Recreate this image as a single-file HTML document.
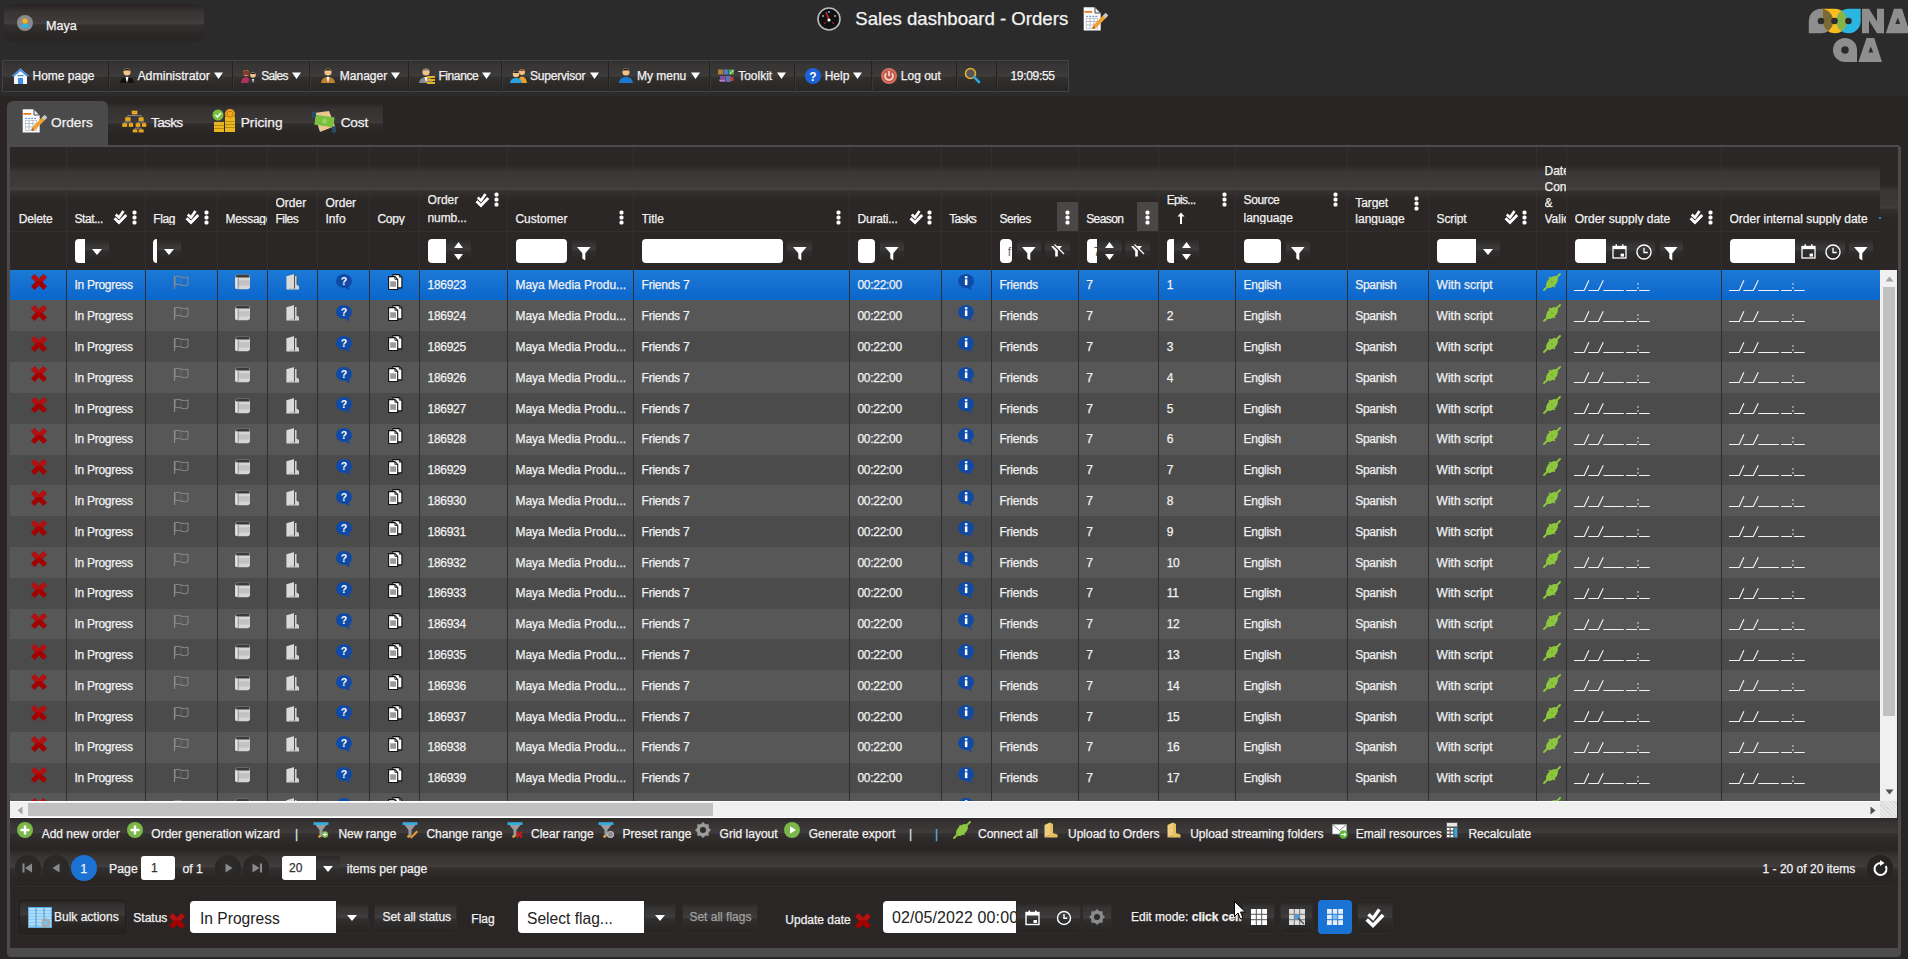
<!DOCTYPE html>
<html><head><meta charset="utf-8"><title>Sales dashboard - Orders</title>
<style>
html,body{margin:0;padding:0;}
body{width:1908px;height:959px;overflow:hidden;position:relative;background:#2a2525;font-family:"Liberation Sans", sans-serif;-webkit-text-stroke:0.25px;}
svg{display:block;overflow:visible}
</style></head><body>
<div style="position:absolute;left:0;top:0;width:1908px;height:96px;background:#2b2b2b"></div>
<div style="position:absolute;left:4px;top:4px;width:200px;height:39px;border-radius:9px;background:linear-gradient(to bottom, rgba(255,255,255,0) 2px, rgba(255,255,255,0.071) 8px, rgba(255,255,255,0.092) 16px, rgba(255,255,255,0.115) 19.5px, rgba(255,255,255,0.045) 21px, rgba(255,255,255,0) 32px), #2b2626;"></div>
<svg style="position:absolute;left:17px;top:15px" width="16" height="16" viewBox="0 0 16 16"><circle cx="8" cy="8" r="8" fill="#8a8a8a"/><circle cx="8" cy="6" r="2.6" fill="#f6b41a"/><path d="M3.2 12.5 Q3.5 9 8 9 Q12.5 9 12.8 12.5 Z" fill="#29b3e8"/></svg>
<div style="position:absolute;left:46px;top:19.53px;font-size:12.6px;line-height:12.6px;color:#f2f2f2;white-space:nowrap;">Maya</div>
<svg style="position:absolute;left:817px;top:7px" width="24" height="24" viewBox="0 0 24 24"><circle cx="12" cy="12" r="11" fill="#111" stroke="#bbb" stroke-width="1.6"/><path d="M12 13 L9 5" stroke="#e02020" stroke-width="1.5"/><circle cx="12" cy="13" r="1.6" fill="#fff"/><circle cx="6" cy="9" r="1" fill="#aaa"/><circle cx="18" cy="9" r="1" fill="#aaa"/><circle cx="12" cy="5" r="1" fill="#6af"/><path d="M7 17 L9 15 M17 17 L15 15" stroke="#e02020" stroke-width="1"/></svg>
<div style="position:absolute;left:855.3px;top:10.06px;font-size:18.6px;line-height:18.6px;color:#f4f4f4;white-space:nowrap;">Sales dashboard - Orders</div>
<svg style="position:absolute;left:1083px;top:7px" width="25" height="25" viewBox="0 0 25 25"><path d="M0.7 0.2 H12 L17.7 6 V23.6 H0.7 Z" fill="#fafafa"/><path d="M12 0.2 V6 H17.7 Z" fill="#f0f0f0" stroke="#333" stroke-width=".9" stroke-linejoin="round"/><rect x="1.4" y="4" width="7.8" height="1.7" fill="#e8741a"/><g fill="#5a8ac8"><rect x="3.3" y="8.8" width="1.6" height="1.3"/><rect x="6.3" y="8.8" width="1.6" height="1.3"/><rect x="9.3" y="8.8" width="1.6" height="1.3"/><rect x="12.3" y="8.8" width="1.6" height="1.3"/></g><rect x="3" y="11" width="12" height="10.6" fill="#aab4be"/><rect x="3.6" y="11.6" width="3" height="2.6" fill="#fff"/><rect x="7.5" y="11.6" width="3" height="2.6" fill="#fff"/><rect x="11.4" y="11.6" width="3" height="2.6" fill="#fff"/><rect x="3.6" y="15.0" width="3" height="2.6" fill="#fff"/><rect x="7.5" y="15.0" width="3" height="2.6" fill="#fff"/><rect x="11.4" y="15.0" width="3" height="2.6" fill="#fff"/><rect x="3.6" y="18.4" width="3" height="2.6" fill="#fff"/><rect x="7.5" y="18.4" width="3" height="2.6" fill="#fff"/><rect x="11.4" y="18.4" width="3" height="2.6" fill="#fff"/><path d="M11.6 19.6 L22.6 8.6" stroke="#f0a030" stroke-width="3.8"/><path d="M21.2 10 L24 7.2" stroke="#c8c8c8" stroke-width="3.8"/><path d="M9.8 21.4 L11.6 19.6" stroke="#c86a18" stroke-width="2.6"/></svg>
<svg style="position:absolute;left:0;top:0" width="1908" height="70" viewBox="0 0 1908 70">
<g fill="#8e8e8e">
<path d="M1808.8 21 A12.2 12.2 0 0 1 1821 8.8 A12.2 12.2 0 0 1 1833.2 21 A12.2 12.2 0 0 1 1821 33.2 H1808.8 Z"/>
<path d="M1862 33.2 V8.8 H1869 L1877 21.5 V8.8 H1884 V33.2 H1877 L1869 20.5 V33.2 Z"/>
<path d="M1894 8.8 H1902 L1910 33.2 H1885.8 Z"/>
<path d="M1833 50 A12 12 0 0 1 1845 38 A12 12 0 0 1 1857 50 V62 H1845 A12 12 0 0 1 1833 50 Z"/>
<path d="M1866.5 38 H1874.2 L1882 62 H1858.4 Z"/>
</g>
<defs><clipPath id="cg"><path d="M1808.8 21 A12.2 12.2 0 0 1 1821 8.8 A12.2 12.2 0 0 1 1833.2 21 A12.2 12.2 0 0 1 1821 33.2 H1808.8 Z"/></clipPath><clipPath id="cy"><path d="M1822.8 8.8 H1835 A12.2 12.2 0 0 1 1847.2 21 A12.2 12.2 0 0 1 1835 33.2 A12.2 12.2 0 0 1 1822.8 21 Z"/></clipPath></defs><path d="M1822.8 8.8 H1835 A12.2 12.2 0 0 1 1847.2 21 A12.2 12.2 0 0 1 1835 33.2 A12.2 12.2 0 0 1 1822.8 21 Z" fill="#fbbd1c"/><path d="M1836.3 21 A12.2 12.2 0 0 1 1848.5 8.8 H1860.7 V21 A12.2 12.2 0 0 1 1848.5 33.2 A12.2 12.2 0 0 1 1836.3 21 Z" fill="#29b6e0"/><path d="M1822.8 8.8 H1835 A12.2 12.2 0 0 1 1847.2 21 A12.2 12.2 0 0 1 1835 33.2 A12.2 12.2 0 0 1 1822.8 21 Z" fill="#7a6a36" clip-path="url(#cg)"/><path d="M1836.3 21 A12.2 12.2 0 0 1 1848.5 8.8 H1860.7 V21 A12.2 12.2 0 0 1 1848.5 33.2 A12.2 12.2 0 0 1 1836.3 21 Z" fill="#86b446" clip-path="url(#cy)"/>
<g fill="#2b2b2b">
<circle cx="1821" cy="21" r="3.3"/><circle cx="1834.5" cy="21" r="3.3"/><circle cx="1848.5" cy="21" r="3.3"/>
<circle cx="1845" cy="50" r="3.8"/>
<path d="M1897.8 17.5 L1900.2 24 H1895.4 Z"/>
<path d="M1870.8 46.5 L1873.2 52.5 H1868.4 Z"/>
</g></svg>
<div style="position:absolute;left:2px;top:60px;width:1067px;height:32px;box-sizing:border-box;border:1px solid #444242;background:linear-gradient(to bottom, rgba(255,255,255,0) -2.5px, rgba(255,255,255,0.062) 3.5px, rgba(255,255,255,0.080) 11.5px, rgba(255,255,255,0.1) 15.0px, rgba(255,255,255,0.04) 16.5px, rgba(255,255,255,0) 27.5px), #2a2727;"></div>
<div style="position:absolute;left:107.5px;top:61px;width:1px;height:29px;background:#252222;box-shadow:1px 0 0 #3a3737"></div>
<div style="position:absolute;left:231.7px;top:61px;width:1px;height:29px;background:#252222;box-shadow:1px 0 0 #3a3737"></div>
<div style="position:absolute;left:309.4px;top:61px;width:1px;height:29px;background:#252222;box-shadow:1px 0 0 #3a3737"></div>
<div style="position:absolute;left:408.4px;top:61px;width:1px;height:29px;background:#252222;box-shadow:1px 0 0 #3a3737"></div>
<div style="position:absolute;left:500.6px;top:61px;width:1px;height:29px;background:#252222;box-shadow:1px 0 0 #3a3737"></div>
<div style="position:absolute;left:607.6px;top:61px;width:1px;height:29px;background:#252222;box-shadow:1px 0 0 #3a3737"></div>
<div style="position:absolute;left:708.5px;top:61px;width:1px;height:29px;background:#252222;box-shadow:1px 0 0 #3a3737"></div>
<div style="position:absolute;left:794.4px;top:61px;width:1px;height:29px;background:#252222;box-shadow:1px 0 0 #3a3737"></div>
<div style="position:absolute;left:871.4px;top:61px;width:1px;height:29px;background:#252222;box-shadow:1px 0 0 #3a3737"></div>
<div style="position:absolute;left:955.6px;top:61px;width:1px;height:29px;background:#252222;box-shadow:1px 0 0 #3a3737"></div>
<div style="position:absolute;left:996.2px;top:61px;width:1px;height:29px;background:#252222;box-shadow:1px 0 0 #3a3737"></div>
<svg style="position:absolute;left:12px;top:68px" width="17" height="16" viewBox="0 0 17 16"><path d="M8.5 0.5 L17 8 L15 8 L15 16 L2 16 L2 8 L0 8 Z" fill="#f4f4f4"/><path d="M8.5 0.5 L17 8 L15.2 8.8 L8.5 3 L1.8 8.8 L0 8 Z" fill="#3d8ee0"/><rect x="6" y="10" width="5" height="6" fill="#3d8ee0"/><rect x="5.5" y="7" width="6" height="1.2" fill="#3d8ee0"/></svg>
<div style="position:absolute;left:32.5px;top:69.84px;font-size:12px;line-height:12px;color:#f2f2f2;white-space:nowrap;">Home page</div>
<svg style="position:absolute;left:118.5px;top:67px" width="16" height="16" viewBox="0 0 16 16"><circle cx="8" cy="5" r="3.6" fill="#f2c28a"/><path d="M4.3 4 Q8 -0.5 11.7 4 Q8 2.5 4.3 4Z" fill="#111"/><path d="M1 16 Q1.5 10 8 10 Q14.5 10 15 16 Z" fill="#111"/><path d="M6.5 10 L8 16 L9.5 10 Z" fill="#fff"/></svg>
<div style="position:absolute;left:137.4px;top:69.59px;font-size:12.3px;line-height:12.3px;color:#f2f2f2;white-space:nowrap;">Administrator</div>
<svg style="position:absolute;left:214px;top:71.5px" width="9" height="7" viewBox="0 0 9 7"><path d="M0 0.5 H9 L4.5 7 Z" fill="#fff"/></svg>
<svg style="position:absolute;left:241px;top:68px" width="17" height="15" viewBox="0 0 17 15"><circle cx="5" cy="5" r="3" fill="#f2c28a"/><path d="M2 4 Q5 0 8 4 L8 8 Q5 6 2 8Z" fill="#8a3a2a"/><path d="M0 15 Q0.5 9 5 9 Q9 9 9 15Z" fill="#b03060"/><circle cx="12" cy="7" r="2.8" fill="#f2c28a"/><path d="M9.3 6 Q12 3 14.7 6Z" fill="#111"/><path d="M7 15 Q7.5 11 12 11 Q16.5 11 17 15Z" fill="#333"/><path d="M11 11 L12 15 L13 11Z" fill="#fff"/></svg>
<div style="position:absolute;left:261.3px;top:69.84px;font-size:12px;line-height:12px;color:#f2f2f2;white-space:nowrap;letter-spacing:-0.7px">Sales</div>
<svg style="position:absolute;left:292px;top:71.5px" width="9" height="7" viewBox="0 0 9 7"><path d="M0 0.5 H9 L4.5 7 Z" fill="#fff"/></svg>
<svg style="position:absolute;left:320px;top:67px" width="16" height="16" viewBox="0 0 16 16"><circle cx="8" cy="5" r="3.6" fill="#f2c28a"/><path d="M4.3 4 Q8 -0.5 11.7 4 Q8 2.5 4.3 4Z" fill="#111"/><path d="M1 16 Q1.5 10 8 10 Q14.5 10 15 16 Z" fill="#c08030"/><path d="M6.5 10 L8 16 L9.5 10 Z" fill="#fff"/></svg>
<div style="position:absolute;left:339.8px;top:69.84px;font-size:12px;line-height:12px;color:#f2f2f2;white-space:nowrap;">Manager</div>
<svg style="position:absolute;left:390.5px;top:71.5px" width="9" height="7" viewBox="0 0 9 7"><path d="M0 0.5 H9 L4.5 7 Z" fill="#fff"/></svg>
<svg style="position:absolute;left:418.4px;top:67px" width="16" height="16" viewBox="0 0 16 16"><circle cx="8" cy="5" r="3.6" fill="#f2c28a"/><path d="M4.3 4 Q8 -0.5 11.7 4 Q8 2.5 4.3 4Z" fill="#777"/><path d="M1 16 Q1.5 10 8 10 Q14.5 10 15 16 Z" fill="#888"/><path d="M6.5 10 L8 16 L9.5 10 Z" fill="#fff"/></svg>
<svg style="position:absolute;left:427px;top:75px" width="8" height="9" viewBox="0 0 8 9"><g fill="#e8b020"><rect x="0" y="1" width="8" height="2"/><rect x="0" y="4" width="8" height="2"/><rect x="0" y="7" width="8" height="2"/></g></svg>
<div style="position:absolute;left:438.4px;top:69.84px;font-size:12px;line-height:12px;color:#f2f2f2;white-space:nowrap;letter-spacing:-0.4px">Finance</div>
<svg style="position:absolute;left:482.4px;top:71.5px" width="9" height="7" viewBox="0 0 9 7"><path d="M0 0.5 H9 L4.5 7 Z" fill="#fff"/></svg>
<svg style="position:absolute;left:509.6px;top:67px" width="17" height="16" viewBox="0 0 17 16"><circle cx="12" cy="5" r="3" fill="#f2c28a"/><path d="M8 16 Q8.5 9.5 12 9.5 Q16 9.5 17 16Z" fill="#f0a020"/><path d="M9 4 Q12 0 15 4Z" fill="#8a4a2a"/><circle cx="6" cy="7" r="3.2" fill="#f2c28a"/><path d="M2.8 6 Q6 2 9.2 6Z" fill="#222"/><path d="M0 16 Q0.5 11 6 11 Q11.5 11 12 16Z" fill="#2aa0e0"/></svg>
<div style="position:absolute;left:530px;top:69.84px;font-size:12px;line-height:12px;color:#f2f2f2;white-space:nowrap;letter-spacing:-0.22px">Supervisor</div>
<svg style="position:absolute;left:590px;top:71.5px" width="9" height="7" viewBox="0 0 9 7"><path d="M0 0.5 H9 L4.5 7 Z" fill="#fff"/></svg>
<svg style="position:absolute;left:617.6px;top:67px" width="16" height="16" viewBox="0 0 16 16"><circle cx="8" cy="5" r="3.6" fill="#f2c28a"/><path d="M4.3 4 Q8 -0.5 11.7 4 Q8 2.5 4.3 4Z" fill="#111"/><path d="M1 16 Q1.5 10 8 10 Q14.5 10 15 16 Z" fill="#1a7ad0"/><path d="M6.5 10 L8 16 L9.5 10 Z" fill="#1a7ad0"/></svg>
<div style="position:absolute;left:636.9px;top:69.84px;font-size:12px;line-height:12px;color:#f2f2f2;white-space:nowrap;">My menu</div>
<svg style="position:absolute;left:690.5px;top:71.5px" width="9" height="7" viewBox="0 0 9 7"><path d="M0 0.5 H9 L4.5 7 Z" fill="#fff"/></svg>
<svg style="position:absolute;left:717.5px;top:69px" width="16" height="14" viewBox="0 0 16 14"><rect x="0" y="0.5" width="5" height="5" fill="#b08030"/><rect x="5.5" y="0.5" width="5" height="5" fill="#5080c0"/><rect x="11" y="0.5" width="5" height="5" fill="#50a040"/><rect x="2" y="7" width="5" height="6" fill="#8050a0"/><rect x="7.5" y="7" width="5" height="6" fill="#6070b0"/><rect x="12" y="8" width="3.5" height="4" fill="#c04040"/><path d="M12 5 L15.5 1" stroke="#fff" stroke-width="1"/><path d="M1 11 Q4 13 7 11" stroke="#c090d0" stroke-width="1" fill="none"/></svg>
<div style="position:absolute;left:738.2px;top:69.84px;font-size:12px;line-height:12px;color:#f2f2f2;white-space:nowrap;">Toolkit</div>
<svg style="position:absolute;left:776.8px;top:71.5px" width="9" height="7" viewBox="0 0 9 7"><path d="M0 0.5 H9 L4.5 7 Z" fill="#fff"/></svg>
<svg style="position:absolute;left:805px;top:67.5px" width="16" height="16" viewBox="0 0 16 16"><circle cx="8" cy="8" r="8" fill="#1d62d8"/><text x="8" y="12.6" font-size="12" font-weight="bold" text-anchor="middle" fill="#fff" font-family="Liberation Sans">?</text></svg>
<div style="position:absolute;left:824.7px;top:69.84px;font-size:12px;line-height:12px;color:#f2f2f2;white-space:nowrap;">Help</div>
<svg style="position:absolute;left:853px;top:71.5px" width="9" height="7" viewBox="0 0 9 7"><path d="M0 0.5 H9 L4.5 7 Z" fill="#fff"/></svg>
<svg style="position:absolute;left:880.6px;top:67.5px" width="16" height="16" viewBox="0 0 16 16"><circle cx="8" cy="8" r="8" fill="#d87060"/><circle cx="8" cy="8" r="6.4" fill="#c85a4a"/><path d="M5.2 5.2 A4 4 0 1 0 10.8 5.2" stroke="#f4e0dc" stroke-width="1.6" fill="none"/><path d="M8 3 V8" stroke="#f4e0dc" stroke-width="1.6"/></svg>
<div style="position:absolute;left:900.8px;top:69.84px;font-size:12px;line-height:12px;color:#f2f2f2;white-space:nowrap;">Log out</div>
<svg style="position:absolute;left:963.5px;top:66.5px" width="17" height="17" viewBox="0 0 17 17"><circle cx="6.5" cy="6.5" r="5" fill="#555" stroke="#e8b030" stroke-width="1.6"/><path d="M10.2 10.2 L15 15" stroke="#2aa8e0" stroke-width="2.6" stroke-linecap="round"/></svg>
<div style="position:absolute;left:1010.4px;top:69.84px;font-size:12px;line-height:12px;color:#f2f2f2;white-space:nowrap;letter-spacing:-0.3px">19:09:55</div>
<div style="position:absolute;left:7px;top:101px;width:376px;height:44px;background:linear-gradient(to bottom, rgba(255,255,255,0) 2px, rgba(255,255,255,0.062) 8px, rgba(255,255,255,0.080) 18px, rgba(255,255,255,0.1) 21.5px, rgba(255,255,255,0.035) 23px, rgba(255,255,255,0) 34px), #2a2525;"></div>
<div style="position:absolute;left:7px;top:101px;width:101px;height:44px;background:#4a4a4a;border-radius:6px 6px 0 0"></div>
<svg style="position:absolute;left:22px;top:109px" width="25" height="24" viewBox="0 0 25 24"><path d="M0.7 0.2 H12 L17.7 6 V23.6 H0.7 Z" fill="#fafafa"/><path d="M12 0.2 V6 H17.7 Z" fill="#f0f0f0" stroke="#333" stroke-width=".9" stroke-linejoin="round"/><rect x="1.4" y="4" width="7.8" height="1.7" fill="#e8741a"/><g fill="#5a8ac8"><rect x="3.3" y="8.8" width="1.6" height="1.3"/><rect x="6.3" y="8.8" width="1.6" height="1.3"/><rect x="9.3" y="8.8" width="1.6" height="1.3"/><rect x="12.3" y="8.8" width="1.6" height="1.3"/></g><rect x="3" y="11" width="12" height="10.6" fill="#aab4be"/><rect x="3.6" y="11.6" width="3" height="2.6" fill="#fff"/><rect x="7.5" y="11.6" width="3" height="2.6" fill="#fff"/><rect x="11.4" y="11.6" width="3" height="2.6" fill="#fff"/><rect x="3.6" y="15.0" width="3" height="2.6" fill="#fff"/><rect x="7.5" y="15.0" width="3" height="2.6" fill="#fff"/><rect x="11.4" y="15.0" width="3" height="2.6" fill="#fff"/><rect x="3.6" y="18.4" width="3" height="2.6" fill="#fff"/><rect x="7.5" y="18.4" width="3" height="2.6" fill="#fff"/><rect x="11.4" y="18.4" width="3" height="2.6" fill="#fff"/><path d="M11.6 19.6 L22.6 8.6" stroke="#f0a030" stroke-width="3.8"/><path d="M21.2 10 L24 7.2" stroke="#c8c8c8" stroke-width="3.8"/><path d="M9.8 21.4 L11.6 19.6" stroke="#c86a18" stroke-width="2.6"/></svg>
<div style="position:absolute;left:51px;top:116.40px;font-size:13.7px;line-height:13.7px;color:#f2f2f2;white-space:nowrap;">Orders</div>
<svg style="position:absolute;left:121.6px;top:109.5px" width="25" height="23" viewBox="0 0 25 23"><path d="M12.6 4.3 V5.6 M5.8 5.6 H19.2 M5.8 5.6 V7.3 M19.2 5.6 V7.3 M5.8 10.9 V12 M2.7 12 H9 M2.7 12 V13.2 M9 12 V13.2 M19.2 10.9 V12 M16 12 H22.1 M16 12 V13.2 M22.1 12 V13.2 M16 16.8 V18.2 M13 18.2 H19.2 M13 18.2 V19.4 M19.2 18.2 V19.4" stroke="#9a9a9a" stroke-width=".8" fill="none"/><rect x="9.8" y="0.7" width="5.6" height="3.6" fill="#f2b01e"/><rect x="10.8" y="1.9" width="3.5999999999999996" height="0.8" fill="#c8801a" opacity=".6"/><rect x="3.2" y="7.3" width="5.3" height="3.6" fill="#f2b01e"/><rect x="4.2" y="8.5" width="3.3" height="0.8" fill="#c8801a" opacity=".6"/><rect x="16.7" y="7.3" width="4.9" height="3.6" fill="#f2b01e"/><rect x="17.7" y="8.5" width="2.9000000000000004" height="0.8" fill="#c8801a" opacity=".6"/><rect x="0.3" y="13.2" width="4.9" height="3.6" fill="#f2b01e"/><rect x="1.3" y="14.399999999999999" width="2.9000000000000004" height="0.8" fill="#c8801a" opacity=".6"/><rect x="6.8" y="13.2" width="4.3" height="3.6" fill="#f2b01e"/><rect x="7.8" y="14.399999999999999" width="2.3" height="0.8" fill="#c8801a" opacity=".6"/><rect x="13.7" y="13.2" width="4.6" height="3.6" fill="#f2b01e"/><rect x="14.7" y="14.399999999999999" width="2.5999999999999996" height="0.8" fill="#c8801a" opacity=".6"/><rect x="19.9" y="13.2" width="4.3" height="3.6" fill="#f2b01e"/><rect x="20.9" y="14.399999999999999" width="2.3" height="0.8" fill="#c8801a" opacity=".6"/><rect x="10.8" y="19.4" width="4.6" height="3" fill="#f2b01e"/><rect x="11.8" y="20.599999999999998" width="2.5999999999999996" height="0.8" fill="#c8801a" opacity=".6"/><rect x="16.7" y="19.4" width="4.9" height="3" fill="#f2b01e"/><rect x="17.7" y="20.599999999999998" width="2.9000000000000004" height="0.8" fill="#c8801a" opacity=".6"/></svg>
<div style="position:absolute;left:151px;top:116.40px;font-size:13.7px;line-height:13.7px;color:#f2f2f2;white-space:nowrap;letter-spacing:-0.7px">Tasks</div>
<svg style="position:absolute;left:211.7px;top:109px" width="24" height="24" viewBox="0 0 24 24"><g fill="#e8b820"><rect x="2" y="13" width="10" height="10"/><rect x="13" y="8" width="10" height="15"/></g><g fill="#c08a10"><rect x="2" y="16" width="10" height="1"/><rect x="2" y="19" width="10" height="1"/><rect x="13" y="12" width="10" height="1"/><rect x="13" y="15" width="10" height="1"/><rect x="13" y="18" width="10" height="1"/></g><circle cx="6" cy="6" r="5.5" fill="#7ac040"/><path d="M3.5 6 L5.5 8 L9 4" stroke="#fff" stroke-width="1.5" fill="none"/><circle cx="18" cy="5" r="5" fill="#f0a818"/><circle cx="18" cy="5" r="3" fill="none" stroke="#c07a10" stroke-width="1"/></svg>
<div style="position:absolute;left:240.7px;top:116.40px;font-size:13.7px;line-height:13.7px;color:#f2f2f2;white-space:nowrap;">Pricing</div>
<svg style="position:absolute;left:312.4px;top:109.5px" width="24" height="23" viewBox="0 0 24 23"><path d="M2 3 L17 1 L23 16 L8 22 Z" fill="#e8c890"/><rect x="3" y="6" width="19" height="10" fill="#7ac040" transform="rotate(8 12 11)"/><circle cx="12.5" cy="11" r="2.5" fill="#9ad060"/><path d="M0 2 L4 1 L4 7 L0 8Z" fill="#2a4a6a"/><path d="M20 17 L24 16 L24 22 L20 23Z" fill="#2a4a6a"/></svg>
<div style="position:absolute;left:340.7px;top:116.40px;font-size:13.7px;line-height:13.7px;color:#f2f2f2;white-space:nowrap;letter-spacing:-0.2px">Cost</div>
<div style="position:absolute;left:7px;top:145px;width:1894px;height:811.6px;background:#4b4b4b;border-radius:0 4px 4px 4px"></div>
<div style="position:absolute;left:10px;top:147px;width:1888px;height:738px;background:#2b2726"></div>
<div style="position:absolute;left:10px;top:885px;width:1888px;height:62.6px;background:#2a2626"></div>
<div style="position:absolute;left:10px;top:147px;width:1870px;height:84px;background:linear-gradient(to bottom, rgba(255,255,255,0) 19px, rgba(255,255,255,0.074) 25px, rgba(255,255,255,0.096) 39px, rgba(255,255,255,0.12) 42.5px, rgba(255,255,255,0.045) 44px, rgba(255,255,255,0) 53px), #2b2726;"></div>
<div style="position:absolute;left:1880px;top:147px;width:17.6px;height:122.80000000000001px;background:linear-gradient(to bottom, rgba(255,255,255,0) 37.5px, rgba(255,255,255,0.065) 43.5px, rgba(255,255,255,0.084) 57.5px, rgba(255,255,255,0.105) 61.0px, rgba(255,255,255,0.04) 62.5px, rgba(255,255,255,0) 71.5px), #2b2726;"></div>
<div style="position:absolute;left:10px;top:231px;width:1870px;height:38.80000000000001px;background:#2b2726;border-top:1px solid #322e2e;box-sizing:border-box"></div>
<div style="position:absolute;left:65.7px;top:147px;width:1px;height:122.80000000000001px;background:rgba(60,56,56,.55)"></div>
<div style="position:absolute;left:144.7px;top:147px;width:1px;height:122.80000000000001px;background:rgba(60,56,56,.55)"></div>
<div style="position:absolute;left:216.8px;top:147px;width:1px;height:122.80000000000001px;background:rgba(60,56,56,.55)"></div>
<div style="position:absolute;left:266.9px;top:147px;width:1px;height:122.80000000000001px;background:rgba(60,56,56,.55)"></div>
<div style="position:absolute;left:317.0px;top:147px;width:1px;height:122.80000000000001px;background:rgba(60,56,56,.55)"></div>
<div style="position:absolute;left:368.9px;top:147px;width:1px;height:122.80000000000001px;background:rgba(60,56,56,.55)"></div>
<div style="position:absolute;left:419.0px;top:147px;width:1px;height:122.80000000000001px;background:rgba(60,56,56,.55)"></div>
<div style="position:absolute;left:507.0px;top:147px;width:1px;height:122.80000000000001px;background:rgba(60,56,56,.55)"></div>
<div style="position:absolute;left:633.0px;top:147px;width:1px;height:122.80000000000001px;background:rgba(60,56,56,.55)"></div>
<div style="position:absolute;left:849.0px;top:147px;width:1px;height:122.80000000000001px;background:rgba(60,56,56,.55)"></div>
<div style="position:absolute;left:941.1px;top:147px;width:1px;height:122.80000000000001px;background:rgba(60,56,56,.55)"></div>
<div style="position:absolute;left:990.9px;top:147px;width:1px;height:122.80000000000001px;background:rgba(60,56,56,.55)"></div>
<div style="position:absolute;left:1078.0px;top:147px;width:1px;height:122.80000000000001px;background:rgba(60,56,56,.55)"></div>
<div style="position:absolute;left:1158.0px;top:147px;width:1px;height:122.80000000000001px;background:rgba(60,56,56,.55)"></div>
<div style="position:absolute;left:1234.9px;top:147px;width:1px;height:122.80000000000001px;background:rgba(60,56,56,.55)"></div>
<div style="position:absolute;left:1347.0px;top:147px;width:1px;height:122.80000000000001px;background:rgba(60,56,56,.55)"></div>
<div style="position:absolute;left:1427.8px;top:147px;width:1px;height:122.80000000000001px;background:rgba(60,56,56,.55)"></div>
<div style="position:absolute;left:1536.0px;top:147px;width:1px;height:122.80000000000001px;background:rgba(60,56,56,.55)"></div>
<div style="position:absolute;left:1566.1px;top:147px;width:1px;height:122.80000000000001px;background:rgba(60,56,56,.55)"></div>
<div style="position:absolute;left:1721.1px;top:147px;width:1px;height:122.80000000000001px;background:rgba(60,56,56,.55)"></div>
<div style="position:absolute;left:18.7px;top:212.74px;width:47.0px;overflow:hidden;font-size:12px;line-height:12px;color:#f2f2f2;white-space:nowrap;letter-spacing:-0.15px">Delete</div>
<div style="position:absolute;left:74.5px;top:212.74px;width:70.2px;overflow:hidden;font-size:12px;line-height:12px;color:#f2f2f2;white-space:nowrap;letter-spacing:-0.43px">Stat...</div>
<div style="position:absolute;left:153.3px;top:212.74px;width:63.5px;overflow:hidden;font-size:12px;line-height:12px;color:#f2f2f2;white-space:nowrap;letter-spacing:-0.4px">Flag</div>
<div style="position:absolute;left:225.5px;top:212.74px;width:41.4px;overflow:hidden;font-size:12px;line-height:12px;color:#f2f2f2;white-space:nowrap;letter-spacing:-0.3px">Messages</div>
<div style="position:absolute;left:275.5px;top:196.84px;width:41.5px;overflow:hidden;font-size:12px;line-height:12px;color:#f2f2f2;white-space:nowrap;letter-spacing:0px">Order</div>
<div style="position:absolute;left:275.5px;top:212.74px;width:41.5px;overflow:hidden;font-size:12px;line-height:12px;color:#f2f2f2;white-space:nowrap;letter-spacing:-0.54px">Files</div>
<div style="position:absolute;left:325.4px;top:196.84px;width:43.5px;overflow:hidden;font-size:12px;line-height:12px;color:#f2f2f2;white-space:nowrap;letter-spacing:0px">Order</div>
<div style="position:absolute;left:325.4px;top:212.74px;width:43.5px;overflow:hidden;font-size:12px;line-height:12px;color:#f2f2f2;white-space:nowrap;letter-spacing:0.1px">Info</div>
<div style="position:absolute;left:377.4px;top:212.74px;width:41.6px;overflow:hidden;font-size:12px;line-height:12px;color:#f2f2f2;white-space:nowrap;letter-spacing:-0.2px">Copy</div>
<div style="position:absolute;left:427.6px;top:193.64px;width:79.4px;overflow:hidden;font-size:12px;line-height:12px;color:#f2f2f2;white-space:nowrap;letter-spacing:0px">Order</div>
<div style="position:absolute;left:427.6px;top:212.14px;width:79.4px;overflow:hidden;font-size:12px;line-height:12px;color:#f2f2f2;white-space:nowrap;letter-spacing:-0.15px">numb...</div>
<div style="position:absolute;left:515.4px;top:212.74px;width:117.6px;overflow:hidden;font-size:12px;line-height:12px;color:#f2f2f2;white-space:nowrap;letter-spacing:0px">Customer</div>
<div style="position:absolute;left:641.6px;top:212.74px;width:207.4px;overflow:hidden;font-size:12px;line-height:12px;color:#f2f2f2;white-space:nowrap;letter-spacing:0px">Title</div>
<div style="position:absolute;left:857.5px;top:212.74px;width:83.6px;overflow:hidden;font-size:12px;line-height:12px;color:#f2f2f2;white-space:nowrap;letter-spacing:-0.21px">Durati...</div>
<div style="position:absolute;left:949.3px;top:212.74px;width:41.6px;overflow:hidden;font-size:12px;line-height:12px;color:#f2f2f2;white-space:nowrap;letter-spacing:-0.78px">Tasks</div>
<div style="position:absolute;left:999.5px;top:212.74px;width:78.5px;overflow:hidden;font-size:12px;line-height:12px;color:#f2f2f2;white-space:nowrap;letter-spacing:-0.47px">Series</div>
<div style="position:absolute;left:1086.2px;top:212.74px;width:71.8px;overflow:hidden;font-size:12px;line-height:12px;color:#f2f2f2;white-space:nowrap;letter-spacing:-0.57px">Season</div>
<div style="position:absolute;left:1166.7px;top:193.94px;width:68.2px;overflow:hidden;font-size:12px;line-height:12px;color:#f2f2f2;white-space:nowrap;letter-spacing:-0.67px">Epis...</div>
<div style="position:absolute;left:1243.5px;top:193.94px;width:103.5px;overflow:hidden;font-size:12px;line-height:12px;color:#f2f2f2;white-space:nowrap;letter-spacing:-0.35px">Source</div>
<div style="position:absolute;left:1243.5px;top:212.24px;width:103.5px;overflow:hidden;font-size:12px;line-height:12px;color:#f2f2f2;white-space:nowrap;letter-spacing:0px">language</div>
<div style="position:absolute;left:1355.3px;top:197.24px;width:72.5px;overflow:hidden;font-size:12px;line-height:12px;color:#f2f2f2;white-space:nowrap;letter-spacing:-0.11px">Target</div>
<div style="position:absolute;left:1355.3px;top:213.04px;width:72.5px;overflow:hidden;font-size:12px;line-height:12px;color:#f2f2f2;white-space:nowrap;letter-spacing:0px">language</div>
<div style="position:absolute;left:1436.6px;top:212.74px;width:99.4px;overflow:hidden;font-size:12px;line-height:12px;color:#f2f2f2;white-space:nowrap;letter-spacing:-0.13px">Script</div>
<div style="position:absolute;left:1544.5px;top:165.04px;width:21.6px;overflow:hidden;font-size:12px;line-height:12px;color:#f2f2f2;white-space:nowrap;letter-spacing:0px">Date</div>
<div style="position:absolute;left:1544.5px;top:180.94px;width:21.6px;overflow:hidden;font-size:12px;line-height:12px;color:#f2f2f2;white-space:nowrap;letter-spacing:0px">Con</div>
<div style="position:absolute;left:1544.5px;top:196.84px;width:21.6px;overflow:hidden;font-size:12px;line-height:12px;color:#f2f2f2;white-space:nowrap;letter-spacing:0px">&amp;</div>
<div style="position:absolute;left:1544.5px;top:212.74px;width:21.6px;overflow:hidden;font-size:12px;line-height:12px;color:#f2f2f2;white-space:nowrap;letter-spacing:0px">Valic</div>
<div style="position:absolute;left:1574.7px;top:212.74px;width:146.4px;overflow:hidden;font-size:12px;line-height:12px;color:#f2f2f2;white-space:nowrap;letter-spacing:0px">Order supply date</div>
<div style="position:absolute;left:1729.5px;top:212.74px;width:150.0px;overflow:hidden;font-size:12px;line-height:12px;color:#f2f2f2;white-space:nowrap;letter-spacing:0px">Order internal supply date</div>
<svg style="position:absolute;left:114px;top:209.5px" width="14" height="14" viewBox="0 0 14 14"><path d="M1.75 4.5 L5 7.5 L9.5 1" stroke="#fff" stroke-width="2.6" fill="none" stroke-linejoin="miter"/><path d="M0.5 8.25 L5 12.5 L12.25 5" stroke="#fff" stroke-width="2.8" fill="none"/></svg>
<svg style="position:absolute;left:185.8px;top:209.5px" width="14" height="14" viewBox="0 0 14 14"><path d="M1.75 4.5 L5 7.5 L9.5 1" stroke="#fff" stroke-width="2.6" fill="none" stroke-linejoin="miter"/><path d="M0.5 8.25 L5 12.5 L12.25 5" stroke="#fff" stroke-width="2.8" fill="none"/></svg>
<svg style="position:absolute;left:910.2px;top:209.5px" width="14" height="14" viewBox="0 0 14 14"><path d="M1.75 4.5 L5 7.5 L9.5 1" stroke="#fff" stroke-width="2.6" fill="none" stroke-linejoin="miter"/><path d="M0.5 8.25 L5 12.5 L12.25 5" stroke="#fff" stroke-width="2.8" fill="none"/></svg>
<svg style="position:absolute;left:1505px;top:209.5px" width="14" height="14" viewBox="0 0 14 14"><path d="M1.75 4.5 L5 7.5 L9.5 1" stroke="#fff" stroke-width="2.6" fill="none" stroke-linejoin="miter"/><path d="M0.5 8.25 L5 12.5 L12.25 5" stroke="#fff" stroke-width="2.8" fill="none"/></svg>
<svg style="position:absolute;left:1690px;top:209.5px" width="14" height="14" viewBox="0 0 14 14"><path d="M1.75 4.5 L5 7.5 L9.5 1" stroke="#fff" stroke-width="2.6" fill="none" stroke-linejoin="miter"/><path d="M0.5 8.25 L5 12.5 L12.25 5" stroke="#fff" stroke-width="2.8" fill="none"/></svg>
<svg style="position:absolute;left:131.7px;top:209.8px" width="5" height="14" viewBox="0 0 5 14"><rect x="0.5" y="0.5" width="4" height="4" rx="1.6" fill="#fff"/><rect x="0.5" y="5.5" width="4" height="4" rx="1.6" fill="#fff"/><rect x="0.5" y="10.5" width="4" height="4" rx="1.6" fill="#fff"/></svg>
<svg style="position:absolute;left:203.7px;top:209.8px" width="5" height="14" viewBox="0 0 5 14"><rect x="0.5" y="0.5" width="4" height="4" rx="1.6" fill="#fff"/><rect x="0.5" y="5.5" width="4" height="4" rx="1.6" fill="#fff"/><rect x="0.5" y="10.5" width="4" height="4" rx="1.6" fill="#fff"/></svg>
<svg style="position:absolute;left:493.8px;top:192px" width="5" height="14" viewBox="0 0 5 14"><rect x="0.5" y="0.5" width="4" height="4" rx="1.6" fill="#fff"/><rect x="0.5" y="5.5" width="4" height="4" rx="1.6" fill="#fff"/><rect x="0.5" y="10.5" width="4" height="4" rx="1.6" fill="#fff"/></svg>
<svg style="position:absolute;left:619.3px;top:209.8px" width="5" height="14" viewBox="0 0 5 14"><rect x="0.5" y="0.5" width="4" height="4" rx="1.6" fill="#fff"/><rect x="0.5" y="5.5" width="4" height="4" rx="1.6" fill="#fff"/><rect x="0.5" y="10.5" width="4" height="4" rx="1.6" fill="#fff"/></svg>
<svg style="position:absolute;left:835.5px;top:209.8px" width="5" height="14" viewBox="0 0 5 14"><rect x="0.5" y="0.5" width="4" height="4" rx="1.6" fill="#fff"/><rect x="0.5" y="5.5" width="4" height="4" rx="1.6" fill="#fff"/><rect x="0.5" y="10.5" width="4" height="4" rx="1.6" fill="#fff"/></svg>
<svg style="position:absolute;left:927.2px;top:209.8px" width="5" height="14" viewBox="0 0 5 14"><rect x="0.5" y="0.5" width="4" height="4" rx="1.6" fill="#fff"/><rect x="0.5" y="5.5" width="4" height="4" rx="1.6" fill="#fff"/><rect x="0.5" y="10.5" width="4" height="4" rx="1.6" fill="#fff"/></svg>
<svg style="position:absolute;left:1221.7px;top:192px" width="5" height="14" viewBox="0 0 5 14"><rect x="0.5" y="0.5" width="4" height="4" rx="1.6" fill="#fff"/><rect x="0.5" y="5.5" width="4" height="4" rx="1.6" fill="#fff"/><rect x="0.5" y="10.5" width="4" height="4" rx="1.6" fill="#fff"/></svg>
<svg style="position:absolute;left:1333px;top:192px" width="5" height="14" viewBox="0 0 5 14"><rect x="0.5" y="0.5" width="4" height="4" rx="1.6" fill="#fff"/><rect x="0.5" y="5.5" width="4" height="4" rx="1.6" fill="#fff"/><rect x="0.5" y="10.5" width="4" height="4" rx="1.6" fill="#fff"/></svg>
<svg style="position:absolute;left:1414.2px;top:196px" width="5" height="14" viewBox="0 0 5 14"><rect x="0.5" y="0.5" width="4" height="4" rx="1.6" fill="#fff"/><rect x="0.5" y="5.5" width="4" height="4" rx="1.6" fill="#fff"/><rect x="0.5" y="10.5" width="4" height="4" rx="1.6" fill="#fff"/></svg>
<svg style="position:absolute;left:1522.3px;top:209.8px" width="5" height="14" viewBox="0 0 5 14"><rect x="0.5" y="0.5" width="4" height="4" rx="1.6" fill="#fff"/><rect x="0.5" y="5.5" width="4" height="4" rx="1.6" fill="#fff"/><rect x="0.5" y="10.5" width="4" height="4" rx="1.6" fill="#fff"/></svg>
<svg style="position:absolute;left:1707.7px;top:209.8px" width="5" height="14" viewBox="0 0 5 14"><rect x="0.5" y="0.5" width="4" height="4" rx="1.6" fill="#fff"/><rect x="0.5" y="5.5" width="4" height="4" rx="1.6" fill="#fff"/><rect x="0.5" y="10.5" width="4" height="4" rx="1.6" fill="#fff"/></svg>
<svg style="position:absolute;left:476px;top:192.5px" width="14" height="14" viewBox="0 0 14 14"><path d="M1.75 4.5 L5 7.5 L9.5 1" stroke="#fff" stroke-width="2.6" fill="none" stroke-linejoin="miter"/><path d="M0.5 8.25 L5 12.5 L12.25 5" stroke="#fff" stroke-width="2.8" fill="none"/></svg>
<div style="position:absolute;left:1057px;top:202px;width:21px;height:28.7px;background:#4a4747"></div>
<div style="position:absolute;left:1137px;top:202px;width:21px;height:28.7px;background:#4a4747"></div>
<svg style="position:absolute;left:1065px;top:209.5px" width="5" height="14" viewBox="0 0 5 14"><rect x="0.5" y="0.5" width="4" height="4" rx="1.6" fill="#fff"/><rect x="0.5" y="5.5" width="4" height="4" rx="1.6" fill="#fff"/><rect x="0.5" y="10.5" width="4" height="4" rx="1.6" fill="#fff"/></svg>
<svg style="position:absolute;left:1145px;top:209.5px" width="5" height="14" viewBox="0 0 5 14"><rect x="0.5" y="0.5" width="4" height="4" rx="1.6" fill="#fff"/><rect x="0.5" y="5.5" width="4" height="4" rx="1.6" fill="#fff"/><rect x="0.5" y="10.5" width="4" height="4" rx="1.6" fill="#fff"/></svg>
<svg style="position:absolute;left:1177px;top:211.5px" width="8" height="12" viewBox="0 0 8 12"><path d="M4 0.5 L7.5 4.5 H5 V12 H3 V4.5 H0.5 Z" fill="#fff"/></svg>
<div style="position:absolute;left:1879px;top:216.5px;width:2px;height:2px;background:#3aa0ff;border-radius:1px"></div>
<div style="position:absolute;left:74.5px;top:238.8px;width:10.5px;height:24.4px;background:#fff;border-radius:4px 0 0 4px"></div>
<div style="position:absolute;left:85px;top:238.8px;width:24px;height:24.4px;border-radius:0 4px 4px 0;background:linear-gradient(to bottom, rgba(255,255,255,0) -1px, rgba(255,255,255,0.059) 5px, rgba(255,255,255,0.076) 7px, rgba(255,255,255,0.095) 10.5px, rgba(255,255,255,0.04) 12px, rgba(255,255,255,0) 23px), #282525;"></div>
<svg style="position:absolute;left:92.2px;top:248.8px" width="10" height="6" viewBox="0 0 10 6"><path d="M0 0 H10 L5 6 Z" fill="#fff"/></svg>
<div style="position:absolute;left:153.3px;top:238.8px;width:3.4px;height:24.4px;background:#fff;border-radius:4px 0 0 4px"></div>
<div style="position:absolute;left:156.7px;top:238.8px;width:24px;height:24.4px;border-radius:0 4px 4px 0;background:linear-gradient(to bottom, rgba(255,255,255,0) -1px, rgba(255,255,255,0.059) 5px, rgba(255,255,255,0.076) 7px, rgba(255,255,255,0.095) 10.5px, rgba(255,255,255,0.04) 12px, rgba(255,255,255,0) 23px), #282525;"></div>
<svg style="position:absolute;left:164px;top:248.8px" width="10" height="6" viewBox="0 0 10 6"><path d="M0 0 H10 L5 6 Z" fill="#fff"/></svg>
<div style="position:absolute;left:427.6px;top:238.8px;width:18.4px;height:24.4px;background:#fff;border-radius:4px 0 0 4px"></div>
<div style="position:absolute;left:446px;top:238.8px;width:25px;height:24.4px;border-radius:0 4px 4px 0;background:linear-gradient(to bottom, rgba(255,255,255,0) -1px, rgba(255,255,255,0.059) 5px, rgba(255,255,255,0.076) 7px, rgba(255,255,255,0.095) 10.5px, rgba(255,255,255,0.04) 12px, rgba(255,255,255,0) 23px), #282525;"></div>
<svg style="position:absolute;left:454.2px;top:241.8px" width="9" height="18" viewBox="0 0 9 18"><path d="M0 6 L4.5 0 L9 6 Z" fill="#fff"/><path d="M0 12 L4.5 18 L9 12 Z" fill="#fff"/></svg>
<div style="position:absolute;left:516px;top:238.8px;width:51.2px;height:24.4px;background:#fff;border-radius:4px"></div>
<div style="position:absolute;left:571.8px;top:238.8px;width:24px;height:24.4px;border-radius:4px;background:linear-gradient(to bottom, rgba(255,255,255,0) -1px, rgba(255,255,255,0.059) 5px, rgba(255,255,255,0.076) 7px, rgba(255,255,255,0.095) 10.5px, rgba(255,255,255,0.04) 12px, rgba(255,255,255,0) 23px), #282525;"></div>
<svg style="position:absolute;left:576.8px;top:246.8px" width="14" height="14" viewBox="0 0 14 14"><path d="M0 0 H13.6 L8.3 6.2 V13.6 L5.3 11.6 V6.2 Z" fill="#fff"/></svg>
<div style="position:absolute;left:642px;top:238.8px;width:141px;height:24.4px;background:#fff;border-radius:4px"></div>
<div style="position:absolute;left:787.4px;top:238.8px;width:24.6px;height:24.4px;border-radius:4px;background:linear-gradient(to bottom, rgba(255,255,255,0) -1px, rgba(255,255,255,0.059) 5px, rgba(255,255,255,0.076) 7px, rgba(255,255,255,0.095) 10.5px, rgba(255,255,255,0.04) 12px, rgba(255,255,255,0) 23px), #282525;"></div>
<svg style="position:absolute;left:792.5px;top:246.8px" width="14" height="14" viewBox="0 0 14 14"><path d="M0 0 H13.6 L8.3 6.2 V13.6 L5.3 11.6 V6.2 Z" fill="#fff"/></svg>
<div style="position:absolute;left:857.8px;top:238.8px;width:17.4px;height:24.4px;background:#fff;border-radius:4px"></div>
<div style="position:absolute;left:879.6px;top:238.8px;width:24.4px;height:24.4px;border-radius:4px;background:linear-gradient(to bottom, rgba(255,255,255,0) -1px, rgba(255,255,255,0.059) 5px, rgba(255,255,255,0.076) 7px, rgba(255,255,255,0.095) 10.5px, rgba(255,255,255,0.04) 12px, rgba(255,255,255,0) 23px), #282525;"></div>
<svg style="position:absolute;left:884.5999999999999px;top:246.8px" width="14" height="14" viewBox="0 0 14 14"><path d="M0 0 H13.6 L8.3 6.2 V13.6 L5.3 11.6 V6.2 Z" fill="#fff"/></svg>
<div style="position:absolute;left:999.7px;top:238.8px;width:12.6px;height:24.4px;background:#fff;border-radius:4px;overflow:hidden"><div style="font-size:12px;color:#666;margin:6px 0 0 8px;-webkit-text-stroke:0">f</div></div>
<div style="position:absolute;left:1016.8px;top:238.8px;width:24.1px;height:24.4px;border-radius:4px;background:linear-gradient(to bottom, rgba(255,255,255,0) -1px, rgba(255,255,255,0.059) 5px, rgba(255,255,255,0.076) 7px, rgba(255,255,255,0.095) 10.5px, rgba(255,255,255,0.04) 12px, rgba(255,255,255,0) 23px), #282525;"></div>
<svg style="position:absolute;left:1021.5999999999999px;top:246.8px" width="14" height="14" viewBox="0 0 14 14"><path d="M0 0 H13.6 L8.3 6.2 V13.6 L5.3 11.6 V6.2 Z" fill="#fff"/></svg>
<div style="position:absolute;left:1044.8px;top:238.8px;width:25px;height:24.4px;border-radius:4px;background:linear-gradient(to bottom, rgba(255,255,255,0) -1px, rgba(255,255,255,0.059) 5px, rgba(255,255,255,0.076) 7px, rgba(255,255,255,0.095) 10.5px, rgba(255,255,255,0.04) 12px, rgba(255,255,255,0) 23px), #282525;"></div>
<svg style="position:absolute;left:1049.8px;top:243.8px" width="16" height="14" viewBox="0 0 16 14"><path d="M1 2 H12 L7.8 7 V12.5 H5.2 V7 Z" fill="#fff"/><path d="M4 1 L15 12" stroke="#2b2929" stroke-width="2.4"/><path d="M4.5 0.5 L14 10" stroke="#fff" stroke-width="1.3"/></svg>
<div style="position:absolute;left:1086.7px;top:238.8px;width:10.5px;height:24.4px;background:#fff;border-radius:4px 0 0 4px;overflow:hidden"><div style="font-size:12px;color:#555;margin:6px 0 0 7px;-webkit-text-stroke:0">7</div></div>
<div style="position:absolute;left:1097.2px;top:238.8px;width:24.8px;height:24.4px;border-radius:0 4px 4px 0;background:linear-gradient(to bottom, rgba(255,255,255,0) -1px, rgba(255,255,255,0.059) 5px, rgba(255,255,255,0.076) 7px, rgba(255,255,255,0.095) 10.5px, rgba(255,255,255,0.04) 12px, rgba(255,255,255,0) 23px), #282525;"></div>
<svg style="position:absolute;left:1105.3000000000002px;top:241.8px" width="9" height="18" viewBox="0 0 9 18"><path d="M0 6 L4.5 0 L9 6 Z" fill="#fff"/><path d="M0 12 L4.5 18 L9 12 Z" fill="#fff"/></svg>
<div style="position:absolute;left:1124.7px;top:238.8px;width:25px;height:24.4px;border-radius:4px;background:linear-gradient(to bottom, rgba(255,255,255,0) -1px, rgba(255,255,255,0.059) 5px, rgba(255,255,255,0.076) 7px, rgba(255,255,255,0.095) 10.5px, rgba(255,255,255,0.04) 12px, rgba(255,255,255,0) 23px), #282525;"></div>
<svg style="position:absolute;left:1129.7px;top:243.8px" width="16" height="14" viewBox="0 0 16 14"><path d="M1 2 H12 L7.8 7 V12.5 H5.2 V7 Z" fill="#fff"/><path d="M4 1 L15 12" stroke="#2b2929" stroke-width="2.4"/><path d="M4.5 0.5 L14 10" stroke="#fff" stroke-width="1.3"/></svg>
<div style="position:absolute;left:1167px;top:238.8px;width:7px;height:24.4px;background:#fff;border-radius:4px 0 0 4px"></div>
<div style="position:absolute;left:1174px;top:238.8px;width:25px;height:24.4px;border-radius:0 4px 4px 0;background:linear-gradient(to bottom, rgba(255,255,255,0) -1px, rgba(255,255,255,0.059) 5px, rgba(255,255,255,0.076) 7px, rgba(255,255,255,0.095) 10.5px, rgba(255,255,255,0.04) 12px, rgba(255,255,255,0) 23px), #282525;"></div>
<svg style="position:absolute;left:1182.2px;top:241.8px" width="9" height="18" viewBox="0 0 9 18"><path d="M0 6 L4.5 0 L9 6 Z" fill="#fff"/><path d="M0 12 L4.5 18 L9 12 Z" fill="#fff"/></svg>
<div style="position:absolute;left:1244px;top:238.8px;width:36.7px;height:24.4px;background:#fff;border-radius:4px"></div>
<div style="position:absolute;left:1286px;top:238.8px;width:24px;height:24.4px;border-radius:4px;background:linear-gradient(to bottom, rgba(255,255,255,0) -1px, rgba(255,255,255,0.059) 5px, rgba(255,255,255,0.076) 7px, rgba(255,255,255,0.095) 10.5px, rgba(255,255,255,0.04) 12px, rgba(255,255,255,0) 23px), #282525;"></div>
<svg style="position:absolute;left:1290.8px;top:246.8px" width="14" height="14" viewBox="0 0 14 14"><path d="M0 0 H13.6 L8.3 6.2 V13.6 L5.3 11.6 V6.2 Z" fill="#fff"/></svg>
<div style="position:absolute;left:1436.6px;top:238.8px;width:39.7px;height:24.4px;background:#fff;border-radius:4px 0 0 4px"></div>
<div style="position:absolute;left:1476.3px;top:238.8px;width:23.7px;height:24.4px;border-radius:0 4px 4px 0;background:linear-gradient(to bottom, rgba(255,255,255,0) -1px, rgba(255,255,255,0.059) 5px, rgba(255,255,255,0.076) 7px, rgba(255,255,255,0.095) 10.5px, rgba(255,255,255,0.04) 12px, rgba(255,255,255,0) 23px), #282525;"></div>
<svg style="position:absolute;left:1483.2px;top:248.8px" width="10" height="6" viewBox="0 0 10 6"><path d="M0 0 H10 L5 6 Z" fill="#fff"/></svg>
<div style="position:absolute;left:1574.7px;top:238.8px;width:31.3px;height:24.4px;background:#fff;border-radius:4px 0 0 4px"></div>
<div style="position:absolute;left:1606.0px;top:238.8px;width:49px;height:24.4px;border-radius:0 4px 4px 0;background:linear-gradient(to bottom, rgba(255,255,255,0) -1px, rgba(255,255,255,0.059) 5px, rgba(255,255,255,0.076) 7px, rgba(255,255,255,0.095) 10.5px, rgba(255,255,255,0.04) 12px, rgba(255,255,255,0) 23px), #282525;"></div>
<svg style="position:absolute;left:1611.5px;top:244.3px" width="15" height="15" viewBox="0 0 15 15"><rect x="1" y="2.5" width="13" height="11.5" fill="none" stroke="#fff" stroke-width="1.3"/><rect x="1" y="2.5" width="13" height="2.6" fill="#fff"/><rect x="3.5" y="0.3" width="1.5" height="3" fill="#fff"/><rect x="10" y="0.3" width="1.5" height="3" fill="#fff"/><rect x="8.6" y="9.6" width="3.4" height="3" fill="#fff"/></svg>
<svg style="position:absolute;left:1635.6px;top:243.8px" width="16" height="16" viewBox="0 0 16 16"><circle cx="8" cy="8" r="7" fill="none" stroke="#fff" stroke-width="1.4"/><path d="M8 3.8 V8.5 H11.8" stroke="#fff" stroke-width="1.3" fill="none"/></svg>
<div style="position:absolute;left:1659.6px;top:238.8px;width:23.8px;height:24.4px;border-radius:4px;background:linear-gradient(to bottom, rgba(255,255,255,0) -1px, rgba(255,255,255,0.059) 5px, rgba(255,255,255,0.076) 7px, rgba(255,255,255,0.095) 10.5px, rgba(255,255,255,0.04) 12px, rgba(255,255,255,0) 23px), #282525;"></div>
<svg style="position:absolute;left:1664.3999999999999px;top:246.8px" width="14" height="14" viewBox="0 0 14 14"><path d="M0 0 H13.6 L8.3 6.2 V13.6 L5.3 11.6 V6.2 Z" fill="#fff"/></svg>
<div style="position:absolute;left:1730px;top:238.8px;width:65.2px;height:24.4px;background:#fff;border-radius:4px 0 0 4px"></div>
<div style="position:absolute;left:1795.2px;top:238.8px;width:49.4px;height:24.4px;border-radius:0 4px 4px 0;background:linear-gradient(to bottom, rgba(255,255,255,0) -1px, rgba(255,255,255,0.059) 5px, rgba(255,255,255,0.076) 7px, rgba(255,255,255,0.095) 10.5px, rgba(255,255,255,0.04) 12px, rgba(255,255,255,0) 23px), #282525;"></div>
<svg style="position:absolute;left:1800.7px;top:244.3px" width="15" height="15" viewBox="0 0 15 15"><rect x="1" y="2.5" width="13" height="11.5" fill="none" stroke="#fff" stroke-width="1.3"/><rect x="1" y="2.5" width="13" height="2.6" fill="#fff"/><rect x="3.5" y="0.3" width="1.5" height="3" fill="#fff"/><rect x="10" y="0.3" width="1.5" height="3" fill="#fff"/><rect x="8.6" y="9.6" width="3.4" height="3" fill="#fff"/></svg>
<svg style="position:absolute;left:1824.8px;top:243.8px" width="16" height="16" viewBox="0 0 16 16"><circle cx="8" cy="8" r="7" fill="none" stroke="#fff" stroke-width="1.4"/><path d="M8 3.8 V8.5 H11.8" stroke="#fff" stroke-width="1.3" fill="none"/></svg>
<div style="position:absolute;left:1849px;top:238.8px;width:23.8px;height:24.4px;border-radius:4px;background:linear-gradient(to bottom, rgba(255,255,255,0) -1px, rgba(255,255,255,0.059) 5px, rgba(255,255,255,0.076) 7px, rgba(255,255,255,0.095) 10.5px, rgba(255,255,255,0.04) 12px, rgba(255,255,255,0) 23px), #282525;"></div>
<svg style="position:absolute;left:1853.8px;top:246.8px" width="14" height="14" viewBox="0 0 14 14"><path d="M0 0 H13.6 L8.3 6.2 V13.6 L5.3 11.6 V6.2 Z" fill="#fff"/></svg>
<div style="position:absolute;left:10px;top:269.8px;width:1870px;height:530.9px;overflow:hidden">
<div style="position:absolute;left:0;top:0.00px;width:1870px;height:30.20px;background:linear-gradient(to bottom,#1a7ad8 0,#1771d1 40%,#0a66cc 100%)"></div>
<div style="position:absolute;left:0;top:30.20px;width:1870px;height:31.40px;background:#575757"></div>
<div style="position:absolute;left:0;top:61.60px;width:1870px;height:30.80px;background:#4b4b4b"></div>
<div style="position:absolute;left:0;top:92.40px;width:1870px;height:30.80px;background:#575757"></div>
<div style="position:absolute;left:0;top:123.20px;width:1870px;height:30.80px;background:#4b4b4b"></div>
<div style="position:absolute;left:0;top:154.00px;width:1870px;height:30.80px;background:#575757"></div>
<div style="position:absolute;left:0;top:184.80px;width:1870px;height:30.80px;background:#4b4b4b"></div>
<div style="position:absolute;left:0;top:215.60px;width:1870px;height:30.80px;background:#575757"></div>
<div style="position:absolute;left:0;top:246.40px;width:1870px;height:30.80px;background:#4b4b4b"></div>
<div style="position:absolute;left:0;top:277.20px;width:1870px;height:30.80px;background:#575757"></div>
<div style="position:absolute;left:0;top:308.00px;width:1870px;height:30.80px;background:#4b4b4b"></div>
<div style="position:absolute;left:0;top:338.80px;width:1870px;height:30.80px;background:#575757"></div>
<div style="position:absolute;left:0;top:369.60px;width:1870px;height:30.80px;background:#4b4b4b"></div>
<div style="position:absolute;left:0;top:400.40px;width:1870px;height:30.80px;background:#575757"></div>
<div style="position:absolute;left:0;top:431.20px;width:1870px;height:30.80px;background:#4b4b4b"></div>
<div style="position:absolute;left:0;top:462.00px;width:1870px;height:30.80px;background:#575757"></div>
<div style="position:absolute;left:0;top:492.80px;width:1870px;height:30.80px;background:#4b4b4b"></div>
<div style="position:absolute;left:0;top:523.60px;width:1870px;height:30.80px;background:#575757"></div>
<div style="position:absolute;left:55.60px;top:0;width:1.2px;height:530.9px;background:#2f2f2f"></div>
<div style="position:absolute;left:134.60px;top:0;width:1.2px;height:530.9px;background:#2f2f2f"></div>
<div style="position:absolute;left:206.70px;top:0;width:1.2px;height:530.9px;background:#2f2f2f"></div>
<div style="position:absolute;left:256.80px;top:0;width:1.2px;height:530.9px;background:#2f2f2f"></div>
<div style="position:absolute;left:306.90px;top:0;width:1.2px;height:530.9px;background:#2f2f2f"></div>
<div style="position:absolute;left:358.80px;top:0;width:1.2px;height:530.9px;background:#2f2f2f"></div>
<div style="position:absolute;left:408.90px;top:0;width:1.2px;height:530.9px;background:#2f2f2f"></div>
<div style="position:absolute;left:496.90px;top:0;width:1.2px;height:530.9px;background:#2f2f2f"></div>
<div style="position:absolute;left:622.90px;top:0;width:1.2px;height:530.9px;background:#2f2f2f"></div>
<div style="position:absolute;left:838.90px;top:0;width:1.2px;height:530.9px;background:#2f2f2f"></div>
<div style="position:absolute;left:931.00px;top:0;width:1.2px;height:530.9px;background:#2f2f2f"></div>
<div style="position:absolute;left:980.80px;top:0;width:1.2px;height:530.9px;background:#2f2f2f"></div>
<div style="position:absolute;left:1067.90px;top:0;width:1.2px;height:530.9px;background:#2f2f2f"></div>
<div style="position:absolute;left:1147.90px;top:0;width:1.2px;height:530.9px;background:#2f2f2f"></div>
<div style="position:absolute;left:1224.80px;top:0;width:1.2px;height:530.9px;background:#2f2f2f"></div>
<div style="position:absolute;left:1336.90px;top:0;width:1.2px;height:530.9px;background:#2f2f2f"></div>
<div style="position:absolute;left:1417.70px;top:0;width:1.2px;height:530.9px;background:#2f2f2f"></div>
<div style="position:absolute;left:1525.90px;top:0;width:1.2px;height:530.9px;background:#2f2f2f"></div>
<div style="position:absolute;left:1556.00px;top:0;width:1.2px;height:530.9px;background:#2f2f2f"></div>
<div style="position:absolute;left:1711.00px;top:0;width:1.2px;height:530.9px;background:#2f2f2f"></div>
<svg style="position:absolute;left:21.00px;top:4.20px" width="16" height="16" viewBox="0 0 16 16"><path d="M0 3.6 L3.6 0 L8 4.4 L12.4 0 L16 3.6 L11.6 8 L16 12.4 L12.4 16 L8 11.6 L3.6 16 L0 12.4 L4.4 8 Z" fill="#a30000"/><path d="M0 3.6 L3.6 0 L8 4.4 L12.4 0 L16 3.6 L11.6 8 L8 6.5 L4.4 8 Z" fill="#c42020" opacity=".5"/></svg>
<div style="position:absolute;left:64.50px;top:9.64px;font-size:12px;line-height:12px;color:#f2f2f2;white-space:nowrap;letter-spacing:-0.28px">In Progress</div>
<svg style="position:absolute;left:163.30px;top:5.20px" width="16" height="15" viewBox="0 0 16 15"><path d="M1.5 1 V14" stroke="#8a8a8a" stroke-width="1.2"/><path d="M2 2 Q5 0.5 8 2 Q11.5 3.5 15 2 V10 Q11.5 11.5 8 10 Q5 8.5 2 10 Z" fill="none" stroke="#8a8a8a" stroke-width="1"/><path d="M8 2.5 V10" stroke="#777" stroke-width=".6"/></svg>
<svg style="position:absolute;left:225.30px;top:4.60px" width="16" height="16" viewBox="0 0 16 16"><path d="M0.3 4 Q0.3 0.6 3 0.6 H12.4 Q15 0.6 15 4 V12.6 Q15 15.2 12.4 15.2 H3 Q0.3 15.2 0.3 12.6 Z" fill="#d6d6d6"/><path d="M0.8 3.6 Q0.8 0.6 3.2 0.6 H12.2 Q14.6 0.6 14.6 3.6 Z" fill="#3a3a3a"/><rect x="3.4" y="6.2" width="11.4" height="5.4" fill="#c2c2c2"/><rect x="0.3" y="3.6" width="2.8" height="11" fill="#e6e6e6"/><path d="M3.1 3.6 V15" stroke="#6a6a6a" stroke-width=".7"/></svg>
<svg style="position:absolute;left:275.70px;top:4.60px" width="14" height="16.5" viewBox="0 0 14 16.5"><path d="M0.4 2.3 L8.5 0 V15.5 H0.4 Z" fill="#dadada"/><path d="M8.5 1.9 H10.9 V10.5 L13 12.3 V15.5 H8.5 Z" fill="#d2d2d2"/><path d="M8.5 0.2 V14.6" stroke="#3a3a3a" stroke-width=".8"/><path d="M10.9 2 V10.8" stroke="#444" stroke-width=".6"/><path d="M3 15 Q6 13.5 8.5 14.5" stroke="#aaa" stroke-width=".6" fill="none"/></svg>
<svg style="position:absolute;left:326.00px;top:4.40px" width="16.5" height="16.5" viewBox="0 0 16.5 16.5"><ellipse cx="8" cy="7" rx="8" ry="7" fill="#0f4aa6"/><path d="M8.5 12.5 Q11 15.5 14 16.5 Q12.8 14.5 12.8 11 Z" fill="#0f4aa6"/><text x="8" y="11" font-size="10.5" font-weight="bold" text-anchor="middle" fill="#fff" font-family="Liberation Sans" style="-webkit-text-stroke:0">?</text></svg>
<svg style="position:absolute;left:377.80px;top:4.00px" width="15" height="16.5" viewBox="0 0 15 16.5"><path d="M4.9 0.6 H11.3 L13.9 3.2 V13.9 H4.9 Z" fill="#fff" stroke="#111" stroke-width="1.1"/><path d="M0.6 2.6 H6.9 L9.7 5.4 V15.5 H0.6 Z" fill="#fff" stroke="#111" stroke-width="1.1"/><path d="M6.9 2.6 V5.4 H9.7" fill="none" stroke="#111" stroke-width=".8"/><path d="M11.3 0.6 V3.2 H13.9" fill="none" stroke="#111" stroke-width=".8"/><rect x="2.2" y="7.3" width="5.8" height="5.5" fill="#9a9a9a"/></svg>
<div style="position:absolute;left:417.60px;top:9.64px;font-size:12px;line-height:12px;color:#f2f2f2;white-space:nowrap;letter-spacing:-0.3px">186923</div>
<div style="position:absolute;left:505.40px;top:9.64px;font-size:12px;line-height:12px;color:#f2f2f2;white-space:nowrap;">Maya Media Produ...</div>
<div style="position:absolute;left:631.60px;top:9.64px;font-size:12px;line-height:12px;color:#f2f2f2;white-space:nowrap;letter-spacing:-0.25px">Friends 7</div>
<div style="position:absolute;left:847.50px;top:9.64px;font-size:12px;line-height:12px;color:#f2f2f2;white-space:nowrap;letter-spacing:-0.3px">00:22:00</div>
<svg style="position:absolute;left:948.00px;top:4.40px" width="16.5" height="16.5" viewBox="0 0 16.5 16.5"><ellipse cx="8" cy="7" rx="8" ry="7" fill="#0f4aa6"/><path d="M8.5 12.5 Q11 15.5 14 16.5 Q12.8 14.5 12.8 11 Z" fill="#0f4aa6"/><rect x="6.9" y="5.3" width="2.5" height="5.8" fill="#fff"/><rect x="6.9" y="2.2" width="2.5" height="2.1" fill="#fff"/></svg>
<div style="position:absolute;left:989.50px;top:9.64px;font-size:12px;line-height:12px;color:#f2f2f2;white-space:nowrap;letter-spacing:-0.24px">Friends</div>
<div style="position:absolute;left:1076.20px;top:9.64px;font-size:12px;line-height:12px;color:#f2f2f2;white-space:nowrap;">7</div>
<div style="position:absolute;left:1156.70px;top:9.64px;font-size:12px;line-height:12px;color:#f2f2f2;white-space:nowrap;letter-spacing:-0.3px">1</div>
<div style="position:absolute;left:1233.50px;top:9.64px;font-size:12px;line-height:12px;color:#f2f2f2;white-space:nowrap;letter-spacing:-0.27px">English</div>
<div style="position:absolute;left:1345.30px;top:9.64px;font-size:12px;line-height:12px;color:#f2f2f2;white-space:nowrap;letter-spacing:-0.34px">Spanish</div>
<div style="position:absolute;left:1426.60px;top:9.64px;font-size:12px;line-height:12px;color:#f2f2f2;white-space:nowrap;">With script</div>
<svg style="position:absolute;left:1529.80px;top:0.40px" width="24" height="24" viewBox="0 0 24 24"><g transform="translate(12 12) rotate(45)"><ellipse cx="0" cy="0" rx="4.4" ry="7.2" fill="#8dc63f"/><path d="M0 -6 V-11.3 M0 6 V11.3" stroke="#8dc63f" stroke-width="1.9" stroke-linecap="round"/><path d="M-5.6 -1.5 H-3 M3 1.5 H5.6" stroke="#8dc63f" stroke-width="1.6"/><path d="M-1 -0.8 L1 0.8" stroke="#6a9a30" stroke-width=".8"/></g></svg>
<svg style="position:absolute;left:1564.00px;top:10.30px" width="77" height="12" viewBox="0 0 77 12"><path d="M0 10.5 H10.2 L14.9 0.3 M14.4 10.5 H24.3 L29.3 0.3 M29.3 10.5 H49.8 M52.1 10.5 H63 M65.1 10.5 H75.7" stroke="#f2f2f2" stroke-width="1.15" fill="none"/><rect x="63.3" y="3.3" width="1.3" height="1.3" fill="#f2f2f2"/><rect x="63.3" y="7.3" width="1.3" height="1.3" fill="#f2f2f2"/></svg>
<svg style="position:absolute;left:1718.80px;top:10.30px" width="77" height="12" viewBox="0 0 77 12"><path d="M0 10.5 H10.2 L14.9 0.3 M14.4 10.5 H24.3 L29.3 0.3 M29.3 10.5 H49.8 M52.1 10.5 H63 M65.1 10.5 H75.7" stroke="#f2f2f2" stroke-width="1.15" fill="none"/><rect x="63.3" y="3.3" width="1.3" height="1.3" fill="#f2f2f2"/><rect x="63.3" y="7.3" width="1.3" height="1.3" fill="#f2f2f2"/></svg>
<svg style="position:absolute;left:21.00px;top:35.00px" width="16" height="16" viewBox="0 0 16 16"><path d="M0 3.6 L3.6 0 L8 4.4 L12.4 0 L16 3.6 L11.6 8 L16 12.4 L12.4 16 L8 11.6 L3.6 16 L0 12.4 L4.4 8 Z" fill="#a30000"/><path d="M0 3.6 L3.6 0 L8 4.4 L12.4 0 L16 3.6 L11.6 8 L8 6.5 L4.4 8 Z" fill="#c42020" opacity=".5"/></svg>
<div style="position:absolute;left:64.50px;top:40.44px;font-size:12px;line-height:12px;color:#f2f2f2;white-space:nowrap;letter-spacing:-0.28px">In Progress</div>
<svg style="position:absolute;left:163.30px;top:36.00px" width="16" height="15" viewBox="0 0 16 15"><path d="M1.5 1 V14" stroke="#8a8a8a" stroke-width="1.2"/><path d="M2 2 Q5 0.5 8 2 Q11.5 3.5 15 2 V10 Q11.5 11.5 8 10 Q5 8.5 2 10 Z" fill="none" stroke="#8a8a8a" stroke-width="1"/><path d="M8 2.5 V10" stroke="#777" stroke-width=".6"/></svg>
<svg style="position:absolute;left:225.30px;top:35.40px" width="16" height="16" viewBox="0 0 16 16"><path d="M0.3 4 Q0.3 0.6 3 0.6 H12.4 Q15 0.6 15 4 V12.6 Q15 15.2 12.4 15.2 H3 Q0.3 15.2 0.3 12.6 Z" fill="#d6d6d6"/><path d="M0.8 3.6 Q0.8 0.6 3.2 0.6 H12.2 Q14.6 0.6 14.6 3.6 Z" fill="#3a3a3a"/><rect x="3.4" y="6.2" width="11.4" height="5.4" fill="#c2c2c2"/><rect x="0.3" y="3.6" width="2.8" height="11" fill="#e6e6e6"/><path d="M3.1 3.6 V15" stroke="#6a6a6a" stroke-width=".7"/></svg>
<svg style="position:absolute;left:275.70px;top:35.40px" width="14" height="16.5" viewBox="0 0 14 16.5"><path d="M0.4 2.3 L8.5 0 V15.5 H0.4 Z" fill="#dadada"/><path d="M8.5 1.9 H10.9 V10.5 L13 12.3 V15.5 H8.5 Z" fill="#d2d2d2"/><path d="M8.5 0.2 V14.6" stroke="#3a3a3a" stroke-width=".8"/><path d="M10.9 2 V10.8" stroke="#444" stroke-width=".6"/><path d="M3 15 Q6 13.5 8.5 14.5" stroke="#aaa" stroke-width=".6" fill="none"/></svg>
<svg style="position:absolute;left:326.00px;top:35.20px" width="16.5" height="16.5" viewBox="0 0 16.5 16.5"><ellipse cx="8" cy="7" rx="8" ry="7" fill="#0f4aa6"/><path d="M8.5 12.5 Q11 15.5 14 16.5 Q12.8 14.5 12.8 11 Z" fill="#0f4aa6"/><text x="8" y="11" font-size="10.5" font-weight="bold" text-anchor="middle" fill="#fff" font-family="Liberation Sans" style="-webkit-text-stroke:0">?</text></svg>
<svg style="position:absolute;left:377.80px;top:34.80px" width="15" height="16.5" viewBox="0 0 15 16.5"><path d="M4.9 0.6 H11.3 L13.9 3.2 V13.9 H4.9 Z" fill="#fff" stroke="#111" stroke-width="1.1"/><path d="M0.6 2.6 H6.9 L9.7 5.4 V15.5 H0.6 Z" fill="#fff" stroke="#111" stroke-width="1.1"/><path d="M6.9 2.6 V5.4 H9.7" fill="none" stroke="#111" stroke-width=".8"/><path d="M11.3 0.6 V3.2 H13.9" fill="none" stroke="#111" stroke-width=".8"/><rect x="2.2" y="7.3" width="5.8" height="5.5" fill="#9a9a9a"/></svg>
<div style="position:absolute;left:417.60px;top:40.44px;font-size:12px;line-height:12px;color:#f2f2f2;white-space:nowrap;letter-spacing:-0.3px">186924</div>
<div style="position:absolute;left:505.40px;top:40.44px;font-size:12px;line-height:12px;color:#f2f2f2;white-space:nowrap;">Maya Media Produ...</div>
<div style="position:absolute;left:631.60px;top:40.44px;font-size:12px;line-height:12px;color:#f2f2f2;white-space:nowrap;letter-spacing:-0.25px">Friends 7</div>
<div style="position:absolute;left:847.50px;top:40.44px;font-size:12px;line-height:12px;color:#f2f2f2;white-space:nowrap;letter-spacing:-0.3px">00:22:00</div>
<svg style="position:absolute;left:948.00px;top:35.20px" width="16.5" height="16.5" viewBox="0 0 16.5 16.5"><ellipse cx="8" cy="7" rx="8" ry="7" fill="#0f4aa6"/><path d="M8.5 12.5 Q11 15.5 14 16.5 Q12.8 14.5 12.8 11 Z" fill="#0f4aa6"/><rect x="6.9" y="5.3" width="2.5" height="5.8" fill="#fff"/><rect x="6.9" y="2.2" width="2.5" height="2.1" fill="#fff"/></svg>
<div style="position:absolute;left:989.50px;top:40.44px;font-size:12px;line-height:12px;color:#f2f2f2;white-space:nowrap;letter-spacing:-0.24px">Friends</div>
<div style="position:absolute;left:1076.20px;top:40.44px;font-size:12px;line-height:12px;color:#f2f2f2;white-space:nowrap;">7</div>
<div style="position:absolute;left:1156.70px;top:40.44px;font-size:12px;line-height:12px;color:#f2f2f2;white-space:nowrap;letter-spacing:-0.3px">2</div>
<div style="position:absolute;left:1233.50px;top:40.44px;font-size:12px;line-height:12px;color:#f2f2f2;white-space:nowrap;letter-spacing:-0.27px">English</div>
<div style="position:absolute;left:1345.30px;top:40.44px;font-size:12px;line-height:12px;color:#f2f2f2;white-space:nowrap;letter-spacing:-0.34px">Spanish</div>
<div style="position:absolute;left:1426.60px;top:40.44px;font-size:12px;line-height:12px;color:#f2f2f2;white-space:nowrap;">With script</div>
<svg style="position:absolute;left:1529.80px;top:31.20px" width="24" height="24" viewBox="0 0 24 24"><g transform="translate(12 12) rotate(45)"><ellipse cx="0" cy="0" rx="4.4" ry="7.2" fill="#8dc63f"/><path d="M0 -6 V-11.3 M0 6 V11.3" stroke="#8dc63f" stroke-width="1.9" stroke-linecap="round"/><path d="M-5.6 -1.5 H-3 M3 1.5 H5.6" stroke="#8dc63f" stroke-width="1.6"/><path d="M-1 -0.8 L1 0.8" stroke="#6a9a30" stroke-width=".8"/></g></svg>
<svg style="position:absolute;left:1564.00px;top:41.10px" width="77" height="12" viewBox="0 0 77 12"><path d="M0 10.5 H10.2 L14.9 0.3 M14.4 10.5 H24.3 L29.3 0.3 M29.3 10.5 H49.8 M52.1 10.5 H63 M65.1 10.5 H75.7" stroke="#f2f2f2" stroke-width="1.15" fill="none"/><rect x="63.3" y="3.3" width="1.3" height="1.3" fill="#f2f2f2"/><rect x="63.3" y="7.3" width="1.3" height="1.3" fill="#f2f2f2"/></svg>
<svg style="position:absolute;left:1718.80px;top:41.10px" width="77" height="12" viewBox="0 0 77 12"><path d="M0 10.5 H10.2 L14.9 0.3 M14.4 10.5 H24.3 L29.3 0.3 M29.3 10.5 H49.8 M52.1 10.5 H63 M65.1 10.5 H75.7" stroke="#f2f2f2" stroke-width="1.15" fill="none"/><rect x="63.3" y="3.3" width="1.3" height="1.3" fill="#f2f2f2"/><rect x="63.3" y="7.3" width="1.3" height="1.3" fill="#f2f2f2"/></svg>
<svg style="position:absolute;left:21.00px;top:65.80px" width="16" height="16" viewBox="0 0 16 16"><path d="M0 3.6 L3.6 0 L8 4.4 L12.4 0 L16 3.6 L11.6 8 L16 12.4 L12.4 16 L8 11.6 L3.6 16 L0 12.4 L4.4 8 Z" fill="#a30000"/><path d="M0 3.6 L3.6 0 L8 4.4 L12.4 0 L16 3.6 L11.6 8 L8 6.5 L4.4 8 Z" fill="#c42020" opacity=".5"/></svg>
<div style="position:absolute;left:64.50px;top:71.24px;font-size:12px;line-height:12px;color:#f2f2f2;white-space:nowrap;letter-spacing:-0.28px">In Progress</div>
<svg style="position:absolute;left:163.30px;top:66.80px" width="16" height="15" viewBox="0 0 16 15"><path d="M1.5 1 V14" stroke="#8a8a8a" stroke-width="1.2"/><path d="M2 2 Q5 0.5 8 2 Q11.5 3.5 15 2 V10 Q11.5 11.5 8 10 Q5 8.5 2 10 Z" fill="none" stroke="#8a8a8a" stroke-width="1"/><path d="M8 2.5 V10" stroke="#777" stroke-width=".6"/></svg>
<svg style="position:absolute;left:225.30px;top:66.20px" width="16" height="16" viewBox="0 0 16 16"><path d="M0.3 4 Q0.3 0.6 3 0.6 H12.4 Q15 0.6 15 4 V12.6 Q15 15.2 12.4 15.2 H3 Q0.3 15.2 0.3 12.6 Z" fill="#d6d6d6"/><path d="M0.8 3.6 Q0.8 0.6 3.2 0.6 H12.2 Q14.6 0.6 14.6 3.6 Z" fill="#3a3a3a"/><rect x="3.4" y="6.2" width="11.4" height="5.4" fill="#c2c2c2"/><rect x="0.3" y="3.6" width="2.8" height="11" fill="#e6e6e6"/><path d="M3.1 3.6 V15" stroke="#6a6a6a" stroke-width=".7"/></svg>
<svg style="position:absolute;left:275.70px;top:66.20px" width="14" height="16.5" viewBox="0 0 14 16.5"><path d="M0.4 2.3 L8.5 0 V15.5 H0.4 Z" fill="#dadada"/><path d="M8.5 1.9 H10.9 V10.5 L13 12.3 V15.5 H8.5 Z" fill="#d2d2d2"/><path d="M8.5 0.2 V14.6" stroke="#3a3a3a" stroke-width=".8"/><path d="M10.9 2 V10.8" stroke="#444" stroke-width=".6"/><path d="M3 15 Q6 13.5 8.5 14.5" stroke="#aaa" stroke-width=".6" fill="none"/></svg>
<svg style="position:absolute;left:326.00px;top:66.00px" width="16.5" height="16.5" viewBox="0 0 16.5 16.5"><ellipse cx="8" cy="7" rx="8" ry="7" fill="#0f4aa6"/><path d="M8.5 12.5 Q11 15.5 14 16.5 Q12.8 14.5 12.8 11 Z" fill="#0f4aa6"/><text x="8" y="11" font-size="10.5" font-weight="bold" text-anchor="middle" fill="#fff" font-family="Liberation Sans" style="-webkit-text-stroke:0">?</text></svg>
<svg style="position:absolute;left:377.80px;top:65.60px" width="15" height="16.5" viewBox="0 0 15 16.5"><path d="M4.9 0.6 H11.3 L13.9 3.2 V13.9 H4.9 Z" fill="#fff" stroke="#111" stroke-width="1.1"/><path d="M0.6 2.6 H6.9 L9.7 5.4 V15.5 H0.6 Z" fill="#fff" stroke="#111" stroke-width="1.1"/><path d="M6.9 2.6 V5.4 H9.7" fill="none" stroke="#111" stroke-width=".8"/><path d="M11.3 0.6 V3.2 H13.9" fill="none" stroke="#111" stroke-width=".8"/><rect x="2.2" y="7.3" width="5.8" height="5.5" fill="#9a9a9a"/></svg>
<div style="position:absolute;left:417.60px;top:71.24px;font-size:12px;line-height:12px;color:#f2f2f2;white-space:nowrap;letter-spacing:-0.3px">186925</div>
<div style="position:absolute;left:505.40px;top:71.24px;font-size:12px;line-height:12px;color:#f2f2f2;white-space:nowrap;">Maya Media Produ...</div>
<div style="position:absolute;left:631.60px;top:71.24px;font-size:12px;line-height:12px;color:#f2f2f2;white-space:nowrap;letter-spacing:-0.25px">Friends 7</div>
<div style="position:absolute;left:847.50px;top:71.24px;font-size:12px;line-height:12px;color:#f2f2f2;white-space:nowrap;letter-spacing:-0.3px">00:22:00</div>
<svg style="position:absolute;left:948.00px;top:66.00px" width="16.5" height="16.5" viewBox="0 0 16.5 16.5"><ellipse cx="8" cy="7" rx="8" ry="7" fill="#0f4aa6"/><path d="M8.5 12.5 Q11 15.5 14 16.5 Q12.8 14.5 12.8 11 Z" fill="#0f4aa6"/><rect x="6.9" y="5.3" width="2.5" height="5.8" fill="#fff"/><rect x="6.9" y="2.2" width="2.5" height="2.1" fill="#fff"/></svg>
<div style="position:absolute;left:989.50px;top:71.24px;font-size:12px;line-height:12px;color:#f2f2f2;white-space:nowrap;letter-spacing:-0.24px">Friends</div>
<div style="position:absolute;left:1076.20px;top:71.24px;font-size:12px;line-height:12px;color:#f2f2f2;white-space:nowrap;">7</div>
<div style="position:absolute;left:1156.70px;top:71.24px;font-size:12px;line-height:12px;color:#f2f2f2;white-space:nowrap;letter-spacing:-0.3px">3</div>
<div style="position:absolute;left:1233.50px;top:71.24px;font-size:12px;line-height:12px;color:#f2f2f2;white-space:nowrap;letter-spacing:-0.27px">English</div>
<div style="position:absolute;left:1345.30px;top:71.24px;font-size:12px;line-height:12px;color:#f2f2f2;white-space:nowrap;letter-spacing:-0.34px">Spanish</div>
<div style="position:absolute;left:1426.60px;top:71.24px;font-size:12px;line-height:12px;color:#f2f2f2;white-space:nowrap;">With script</div>
<svg style="position:absolute;left:1529.80px;top:62.00px" width="24" height="24" viewBox="0 0 24 24"><g transform="translate(12 12) rotate(45)"><ellipse cx="0" cy="0" rx="4.4" ry="7.2" fill="#8dc63f"/><path d="M0 -6 V-11.3 M0 6 V11.3" stroke="#8dc63f" stroke-width="1.9" stroke-linecap="round"/><path d="M-5.6 -1.5 H-3 M3 1.5 H5.6" stroke="#8dc63f" stroke-width="1.6"/><path d="M-1 -0.8 L1 0.8" stroke="#6a9a30" stroke-width=".8"/></g></svg>
<svg style="position:absolute;left:1564.00px;top:71.90px" width="77" height="12" viewBox="0 0 77 12"><path d="M0 10.5 H10.2 L14.9 0.3 M14.4 10.5 H24.3 L29.3 0.3 M29.3 10.5 H49.8 M52.1 10.5 H63 M65.1 10.5 H75.7" stroke="#f2f2f2" stroke-width="1.15" fill="none"/><rect x="63.3" y="3.3" width="1.3" height="1.3" fill="#f2f2f2"/><rect x="63.3" y="7.3" width="1.3" height="1.3" fill="#f2f2f2"/></svg>
<svg style="position:absolute;left:1718.80px;top:71.90px" width="77" height="12" viewBox="0 0 77 12"><path d="M0 10.5 H10.2 L14.9 0.3 M14.4 10.5 H24.3 L29.3 0.3 M29.3 10.5 H49.8 M52.1 10.5 H63 M65.1 10.5 H75.7" stroke="#f2f2f2" stroke-width="1.15" fill="none"/><rect x="63.3" y="3.3" width="1.3" height="1.3" fill="#f2f2f2"/><rect x="63.3" y="7.3" width="1.3" height="1.3" fill="#f2f2f2"/></svg>
<svg style="position:absolute;left:21.00px;top:96.60px" width="16" height="16" viewBox="0 0 16 16"><path d="M0 3.6 L3.6 0 L8 4.4 L12.4 0 L16 3.6 L11.6 8 L16 12.4 L12.4 16 L8 11.6 L3.6 16 L0 12.4 L4.4 8 Z" fill="#a30000"/><path d="M0 3.6 L3.6 0 L8 4.4 L12.4 0 L16 3.6 L11.6 8 L8 6.5 L4.4 8 Z" fill="#c42020" opacity=".5"/></svg>
<div style="position:absolute;left:64.50px;top:102.04px;font-size:12px;line-height:12px;color:#f2f2f2;white-space:nowrap;letter-spacing:-0.28px">In Progress</div>
<svg style="position:absolute;left:163.30px;top:97.60px" width="16" height="15" viewBox="0 0 16 15"><path d="M1.5 1 V14" stroke="#8a8a8a" stroke-width="1.2"/><path d="M2 2 Q5 0.5 8 2 Q11.5 3.5 15 2 V10 Q11.5 11.5 8 10 Q5 8.5 2 10 Z" fill="none" stroke="#8a8a8a" stroke-width="1"/><path d="M8 2.5 V10" stroke="#777" stroke-width=".6"/></svg>
<svg style="position:absolute;left:225.30px;top:97.00px" width="16" height="16" viewBox="0 0 16 16"><path d="M0.3 4 Q0.3 0.6 3 0.6 H12.4 Q15 0.6 15 4 V12.6 Q15 15.2 12.4 15.2 H3 Q0.3 15.2 0.3 12.6 Z" fill="#d6d6d6"/><path d="M0.8 3.6 Q0.8 0.6 3.2 0.6 H12.2 Q14.6 0.6 14.6 3.6 Z" fill="#3a3a3a"/><rect x="3.4" y="6.2" width="11.4" height="5.4" fill="#c2c2c2"/><rect x="0.3" y="3.6" width="2.8" height="11" fill="#e6e6e6"/><path d="M3.1 3.6 V15" stroke="#6a6a6a" stroke-width=".7"/></svg>
<svg style="position:absolute;left:275.70px;top:97.00px" width="14" height="16.5" viewBox="0 0 14 16.5"><path d="M0.4 2.3 L8.5 0 V15.5 H0.4 Z" fill="#dadada"/><path d="M8.5 1.9 H10.9 V10.5 L13 12.3 V15.5 H8.5 Z" fill="#d2d2d2"/><path d="M8.5 0.2 V14.6" stroke="#3a3a3a" stroke-width=".8"/><path d="M10.9 2 V10.8" stroke="#444" stroke-width=".6"/><path d="M3 15 Q6 13.5 8.5 14.5" stroke="#aaa" stroke-width=".6" fill="none"/></svg>
<svg style="position:absolute;left:326.00px;top:96.80px" width="16.5" height="16.5" viewBox="0 0 16.5 16.5"><ellipse cx="8" cy="7" rx="8" ry="7" fill="#0f4aa6"/><path d="M8.5 12.5 Q11 15.5 14 16.5 Q12.8 14.5 12.8 11 Z" fill="#0f4aa6"/><text x="8" y="11" font-size="10.5" font-weight="bold" text-anchor="middle" fill="#fff" font-family="Liberation Sans" style="-webkit-text-stroke:0">?</text></svg>
<svg style="position:absolute;left:377.80px;top:96.40px" width="15" height="16.5" viewBox="0 0 15 16.5"><path d="M4.9 0.6 H11.3 L13.9 3.2 V13.9 H4.9 Z" fill="#fff" stroke="#111" stroke-width="1.1"/><path d="M0.6 2.6 H6.9 L9.7 5.4 V15.5 H0.6 Z" fill="#fff" stroke="#111" stroke-width="1.1"/><path d="M6.9 2.6 V5.4 H9.7" fill="none" stroke="#111" stroke-width=".8"/><path d="M11.3 0.6 V3.2 H13.9" fill="none" stroke="#111" stroke-width=".8"/><rect x="2.2" y="7.3" width="5.8" height="5.5" fill="#9a9a9a"/></svg>
<div style="position:absolute;left:417.60px;top:102.04px;font-size:12px;line-height:12px;color:#f2f2f2;white-space:nowrap;letter-spacing:-0.3px">186926</div>
<div style="position:absolute;left:505.40px;top:102.04px;font-size:12px;line-height:12px;color:#f2f2f2;white-space:nowrap;">Maya Media Produ...</div>
<div style="position:absolute;left:631.60px;top:102.04px;font-size:12px;line-height:12px;color:#f2f2f2;white-space:nowrap;letter-spacing:-0.25px">Friends 7</div>
<div style="position:absolute;left:847.50px;top:102.04px;font-size:12px;line-height:12px;color:#f2f2f2;white-space:nowrap;letter-spacing:-0.3px">00:22:00</div>
<svg style="position:absolute;left:948.00px;top:96.80px" width="16.5" height="16.5" viewBox="0 0 16.5 16.5"><ellipse cx="8" cy="7" rx="8" ry="7" fill="#0f4aa6"/><path d="M8.5 12.5 Q11 15.5 14 16.5 Q12.8 14.5 12.8 11 Z" fill="#0f4aa6"/><rect x="6.9" y="5.3" width="2.5" height="5.8" fill="#fff"/><rect x="6.9" y="2.2" width="2.5" height="2.1" fill="#fff"/></svg>
<div style="position:absolute;left:989.50px;top:102.04px;font-size:12px;line-height:12px;color:#f2f2f2;white-space:nowrap;letter-spacing:-0.24px">Friends</div>
<div style="position:absolute;left:1076.20px;top:102.04px;font-size:12px;line-height:12px;color:#f2f2f2;white-space:nowrap;">7</div>
<div style="position:absolute;left:1156.70px;top:102.04px;font-size:12px;line-height:12px;color:#f2f2f2;white-space:nowrap;letter-spacing:-0.3px">4</div>
<div style="position:absolute;left:1233.50px;top:102.04px;font-size:12px;line-height:12px;color:#f2f2f2;white-space:nowrap;letter-spacing:-0.27px">English</div>
<div style="position:absolute;left:1345.30px;top:102.04px;font-size:12px;line-height:12px;color:#f2f2f2;white-space:nowrap;letter-spacing:-0.34px">Spanish</div>
<div style="position:absolute;left:1426.60px;top:102.04px;font-size:12px;line-height:12px;color:#f2f2f2;white-space:nowrap;">With script</div>
<svg style="position:absolute;left:1529.80px;top:92.80px" width="24" height="24" viewBox="0 0 24 24"><g transform="translate(12 12) rotate(45)"><ellipse cx="0" cy="0" rx="4.4" ry="7.2" fill="#8dc63f"/><path d="M0 -6 V-11.3 M0 6 V11.3" stroke="#8dc63f" stroke-width="1.9" stroke-linecap="round"/><path d="M-5.6 -1.5 H-3 M3 1.5 H5.6" stroke="#8dc63f" stroke-width="1.6"/><path d="M-1 -0.8 L1 0.8" stroke="#6a9a30" stroke-width=".8"/></g></svg>
<svg style="position:absolute;left:1564.00px;top:102.70px" width="77" height="12" viewBox="0 0 77 12"><path d="M0 10.5 H10.2 L14.9 0.3 M14.4 10.5 H24.3 L29.3 0.3 M29.3 10.5 H49.8 M52.1 10.5 H63 M65.1 10.5 H75.7" stroke="#f2f2f2" stroke-width="1.15" fill="none"/><rect x="63.3" y="3.3" width="1.3" height="1.3" fill="#f2f2f2"/><rect x="63.3" y="7.3" width="1.3" height="1.3" fill="#f2f2f2"/></svg>
<svg style="position:absolute;left:1718.80px;top:102.70px" width="77" height="12" viewBox="0 0 77 12"><path d="M0 10.5 H10.2 L14.9 0.3 M14.4 10.5 H24.3 L29.3 0.3 M29.3 10.5 H49.8 M52.1 10.5 H63 M65.1 10.5 H75.7" stroke="#f2f2f2" stroke-width="1.15" fill="none"/><rect x="63.3" y="3.3" width="1.3" height="1.3" fill="#f2f2f2"/><rect x="63.3" y="7.3" width="1.3" height="1.3" fill="#f2f2f2"/></svg>
<svg style="position:absolute;left:21.00px;top:127.40px" width="16" height="16" viewBox="0 0 16 16"><path d="M0 3.6 L3.6 0 L8 4.4 L12.4 0 L16 3.6 L11.6 8 L16 12.4 L12.4 16 L8 11.6 L3.6 16 L0 12.4 L4.4 8 Z" fill="#a30000"/><path d="M0 3.6 L3.6 0 L8 4.4 L12.4 0 L16 3.6 L11.6 8 L8 6.5 L4.4 8 Z" fill="#c42020" opacity=".5"/></svg>
<div style="position:absolute;left:64.50px;top:132.84px;font-size:12px;line-height:12px;color:#f2f2f2;white-space:nowrap;letter-spacing:-0.28px">In Progress</div>
<svg style="position:absolute;left:163.30px;top:128.40px" width="16" height="15" viewBox="0 0 16 15"><path d="M1.5 1 V14" stroke="#8a8a8a" stroke-width="1.2"/><path d="M2 2 Q5 0.5 8 2 Q11.5 3.5 15 2 V10 Q11.5 11.5 8 10 Q5 8.5 2 10 Z" fill="none" stroke="#8a8a8a" stroke-width="1"/><path d="M8 2.5 V10" stroke="#777" stroke-width=".6"/></svg>
<svg style="position:absolute;left:225.30px;top:127.80px" width="16" height="16" viewBox="0 0 16 16"><path d="M0.3 4 Q0.3 0.6 3 0.6 H12.4 Q15 0.6 15 4 V12.6 Q15 15.2 12.4 15.2 H3 Q0.3 15.2 0.3 12.6 Z" fill="#d6d6d6"/><path d="M0.8 3.6 Q0.8 0.6 3.2 0.6 H12.2 Q14.6 0.6 14.6 3.6 Z" fill="#3a3a3a"/><rect x="3.4" y="6.2" width="11.4" height="5.4" fill="#c2c2c2"/><rect x="0.3" y="3.6" width="2.8" height="11" fill="#e6e6e6"/><path d="M3.1 3.6 V15" stroke="#6a6a6a" stroke-width=".7"/></svg>
<svg style="position:absolute;left:275.70px;top:127.80px" width="14" height="16.5" viewBox="0 0 14 16.5"><path d="M0.4 2.3 L8.5 0 V15.5 H0.4 Z" fill="#dadada"/><path d="M8.5 1.9 H10.9 V10.5 L13 12.3 V15.5 H8.5 Z" fill="#d2d2d2"/><path d="M8.5 0.2 V14.6" stroke="#3a3a3a" stroke-width=".8"/><path d="M10.9 2 V10.8" stroke="#444" stroke-width=".6"/><path d="M3 15 Q6 13.5 8.5 14.5" stroke="#aaa" stroke-width=".6" fill="none"/></svg>
<svg style="position:absolute;left:326.00px;top:127.60px" width="16.5" height="16.5" viewBox="0 0 16.5 16.5"><ellipse cx="8" cy="7" rx="8" ry="7" fill="#0f4aa6"/><path d="M8.5 12.5 Q11 15.5 14 16.5 Q12.8 14.5 12.8 11 Z" fill="#0f4aa6"/><text x="8" y="11" font-size="10.5" font-weight="bold" text-anchor="middle" fill="#fff" font-family="Liberation Sans" style="-webkit-text-stroke:0">?</text></svg>
<svg style="position:absolute;left:377.80px;top:127.20px" width="15" height="16.5" viewBox="0 0 15 16.5"><path d="M4.9 0.6 H11.3 L13.9 3.2 V13.9 H4.9 Z" fill="#fff" stroke="#111" stroke-width="1.1"/><path d="M0.6 2.6 H6.9 L9.7 5.4 V15.5 H0.6 Z" fill="#fff" stroke="#111" stroke-width="1.1"/><path d="M6.9 2.6 V5.4 H9.7" fill="none" stroke="#111" stroke-width=".8"/><path d="M11.3 0.6 V3.2 H13.9" fill="none" stroke="#111" stroke-width=".8"/><rect x="2.2" y="7.3" width="5.8" height="5.5" fill="#9a9a9a"/></svg>
<div style="position:absolute;left:417.60px;top:132.84px;font-size:12px;line-height:12px;color:#f2f2f2;white-space:nowrap;letter-spacing:-0.3px">186927</div>
<div style="position:absolute;left:505.40px;top:132.84px;font-size:12px;line-height:12px;color:#f2f2f2;white-space:nowrap;">Maya Media Produ...</div>
<div style="position:absolute;left:631.60px;top:132.84px;font-size:12px;line-height:12px;color:#f2f2f2;white-space:nowrap;letter-spacing:-0.25px">Friends 7</div>
<div style="position:absolute;left:847.50px;top:132.84px;font-size:12px;line-height:12px;color:#f2f2f2;white-space:nowrap;letter-spacing:-0.3px">00:22:00</div>
<svg style="position:absolute;left:948.00px;top:127.60px" width="16.5" height="16.5" viewBox="0 0 16.5 16.5"><ellipse cx="8" cy="7" rx="8" ry="7" fill="#0f4aa6"/><path d="M8.5 12.5 Q11 15.5 14 16.5 Q12.8 14.5 12.8 11 Z" fill="#0f4aa6"/><rect x="6.9" y="5.3" width="2.5" height="5.8" fill="#fff"/><rect x="6.9" y="2.2" width="2.5" height="2.1" fill="#fff"/></svg>
<div style="position:absolute;left:989.50px;top:132.84px;font-size:12px;line-height:12px;color:#f2f2f2;white-space:nowrap;letter-spacing:-0.24px">Friends</div>
<div style="position:absolute;left:1076.20px;top:132.84px;font-size:12px;line-height:12px;color:#f2f2f2;white-space:nowrap;">7</div>
<div style="position:absolute;left:1156.70px;top:132.84px;font-size:12px;line-height:12px;color:#f2f2f2;white-space:nowrap;letter-spacing:-0.3px">5</div>
<div style="position:absolute;left:1233.50px;top:132.84px;font-size:12px;line-height:12px;color:#f2f2f2;white-space:nowrap;letter-spacing:-0.27px">English</div>
<div style="position:absolute;left:1345.30px;top:132.84px;font-size:12px;line-height:12px;color:#f2f2f2;white-space:nowrap;letter-spacing:-0.34px">Spanish</div>
<div style="position:absolute;left:1426.60px;top:132.84px;font-size:12px;line-height:12px;color:#f2f2f2;white-space:nowrap;">With script</div>
<svg style="position:absolute;left:1529.80px;top:123.60px" width="24" height="24" viewBox="0 0 24 24"><g transform="translate(12 12) rotate(45)"><ellipse cx="0" cy="0" rx="4.4" ry="7.2" fill="#8dc63f"/><path d="M0 -6 V-11.3 M0 6 V11.3" stroke="#8dc63f" stroke-width="1.9" stroke-linecap="round"/><path d="M-5.6 -1.5 H-3 M3 1.5 H5.6" stroke="#8dc63f" stroke-width="1.6"/><path d="M-1 -0.8 L1 0.8" stroke="#6a9a30" stroke-width=".8"/></g></svg>
<svg style="position:absolute;left:1564.00px;top:133.50px" width="77" height="12" viewBox="0 0 77 12"><path d="M0 10.5 H10.2 L14.9 0.3 M14.4 10.5 H24.3 L29.3 0.3 M29.3 10.5 H49.8 M52.1 10.5 H63 M65.1 10.5 H75.7" stroke="#f2f2f2" stroke-width="1.15" fill="none"/><rect x="63.3" y="3.3" width="1.3" height="1.3" fill="#f2f2f2"/><rect x="63.3" y="7.3" width="1.3" height="1.3" fill="#f2f2f2"/></svg>
<svg style="position:absolute;left:1718.80px;top:133.50px" width="77" height="12" viewBox="0 0 77 12"><path d="M0 10.5 H10.2 L14.9 0.3 M14.4 10.5 H24.3 L29.3 0.3 M29.3 10.5 H49.8 M52.1 10.5 H63 M65.1 10.5 H75.7" stroke="#f2f2f2" stroke-width="1.15" fill="none"/><rect x="63.3" y="3.3" width="1.3" height="1.3" fill="#f2f2f2"/><rect x="63.3" y="7.3" width="1.3" height="1.3" fill="#f2f2f2"/></svg>
<svg style="position:absolute;left:21.00px;top:158.20px" width="16" height="16" viewBox="0 0 16 16"><path d="M0 3.6 L3.6 0 L8 4.4 L12.4 0 L16 3.6 L11.6 8 L16 12.4 L12.4 16 L8 11.6 L3.6 16 L0 12.4 L4.4 8 Z" fill="#a30000"/><path d="M0 3.6 L3.6 0 L8 4.4 L12.4 0 L16 3.6 L11.6 8 L8 6.5 L4.4 8 Z" fill="#c42020" opacity=".5"/></svg>
<div style="position:absolute;left:64.50px;top:163.64px;font-size:12px;line-height:12px;color:#f2f2f2;white-space:nowrap;letter-spacing:-0.28px">In Progress</div>
<svg style="position:absolute;left:163.30px;top:159.20px" width="16" height="15" viewBox="0 0 16 15"><path d="M1.5 1 V14" stroke="#8a8a8a" stroke-width="1.2"/><path d="M2 2 Q5 0.5 8 2 Q11.5 3.5 15 2 V10 Q11.5 11.5 8 10 Q5 8.5 2 10 Z" fill="none" stroke="#8a8a8a" stroke-width="1"/><path d="M8 2.5 V10" stroke="#777" stroke-width=".6"/></svg>
<svg style="position:absolute;left:225.30px;top:158.60px" width="16" height="16" viewBox="0 0 16 16"><path d="M0.3 4 Q0.3 0.6 3 0.6 H12.4 Q15 0.6 15 4 V12.6 Q15 15.2 12.4 15.2 H3 Q0.3 15.2 0.3 12.6 Z" fill="#d6d6d6"/><path d="M0.8 3.6 Q0.8 0.6 3.2 0.6 H12.2 Q14.6 0.6 14.6 3.6 Z" fill="#3a3a3a"/><rect x="3.4" y="6.2" width="11.4" height="5.4" fill="#c2c2c2"/><rect x="0.3" y="3.6" width="2.8" height="11" fill="#e6e6e6"/><path d="M3.1 3.6 V15" stroke="#6a6a6a" stroke-width=".7"/></svg>
<svg style="position:absolute;left:275.70px;top:158.60px" width="14" height="16.5" viewBox="0 0 14 16.5"><path d="M0.4 2.3 L8.5 0 V15.5 H0.4 Z" fill="#dadada"/><path d="M8.5 1.9 H10.9 V10.5 L13 12.3 V15.5 H8.5 Z" fill="#d2d2d2"/><path d="M8.5 0.2 V14.6" stroke="#3a3a3a" stroke-width=".8"/><path d="M10.9 2 V10.8" stroke="#444" stroke-width=".6"/><path d="M3 15 Q6 13.5 8.5 14.5" stroke="#aaa" stroke-width=".6" fill="none"/></svg>
<svg style="position:absolute;left:326.00px;top:158.40px" width="16.5" height="16.5" viewBox="0 0 16.5 16.5"><ellipse cx="8" cy="7" rx="8" ry="7" fill="#0f4aa6"/><path d="M8.5 12.5 Q11 15.5 14 16.5 Q12.8 14.5 12.8 11 Z" fill="#0f4aa6"/><text x="8" y="11" font-size="10.5" font-weight="bold" text-anchor="middle" fill="#fff" font-family="Liberation Sans" style="-webkit-text-stroke:0">?</text></svg>
<svg style="position:absolute;left:377.80px;top:158.00px" width="15" height="16.5" viewBox="0 0 15 16.5"><path d="M4.9 0.6 H11.3 L13.9 3.2 V13.9 H4.9 Z" fill="#fff" stroke="#111" stroke-width="1.1"/><path d="M0.6 2.6 H6.9 L9.7 5.4 V15.5 H0.6 Z" fill="#fff" stroke="#111" stroke-width="1.1"/><path d="M6.9 2.6 V5.4 H9.7" fill="none" stroke="#111" stroke-width=".8"/><path d="M11.3 0.6 V3.2 H13.9" fill="none" stroke="#111" stroke-width=".8"/><rect x="2.2" y="7.3" width="5.8" height="5.5" fill="#9a9a9a"/></svg>
<div style="position:absolute;left:417.60px;top:163.64px;font-size:12px;line-height:12px;color:#f2f2f2;white-space:nowrap;letter-spacing:-0.3px">186928</div>
<div style="position:absolute;left:505.40px;top:163.64px;font-size:12px;line-height:12px;color:#f2f2f2;white-space:nowrap;">Maya Media Produ...</div>
<div style="position:absolute;left:631.60px;top:163.64px;font-size:12px;line-height:12px;color:#f2f2f2;white-space:nowrap;letter-spacing:-0.25px">Friends 7</div>
<div style="position:absolute;left:847.50px;top:163.64px;font-size:12px;line-height:12px;color:#f2f2f2;white-space:nowrap;letter-spacing:-0.3px">00:22:00</div>
<svg style="position:absolute;left:948.00px;top:158.40px" width="16.5" height="16.5" viewBox="0 0 16.5 16.5"><ellipse cx="8" cy="7" rx="8" ry="7" fill="#0f4aa6"/><path d="M8.5 12.5 Q11 15.5 14 16.5 Q12.8 14.5 12.8 11 Z" fill="#0f4aa6"/><rect x="6.9" y="5.3" width="2.5" height="5.8" fill="#fff"/><rect x="6.9" y="2.2" width="2.5" height="2.1" fill="#fff"/></svg>
<div style="position:absolute;left:989.50px;top:163.64px;font-size:12px;line-height:12px;color:#f2f2f2;white-space:nowrap;letter-spacing:-0.24px">Friends</div>
<div style="position:absolute;left:1076.20px;top:163.64px;font-size:12px;line-height:12px;color:#f2f2f2;white-space:nowrap;">7</div>
<div style="position:absolute;left:1156.70px;top:163.64px;font-size:12px;line-height:12px;color:#f2f2f2;white-space:nowrap;letter-spacing:-0.3px">6</div>
<div style="position:absolute;left:1233.50px;top:163.64px;font-size:12px;line-height:12px;color:#f2f2f2;white-space:nowrap;letter-spacing:-0.27px">English</div>
<div style="position:absolute;left:1345.30px;top:163.64px;font-size:12px;line-height:12px;color:#f2f2f2;white-space:nowrap;letter-spacing:-0.34px">Spanish</div>
<div style="position:absolute;left:1426.60px;top:163.64px;font-size:12px;line-height:12px;color:#f2f2f2;white-space:nowrap;">With script</div>
<svg style="position:absolute;left:1529.80px;top:154.40px" width="24" height="24" viewBox="0 0 24 24"><g transform="translate(12 12) rotate(45)"><ellipse cx="0" cy="0" rx="4.4" ry="7.2" fill="#8dc63f"/><path d="M0 -6 V-11.3 M0 6 V11.3" stroke="#8dc63f" stroke-width="1.9" stroke-linecap="round"/><path d="M-5.6 -1.5 H-3 M3 1.5 H5.6" stroke="#8dc63f" stroke-width="1.6"/><path d="M-1 -0.8 L1 0.8" stroke="#6a9a30" stroke-width=".8"/></g></svg>
<svg style="position:absolute;left:1564.00px;top:164.30px" width="77" height="12" viewBox="0 0 77 12"><path d="M0 10.5 H10.2 L14.9 0.3 M14.4 10.5 H24.3 L29.3 0.3 M29.3 10.5 H49.8 M52.1 10.5 H63 M65.1 10.5 H75.7" stroke="#f2f2f2" stroke-width="1.15" fill="none"/><rect x="63.3" y="3.3" width="1.3" height="1.3" fill="#f2f2f2"/><rect x="63.3" y="7.3" width="1.3" height="1.3" fill="#f2f2f2"/></svg>
<svg style="position:absolute;left:1718.80px;top:164.30px" width="77" height="12" viewBox="0 0 77 12"><path d="M0 10.5 H10.2 L14.9 0.3 M14.4 10.5 H24.3 L29.3 0.3 M29.3 10.5 H49.8 M52.1 10.5 H63 M65.1 10.5 H75.7" stroke="#f2f2f2" stroke-width="1.15" fill="none"/><rect x="63.3" y="3.3" width="1.3" height="1.3" fill="#f2f2f2"/><rect x="63.3" y="7.3" width="1.3" height="1.3" fill="#f2f2f2"/></svg>
<svg style="position:absolute;left:21.00px;top:189.00px" width="16" height="16" viewBox="0 0 16 16"><path d="M0 3.6 L3.6 0 L8 4.4 L12.4 0 L16 3.6 L11.6 8 L16 12.4 L12.4 16 L8 11.6 L3.6 16 L0 12.4 L4.4 8 Z" fill="#a30000"/><path d="M0 3.6 L3.6 0 L8 4.4 L12.4 0 L16 3.6 L11.6 8 L8 6.5 L4.4 8 Z" fill="#c42020" opacity=".5"/></svg>
<div style="position:absolute;left:64.50px;top:194.44px;font-size:12px;line-height:12px;color:#f2f2f2;white-space:nowrap;letter-spacing:-0.28px">In Progress</div>
<svg style="position:absolute;left:163.30px;top:190.00px" width="16" height="15" viewBox="0 0 16 15"><path d="M1.5 1 V14" stroke="#8a8a8a" stroke-width="1.2"/><path d="M2 2 Q5 0.5 8 2 Q11.5 3.5 15 2 V10 Q11.5 11.5 8 10 Q5 8.5 2 10 Z" fill="none" stroke="#8a8a8a" stroke-width="1"/><path d="M8 2.5 V10" stroke="#777" stroke-width=".6"/></svg>
<svg style="position:absolute;left:225.30px;top:189.40px" width="16" height="16" viewBox="0 0 16 16"><path d="M0.3 4 Q0.3 0.6 3 0.6 H12.4 Q15 0.6 15 4 V12.6 Q15 15.2 12.4 15.2 H3 Q0.3 15.2 0.3 12.6 Z" fill="#d6d6d6"/><path d="M0.8 3.6 Q0.8 0.6 3.2 0.6 H12.2 Q14.6 0.6 14.6 3.6 Z" fill="#3a3a3a"/><rect x="3.4" y="6.2" width="11.4" height="5.4" fill="#c2c2c2"/><rect x="0.3" y="3.6" width="2.8" height="11" fill="#e6e6e6"/><path d="M3.1 3.6 V15" stroke="#6a6a6a" stroke-width=".7"/></svg>
<svg style="position:absolute;left:275.70px;top:189.40px" width="14" height="16.5" viewBox="0 0 14 16.5"><path d="M0.4 2.3 L8.5 0 V15.5 H0.4 Z" fill="#dadada"/><path d="M8.5 1.9 H10.9 V10.5 L13 12.3 V15.5 H8.5 Z" fill="#d2d2d2"/><path d="M8.5 0.2 V14.6" stroke="#3a3a3a" stroke-width=".8"/><path d="M10.9 2 V10.8" stroke="#444" stroke-width=".6"/><path d="M3 15 Q6 13.5 8.5 14.5" stroke="#aaa" stroke-width=".6" fill="none"/></svg>
<svg style="position:absolute;left:326.00px;top:189.20px" width="16.5" height="16.5" viewBox="0 0 16.5 16.5"><ellipse cx="8" cy="7" rx="8" ry="7" fill="#0f4aa6"/><path d="M8.5 12.5 Q11 15.5 14 16.5 Q12.8 14.5 12.8 11 Z" fill="#0f4aa6"/><text x="8" y="11" font-size="10.5" font-weight="bold" text-anchor="middle" fill="#fff" font-family="Liberation Sans" style="-webkit-text-stroke:0">?</text></svg>
<svg style="position:absolute;left:377.80px;top:188.80px" width="15" height="16.5" viewBox="0 0 15 16.5"><path d="M4.9 0.6 H11.3 L13.9 3.2 V13.9 H4.9 Z" fill="#fff" stroke="#111" stroke-width="1.1"/><path d="M0.6 2.6 H6.9 L9.7 5.4 V15.5 H0.6 Z" fill="#fff" stroke="#111" stroke-width="1.1"/><path d="M6.9 2.6 V5.4 H9.7" fill="none" stroke="#111" stroke-width=".8"/><path d="M11.3 0.6 V3.2 H13.9" fill="none" stroke="#111" stroke-width=".8"/><rect x="2.2" y="7.3" width="5.8" height="5.5" fill="#9a9a9a"/></svg>
<div style="position:absolute;left:417.60px;top:194.44px;font-size:12px;line-height:12px;color:#f2f2f2;white-space:nowrap;letter-spacing:-0.3px">186929</div>
<div style="position:absolute;left:505.40px;top:194.44px;font-size:12px;line-height:12px;color:#f2f2f2;white-space:nowrap;">Maya Media Produ...</div>
<div style="position:absolute;left:631.60px;top:194.44px;font-size:12px;line-height:12px;color:#f2f2f2;white-space:nowrap;letter-spacing:-0.25px">Friends 7</div>
<div style="position:absolute;left:847.50px;top:194.44px;font-size:12px;line-height:12px;color:#f2f2f2;white-space:nowrap;letter-spacing:-0.3px">00:22:00</div>
<svg style="position:absolute;left:948.00px;top:189.20px" width="16.5" height="16.5" viewBox="0 0 16.5 16.5"><ellipse cx="8" cy="7" rx="8" ry="7" fill="#0f4aa6"/><path d="M8.5 12.5 Q11 15.5 14 16.5 Q12.8 14.5 12.8 11 Z" fill="#0f4aa6"/><rect x="6.9" y="5.3" width="2.5" height="5.8" fill="#fff"/><rect x="6.9" y="2.2" width="2.5" height="2.1" fill="#fff"/></svg>
<div style="position:absolute;left:989.50px;top:194.44px;font-size:12px;line-height:12px;color:#f2f2f2;white-space:nowrap;letter-spacing:-0.24px">Friends</div>
<div style="position:absolute;left:1076.20px;top:194.44px;font-size:12px;line-height:12px;color:#f2f2f2;white-space:nowrap;">7</div>
<div style="position:absolute;left:1156.70px;top:194.44px;font-size:12px;line-height:12px;color:#f2f2f2;white-space:nowrap;letter-spacing:-0.3px">7</div>
<div style="position:absolute;left:1233.50px;top:194.44px;font-size:12px;line-height:12px;color:#f2f2f2;white-space:nowrap;letter-spacing:-0.27px">English</div>
<div style="position:absolute;left:1345.30px;top:194.44px;font-size:12px;line-height:12px;color:#f2f2f2;white-space:nowrap;letter-spacing:-0.34px">Spanish</div>
<div style="position:absolute;left:1426.60px;top:194.44px;font-size:12px;line-height:12px;color:#f2f2f2;white-space:nowrap;">With script</div>
<svg style="position:absolute;left:1529.80px;top:185.20px" width="24" height="24" viewBox="0 0 24 24"><g transform="translate(12 12) rotate(45)"><ellipse cx="0" cy="0" rx="4.4" ry="7.2" fill="#8dc63f"/><path d="M0 -6 V-11.3 M0 6 V11.3" stroke="#8dc63f" stroke-width="1.9" stroke-linecap="round"/><path d="M-5.6 -1.5 H-3 M3 1.5 H5.6" stroke="#8dc63f" stroke-width="1.6"/><path d="M-1 -0.8 L1 0.8" stroke="#6a9a30" stroke-width=".8"/></g></svg>
<svg style="position:absolute;left:1564.00px;top:195.10px" width="77" height="12" viewBox="0 0 77 12"><path d="M0 10.5 H10.2 L14.9 0.3 M14.4 10.5 H24.3 L29.3 0.3 M29.3 10.5 H49.8 M52.1 10.5 H63 M65.1 10.5 H75.7" stroke="#f2f2f2" stroke-width="1.15" fill="none"/><rect x="63.3" y="3.3" width="1.3" height="1.3" fill="#f2f2f2"/><rect x="63.3" y="7.3" width="1.3" height="1.3" fill="#f2f2f2"/></svg>
<svg style="position:absolute;left:1718.80px;top:195.10px" width="77" height="12" viewBox="0 0 77 12"><path d="M0 10.5 H10.2 L14.9 0.3 M14.4 10.5 H24.3 L29.3 0.3 M29.3 10.5 H49.8 M52.1 10.5 H63 M65.1 10.5 H75.7" stroke="#f2f2f2" stroke-width="1.15" fill="none"/><rect x="63.3" y="3.3" width="1.3" height="1.3" fill="#f2f2f2"/><rect x="63.3" y="7.3" width="1.3" height="1.3" fill="#f2f2f2"/></svg>
<svg style="position:absolute;left:21.00px;top:219.80px" width="16" height="16" viewBox="0 0 16 16"><path d="M0 3.6 L3.6 0 L8 4.4 L12.4 0 L16 3.6 L11.6 8 L16 12.4 L12.4 16 L8 11.6 L3.6 16 L0 12.4 L4.4 8 Z" fill="#a30000"/><path d="M0 3.6 L3.6 0 L8 4.4 L12.4 0 L16 3.6 L11.6 8 L8 6.5 L4.4 8 Z" fill="#c42020" opacity=".5"/></svg>
<div style="position:absolute;left:64.50px;top:225.24px;font-size:12px;line-height:12px;color:#f2f2f2;white-space:nowrap;letter-spacing:-0.28px">In Progress</div>
<svg style="position:absolute;left:163.30px;top:220.80px" width="16" height="15" viewBox="0 0 16 15"><path d="M1.5 1 V14" stroke="#8a8a8a" stroke-width="1.2"/><path d="M2 2 Q5 0.5 8 2 Q11.5 3.5 15 2 V10 Q11.5 11.5 8 10 Q5 8.5 2 10 Z" fill="none" stroke="#8a8a8a" stroke-width="1"/><path d="M8 2.5 V10" stroke="#777" stroke-width=".6"/></svg>
<svg style="position:absolute;left:225.30px;top:220.20px" width="16" height="16" viewBox="0 0 16 16"><path d="M0.3 4 Q0.3 0.6 3 0.6 H12.4 Q15 0.6 15 4 V12.6 Q15 15.2 12.4 15.2 H3 Q0.3 15.2 0.3 12.6 Z" fill="#d6d6d6"/><path d="M0.8 3.6 Q0.8 0.6 3.2 0.6 H12.2 Q14.6 0.6 14.6 3.6 Z" fill="#3a3a3a"/><rect x="3.4" y="6.2" width="11.4" height="5.4" fill="#c2c2c2"/><rect x="0.3" y="3.6" width="2.8" height="11" fill="#e6e6e6"/><path d="M3.1 3.6 V15" stroke="#6a6a6a" stroke-width=".7"/></svg>
<svg style="position:absolute;left:275.70px;top:220.20px" width="14" height="16.5" viewBox="0 0 14 16.5"><path d="M0.4 2.3 L8.5 0 V15.5 H0.4 Z" fill="#dadada"/><path d="M8.5 1.9 H10.9 V10.5 L13 12.3 V15.5 H8.5 Z" fill="#d2d2d2"/><path d="M8.5 0.2 V14.6" stroke="#3a3a3a" stroke-width=".8"/><path d="M10.9 2 V10.8" stroke="#444" stroke-width=".6"/><path d="M3 15 Q6 13.5 8.5 14.5" stroke="#aaa" stroke-width=".6" fill="none"/></svg>
<svg style="position:absolute;left:326.00px;top:220.00px" width="16.5" height="16.5" viewBox="0 0 16.5 16.5"><ellipse cx="8" cy="7" rx="8" ry="7" fill="#0f4aa6"/><path d="M8.5 12.5 Q11 15.5 14 16.5 Q12.8 14.5 12.8 11 Z" fill="#0f4aa6"/><text x="8" y="11" font-size="10.5" font-weight="bold" text-anchor="middle" fill="#fff" font-family="Liberation Sans" style="-webkit-text-stroke:0">?</text></svg>
<svg style="position:absolute;left:377.80px;top:219.60px" width="15" height="16.5" viewBox="0 0 15 16.5"><path d="M4.9 0.6 H11.3 L13.9 3.2 V13.9 H4.9 Z" fill="#fff" stroke="#111" stroke-width="1.1"/><path d="M0.6 2.6 H6.9 L9.7 5.4 V15.5 H0.6 Z" fill="#fff" stroke="#111" stroke-width="1.1"/><path d="M6.9 2.6 V5.4 H9.7" fill="none" stroke="#111" stroke-width=".8"/><path d="M11.3 0.6 V3.2 H13.9" fill="none" stroke="#111" stroke-width=".8"/><rect x="2.2" y="7.3" width="5.8" height="5.5" fill="#9a9a9a"/></svg>
<div style="position:absolute;left:417.60px;top:225.24px;font-size:12px;line-height:12px;color:#f2f2f2;white-space:nowrap;letter-spacing:-0.3px">186930</div>
<div style="position:absolute;left:505.40px;top:225.24px;font-size:12px;line-height:12px;color:#f2f2f2;white-space:nowrap;">Maya Media Produ...</div>
<div style="position:absolute;left:631.60px;top:225.24px;font-size:12px;line-height:12px;color:#f2f2f2;white-space:nowrap;letter-spacing:-0.25px">Friends 7</div>
<div style="position:absolute;left:847.50px;top:225.24px;font-size:12px;line-height:12px;color:#f2f2f2;white-space:nowrap;letter-spacing:-0.3px">00:22:00</div>
<svg style="position:absolute;left:948.00px;top:220.00px" width="16.5" height="16.5" viewBox="0 0 16.5 16.5"><ellipse cx="8" cy="7" rx="8" ry="7" fill="#0f4aa6"/><path d="M8.5 12.5 Q11 15.5 14 16.5 Q12.8 14.5 12.8 11 Z" fill="#0f4aa6"/><rect x="6.9" y="5.3" width="2.5" height="5.8" fill="#fff"/><rect x="6.9" y="2.2" width="2.5" height="2.1" fill="#fff"/></svg>
<div style="position:absolute;left:989.50px;top:225.24px;font-size:12px;line-height:12px;color:#f2f2f2;white-space:nowrap;letter-spacing:-0.24px">Friends</div>
<div style="position:absolute;left:1076.20px;top:225.24px;font-size:12px;line-height:12px;color:#f2f2f2;white-space:nowrap;">7</div>
<div style="position:absolute;left:1156.70px;top:225.24px;font-size:12px;line-height:12px;color:#f2f2f2;white-space:nowrap;letter-spacing:-0.3px">8</div>
<div style="position:absolute;left:1233.50px;top:225.24px;font-size:12px;line-height:12px;color:#f2f2f2;white-space:nowrap;letter-spacing:-0.27px">English</div>
<div style="position:absolute;left:1345.30px;top:225.24px;font-size:12px;line-height:12px;color:#f2f2f2;white-space:nowrap;letter-spacing:-0.34px">Spanish</div>
<div style="position:absolute;left:1426.60px;top:225.24px;font-size:12px;line-height:12px;color:#f2f2f2;white-space:nowrap;">With script</div>
<svg style="position:absolute;left:1529.80px;top:216.00px" width="24" height="24" viewBox="0 0 24 24"><g transform="translate(12 12) rotate(45)"><ellipse cx="0" cy="0" rx="4.4" ry="7.2" fill="#8dc63f"/><path d="M0 -6 V-11.3 M0 6 V11.3" stroke="#8dc63f" stroke-width="1.9" stroke-linecap="round"/><path d="M-5.6 -1.5 H-3 M3 1.5 H5.6" stroke="#8dc63f" stroke-width="1.6"/><path d="M-1 -0.8 L1 0.8" stroke="#6a9a30" stroke-width=".8"/></g></svg>
<svg style="position:absolute;left:1564.00px;top:225.90px" width="77" height="12" viewBox="0 0 77 12"><path d="M0 10.5 H10.2 L14.9 0.3 M14.4 10.5 H24.3 L29.3 0.3 M29.3 10.5 H49.8 M52.1 10.5 H63 M65.1 10.5 H75.7" stroke="#f2f2f2" stroke-width="1.15" fill="none"/><rect x="63.3" y="3.3" width="1.3" height="1.3" fill="#f2f2f2"/><rect x="63.3" y="7.3" width="1.3" height="1.3" fill="#f2f2f2"/></svg>
<svg style="position:absolute;left:1718.80px;top:225.90px" width="77" height="12" viewBox="0 0 77 12"><path d="M0 10.5 H10.2 L14.9 0.3 M14.4 10.5 H24.3 L29.3 0.3 M29.3 10.5 H49.8 M52.1 10.5 H63 M65.1 10.5 H75.7" stroke="#f2f2f2" stroke-width="1.15" fill="none"/><rect x="63.3" y="3.3" width="1.3" height="1.3" fill="#f2f2f2"/><rect x="63.3" y="7.3" width="1.3" height="1.3" fill="#f2f2f2"/></svg>
<svg style="position:absolute;left:21.00px;top:250.60px" width="16" height="16" viewBox="0 0 16 16"><path d="M0 3.6 L3.6 0 L8 4.4 L12.4 0 L16 3.6 L11.6 8 L16 12.4 L12.4 16 L8 11.6 L3.6 16 L0 12.4 L4.4 8 Z" fill="#a30000"/><path d="M0 3.6 L3.6 0 L8 4.4 L12.4 0 L16 3.6 L11.6 8 L8 6.5 L4.4 8 Z" fill="#c42020" opacity=".5"/></svg>
<div style="position:absolute;left:64.50px;top:256.04px;font-size:12px;line-height:12px;color:#f2f2f2;white-space:nowrap;letter-spacing:-0.28px">In Progress</div>
<svg style="position:absolute;left:163.30px;top:251.60px" width="16" height="15" viewBox="0 0 16 15"><path d="M1.5 1 V14" stroke="#8a8a8a" stroke-width="1.2"/><path d="M2 2 Q5 0.5 8 2 Q11.5 3.5 15 2 V10 Q11.5 11.5 8 10 Q5 8.5 2 10 Z" fill="none" stroke="#8a8a8a" stroke-width="1"/><path d="M8 2.5 V10" stroke="#777" stroke-width=".6"/></svg>
<svg style="position:absolute;left:225.30px;top:251.00px" width="16" height="16" viewBox="0 0 16 16"><path d="M0.3 4 Q0.3 0.6 3 0.6 H12.4 Q15 0.6 15 4 V12.6 Q15 15.2 12.4 15.2 H3 Q0.3 15.2 0.3 12.6 Z" fill="#d6d6d6"/><path d="M0.8 3.6 Q0.8 0.6 3.2 0.6 H12.2 Q14.6 0.6 14.6 3.6 Z" fill="#3a3a3a"/><rect x="3.4" y="6.2" width="11.4" height="5.4" fill="#c2c2c2"/><rect x="0.3" y="3.6" width="2.8" height="11" fill="#e6e6e6"/><path d="M3.1 3.6 V15" stroke="#6a6a6a" stroke-width=".7"/></svg>
<svg style="position:absolute;left:275.70px;top:251.00px" width="14" height="16.5" viewBox="0 0 14 16.5"><path d="M0.4 2.3 L8.5 0 V15.5 H0.4 Z" fill="#dadada"/><path d="M8.5 1.9 H10.9 V10.5 L13 12.3 V15.5 H8.5 Z" fill="#d2d2d2"/><path d="M8.5 0.2 V14.6" stroke="#3a3a3a" stroke-width=".8"/><path d="M10.9 2 V10.8" stroke="#444" stroke-width=".6"/><path d="M3 15 Q6 13.5 8.5 14.5" stroke="#aaa" stroke-width=".6" fill="none"/></svg>
<svg style="position:absolute;left:326.00px;top:250.80px" width="16.5" height="16.5" viewBox="0 0 16.5 16.5"><ellipse cx="8" cy="7" rx="8" ry="7" fill="#0f4aa6"/><path d="M8.5 12.5 Q11 15.5 14 16.5 Q12.8 14.5 12.8 11 Z" fill="#0f4aa6"/><text x="8" y="11" font-size="10.5" font-weight="bold" text-anchor="middle" fill="#fff" font-family="Liberation Sans" style="-webkit-text-stroke:0">?</text></svg>
<svg style="position:absolute;left:377.80px;top:250.40px" width="15" height="16.5" viewBox="0 0 15 16.5"><path d="M4.9 0.6 H11.3 L13.9 3.2 V13.9 H4.9 Z" fill="#fff" stroke="#111" stroke-width="1.1"/><path d="M0.6 2.6 H6.9 L9.7 5.4 V15.5 H0.6 Z" fill="#fff" stroke="#111" stroke-width="1.1"/><path d="M6.9 2.6 V5.4 H9.7" fill="none" stroke="#111" stroke-width=".8"/><path d="M11.3 0.6 V3.2 H13.9" fill="none" stroke="#111" stroke-width=".8"/><rect x="2.2" y="7.3" width="5.8" height="5.5" fill="#9a9a9a"/></svg>
<div style="position:absolute;left:417.60px;top:256.04px;font-size:12px;line-height:12px;color:#f2f2f2;white-space:nowrap;letter-spacing:-0.3px">186931</div>
<div style="position:absolute;left:505.40px;top:256.04px;font-size:12px;line-height:12px;color:#f2f2f2;white-space:nowrap;">Maya Media Produ...</div>
<div style="position:absolute;left:631.60px;top:256.04px;font-size:12px;line-height:12px;color:#f2f2f2;white-space:nowrap;letter-spacing:-0.25px">Friends 7</div>
<div style="position:absolute;left:847.50px;top:256.04px;font-size:12px;line-height:12px;color:#f2f2f2;white-space:nowrap;letter-spacing:-0.3px">00:22:00</div>
<svg style="position:absolute;left:948.00px;top:250.80px" width="16.5" height="16.5" viewBox="0 0 16.5 16.5"><ellipse cx="8" cy="7" rx="8" ry="7" fill="#0f4aa6"/><path d="M8.5 12.5 Q11 15.5 14 16.5 Q12.8 14.5 12.8 11 Z" fill="#0f4aa6"/><rect x="6.9" y="5.3" width="2.5" height="5.8" fill="#fff"/><rect x="6.9" y="2.2" width="2.5" height="2.1" fill="#fff"/></svg>
<div style="position:absolute;left:989.50px;top:256.04px;font-size:12px;line-height:12px;color:#f2f2f2;white-space:nowrap;letter-spacing:-0.24px">Friends</div>
<div style="position:absolute;left:1076.20px;top:256.04px;font-size:12px;line-height:12px;color:#f2f2f2;white-space:nowrap;">7</div>
<div style="position:absolute;left:1156.70px;top:256.04px;font-size:12px;line-height:12px;color:#f2f2f2;white-space:nowrap;letter-spacing:-0.3px">9</div>
<div style="position:absolute;left:1233.50px;top:256.04px;font-size:12px;line-height:12px;color:#f2f2f2;white-space:nowrap;letter-spacing:-0.27px">English</div>
<div style="position:absolute;left:1345.30px;top:256.04px;font-size:12px;line-height:12px;color:#f2f2f2;white-space:nowrap;letter-spacing:-0.34px">Spanish</div>
<div style="position:absolute;left:1426.60px;top:256.04px;font-size:12px;line-height:12px;color:#f2f2f2;white-space:nowrap;">With script</div>
<svg style="position:absolute;left:1529.80px;top:246.80px" width="24" height="24" viewBox="0 0 24 24"><g transform="translate(12 12) rotate(45)"><ellipse cx="0" cy="0" rx="4.4" ry="7.2" fill="#8dc63f"/><path d="M0 -6 V-11.3 M0 6 V11.3" stroke="#8dc63f" stroke-width="1.9" stroke-linecap="round"/><path d="M-5.6 -1.5 H-3 M3 1.5 H5.6" stroke="#8dc63f" stroke-width="1.6"/><path d="M-1 -0.8 L1 0.8" stroke="#6a9a30" stroke-width=".8"/></g></svg>
<svg style="position:absolute;left:1564.00px;top:256.70px" width="77" height="12" viewBox="0 0 77 12"><path d="M0 10.5 H10.2 L14.9 0.3 M14.4 10.5 H24.3 L29.3 0.3 M29.3 10.5 H49.8 M52.1 10.5 H63 M65.1 10.5 H75.7" stroke="#f2f2f2" stroke-width="1.15" fill="none"/><rect x="63.3" y="3.3" width="1.3" height="1.3" fill="#f2f2f2"/><rect x="63.3" y="7.3" width="1.3" height="1.3" fill="#f2f2f2"/></svg>
<svg style="position:absolute;left:1718.80px;top:256.70px" width="77" height="12" viewBox="0 0 77 12"><path d="M0 10.5 H10.2 L14.9 0.3 M14.4 10.5 H24.3 L29.3 0.3 M29.3 10.5 H49.8 M52.1 10.5 H63 M65.1 10.5 H75.7" stroke="#f2f2f2" stroke-width="1.15" fill="none"/><rect x="63.3" y="3.3" width="1.3" height="1.3" fill="#f2f2f2"/><rect x="63.3" y="7.3" width="1.3" height="1.3" fill="#f2f2f2"/></svg>
<svg style="position:absolute;left:21.00px;top:281.40px" width="16" height="16" viewBox="0 0 16 16"><path d="M0 3.6 L3.6 0 L8 4.4 L12.4 0 L16 3.6 L11.6 8 L16 12.4 L12.4 16 L8 11.6 L3.6 16 L0 12.4 L4.4 8 Z" fill="#a30000"/><path d="M0 3.6 L3.6 0 L8 4.4 L12.4 0 L16 3.6 L11.6 8 L8 6.5 L4.4 8 Z" fill="#c42020" opacity=".5"/></svg>
<div style="position:absolute;left:64.50px;top:286.84px;font-size:12px;line-height:12px;color:#f2f2f2;white-space:nowrap;letter-spacing:-0.28px">In Progress</div>
<svg style="position:absolute;left:163.30px;top:282.40px" width="16" height="15" viewBox="0 0 16 15"><path d="M1.5 1 V14" stroke="#8a8a8a" stroke-width="1.2"/><path d="M2 2 Q5 0.5 8 2 Q11.5 3.5 15 2 V10 Q11.5 11.5 8 10 Q5 8.5 2 10 Z" fill="none" stroke="#8a8a8a" stroke-width="1"/><path d="M8 2.5 V10" stroke="#777" stroke-width=".6"/></svg>
<svg style="position:absolute;left:225.30px;top:281.80px" width="16" height="16" viewBox="0 0 16 16"><path d="M0.3 4 Q0.3 0.6 3 0.6 H12.4 Q15 0.6 15 4 V12.6 Q15 15.2 12.4 15.2 H3 Q0.3 15.2 0.3 12.6 Z" fill="#d6d6d6"/><path d="M0.8 3.6 Q0.8 0.6 3.2 0.6 H12.2 Q14.6 0.6 14.6 3.6 Z" fill="#3a3a3a"/><rect x="3.4" y="6.2" width="11.4" height="5.4" fill="#c2c2c2"/><rect x="0.3" y="3.6" width="2.8" height="11" fill="#e6e6e6"/><path d="M3.1 3.6 V15" stroke="#6a6a6a" stroke-width=".7"/></svg>
<svg style="position:absolute;left:275.70px;top:281.80px" width="14" height="16.5" viewBox="0 0 14 16.5"><path d="M0.4 2.3 L8.5 0 V15.5 H0.4 Z" fill="#dadada"/><path d="M8.5 1.9 H10.9 V10.5 L13 12.3 V15.5 H8.5 Z" fill="#d2d2d2"/><path d="M8.5 0.2 V14.6" stroke="#3a3a3a" stroke-width=".8"/><path d="M10.9 2 V10.8" stroke="#444" stroke-width=".6"/><path d="M3 15 Q6 13.5 8.5 14.5" stroke="#aaa" stroke-width=".6" fill="none"/></svg>
<svg style="position:absolute;left:326.00px;top:281.60px" width="16.5" height="16.5" viewBox="0 0 16.5 16.5"><ellipse cx="8" cy="7" rx="8" ry="7" fill="#0f4aa6"/><path d="M8.5 12.5 Q11 15.5 14 16.5 Q12.8 14.5 12.8 11 Z" fill="#0f4aa6"/><text x="8" y="11" font-size="10.5" font-weight="bold" text-anchor="middle" fill="#fff" font-family="Liberation Sans" style="-webkit-text-stroke:0">?</text></svg>
<svg style="position:absolute;left:377.80px;top:281.20px" width="15" height="16.5" viewBox="0 0 15 16.5"><path d="M4.9 0.6 H11.3 L13.9 3.2 V13.9 H4.9 Z" fill="#fff" stroke="#111" stroke-width="1.1"/><path d="M0.6 2.6 H6.9 L9.7 5.4 V15.5 H0.6 Z" fill="#fff" stroke="#111" stroke-width="1.1"/><path d="M6.9 2.6 V5.4 H9.7" fill="none" stroke="#111" stroke-width=".8"/><path d="M11.3 0.6 V3.2 H13.9" fill="none" stroke="#111" stroke-width=".8"/><rect x="2.2" y="7.3" width="5.8" height="5.5" fill="#9a9a9a"/></svg>
<div style="position:absolute;left:417.60px;top:286.84px;font-size:12px;line-height:12px;color:#f2f2f2;white-space:nowrap;letter-spacing:-0.3px">186932</div>
<div style="position:absolute;left:505.40px;top:286.84px;font-size:12px;line-height:12px;color:#f2f2f2;white-space:nowrap;">Maya Media Produ...</div>
<div style="position:absolute;left:631.60px;top:286.84px;font-size:12px;line-height:12px;color:#f2f2f2;white-space:nowrap;letter-spacing:-0.25px">Friends 7</div>
<div style="position:absolute;left:847.50px;top:286.84px;font-size:12px;line-height:12px;color:#f2f2f2;white-space:nowrap;letter-spacing:-0.3px">00:22:00</div>
<svg style="position:absolute;left:948.00px;top:281.60px" width="16.5" height="16.5" viewBox="0 0 16.5 16.5"><ellipse cx="8" cy="7" rx="8" ry="7" fill="#0f4aa6"/><path d="M8.5 12.5 Q11 15.5 14 16.5 Q12.8 14.5 12.8 11 Z" fill="#0f4aa6"/><rect x="6.9" y="5.3" width="2.5" height="5.8" fill="#fff"/><rect x="6.9" y="2.2" width="2.5" height="2.1" fill="#fff"/></svg>
<div style="position:absolute;left:989.50px;top:286.84px;font-size:12px;line-height:12px;color:#f2f2f2;white-space:nowrap;letter-spacing:-0.24px">Friends</div>
<div style="position:absolute;left:1076.20px;top:286.84px;font-size:12px;line-height:12px;color:#f2f2f2;white-space:nowrap;">7</div>
<div style="position:absolute;left:1156.70px;top:286.84px;font-size:12px;line-height:12px;color:#f2f2f2;white-space:nowrap;letter-spacing:-0.3px">10</div>
<div style="position:absolute;left:1233.50px;top:286.84px;font-size:12px;line-height:12px;color:#f2f2f2;white-space:nowrap;letter-spacing:-0.27px">English</div>
<div style="position:absolute;left:1345.30px;top:286.84px;font-size:12px;line-height:12px;color:#f2f2f2;white-space:nowrap;letter-spacing:-0.34px">Spanish</div>
<div style="position:absolute;left:1426.60px;top:286.84px;font-size:12px;line-height:12px;color:#f2f2f2;white-space:nowrap;">With script</div>
<svg style="position:absolute;left:1529.80px;top:277.60px" width="24" height="24" viewBox="0 0 24 24"><g transform="translate(12 12) rotate(45)"><ellipse cx="0" cy="0" rx="4.4" ry="7.2" fill="#8dc63f"/><path d="M0 -6 V-11.3 M0 6 V11.3" stroke="#8dc63f" stroke-width="1.9" stroke-linecap="round"/><path d="M-5.6 -1.5 H-3 M3 1.5 H5.6" stroke="#8dc63f" stroke-width="1.6"/><path d="M-1 -0.8 L1 0.8" stroke="#6a9a30" stroke-width=".8"/></g></svg>
<svg style="position:absolute;left:1564.00px;top:287.50px" width="77" height="12" viewBox="0 0 77 12"><path d="M0 10.5 H10.2 L14.9 0.3 M14.4 10.5 H24.3 L29.3 0.3 M29.3 10.5 H49.8 M52.1 10.5 H63 M65.1 10.5 H75.7" stroke="#f2f2f2" stroke-width="1.15" fill="none"/><rect x="63.3" y="3.3" width="1.3" height="1.3" fill="#f2f2f2"/><rect x="63.3" y="7.3" width="1.3" height="1.3" fill="#f2f2f2"/></svg>
<svg style="position:absolute;left:1718.80px;top:287.50px" width="77" height="12" viewBox="0 0 77 12"><path d="M0 10.5 H10.2 L14.9 0.3 M14.4 10.5 H24.3 L29.3 0.3 M29.3 10.5 H49.8 M52.1 10.5 H63 M65.1 10.5 H75.7" stroke="#f2f2f2" stroke-width="1.15" fill="none"/><rect x="63.3" y="3.3" width="1.3" height="1.3" fill="#f2f2f2"/><rect x="63.3" y="7.3" width="1.3" height="1.3" fill="#f2f2f2"/></svg>
<svg style="position:absolute;left:21.00px;top:312.20px" width="16" height="16" viewBox="0 0 16 16"><path d="M0 3.6 L3.6 0 L8 4.4 L12.4 0 L16 3.6 L11.6 8 L16 12.4 L12.4 16 L8 11.6 L3.6 16 L0 12.4 L4.4 8 Z" fill="#a30000"/><path d="M0 3.6 L3.6 0 L8 4.4 L12.4 0 L16 3.6 L11.6 8 L8 6.5 L4.4 8 Z" fill="#c42020" opacity=".5"/></svg>
<div style="position:absolute;left:64.50px;top:317.64px;font-size:12px;line-height:12px;color:#f2f2f2;white-space:nowrap;letter-spacing:-0.28px">In Progress</div>
<svg style="position:absolute;left:163.30px;top:313.20px" width="16" height="15" viewBox="0 0 16 15"><path d="M1.5 1 V14" stroke="#8a8a8a" stroke-width="1.2"/><path d="M2 2 Q5 0.5 8 2 Q11.5 3.5 15 2 V10 Q11.5 11.5 8 10 Q5 8.5 2 10 Z" fill="none" stroke="#8a8a8a" stroke-width="1"/><path d="M8 2.5 V10" stroke="#777" stroke-width=".6"/></svg>
<svg style="position:absolute;left:225.30px;top:312.60px" width="16" height="16" viewBox="0 0 16 16"><path d="M0.3 4 Q0.3 0.6 3 0.6 H12.4 Q15 0.6 15 4 V12.6 Q15 15.2 12.4 15.2 H3 Q0.3 15.2 0.3 12.6 Z" fill="#d6d6d6"/><path d="M0.8 3.6 Q0.8 0.6 3.2 0.6 H12.2 Q14.6 0.6 14.6 3.6 Z" fill="#3a3a3a"/><rect x="3.4" y="6.2" width="11.4" height="5.4" fill="#c2c2c2"/><rect x="0.3" y="3.6" width="2.8" height="11" fill="#e6e6e6"/><path d="M3.1 3.6 V15" stroke="#6a6a6a" stroke-width=".7"/></svg>
<svg style="position:absolute;left:275.70px;top:312.60px" width="14" height="16.5" viewBox="0 0 14 16.5"><path d="M0.4 2.3 L8.5 0 V15.5 H0.4 Z" fill="#dadada"/><path d="M8.5 1.9 H10.9 V10.5 L13 12.3 V15.5 H8.5 Z" fill="#d2d2d2"/><path d="M8.5 0.2 V14.6" stroke="#3a3a3a" stroke-width=".8"/><path d="M10.9 2 V10.8" stroke="#444" stroke-width=".6"/><path d="M3 15 Q6 13.5 8.5 14.5" stroke="#aaa" stroke-width=".6" fill="none"/></svg>
<svg style="position:absolute;left:326.00px;top:312.40px" width="16.5" height="16.5" viewBox="0 0 16.5 16.5"><ellipse cx="8" cy="7" rx="8" ry="7" fill="#0f4aa6"/><path d="M8.5 12.5 Q11 15.5 14 16.5 Q12.8 14.5 12.8 11 Z" fill="#0f4aa6"/><text x="8" y="11" font-size="10.5" font-weight="bold" text-anchor="middle" fill="#fff" font-family="Liberation Sans" style="-webkit-text-stroke:0">?</text></svg>
<svg style="position:absolute;left:377.80px;top:312.00px" width="15" height="16.5" viewBox="0 0 15 16.5"><path d="M4.9 0.6 H11.3 L13.9 3.2 V13.9 H4.9 Z" fill="#fff" stroke="#111" stroke-width="1.1"/><path d="M0.6 2.6 H6.9 L9.7 5.4 V15.5 H0.6 Z" fill="#fff" stroke="#111" stroke-width="1.1"/><path d="M6.9 2.6 V5.4 H9.7" fill="none" stroke="#111" stroke-width=".8"/><path d="M11.3 0.6 V3.2 H13.9" fill="none" stroke="#111" stroke-width=".8"/><rect x="2.2" y="7.3" width="5.8" height="5.5" fill="#9a9a9a"/></svg>
<div style="position:absolute;left:417.60px;top:317.64px;font-size:12px;line-height:12px;color:#f2f2f2;white-space:nowrap;letter-spacing:-0.3px">186933</div>
<div style="position:absolute;left:505.40px;top:317.64px;font-size:12px;line-height:12px;color:#f2f2f2;white-space:nowrap;">Maya Media Produ...</div>
<div style="position:absolute;left:631.60px;top:317.64px;font-size:12px;line-height:12px;color:#f2f2f2;white-space:nowrap;letter-spacing:-0.25px">Friends 7</div>
<div style="position:absolute;left:847.50px;top:317.64px;font-size:12px;line-height:12px;color:#f2f2f2;white-space:nowrap;letter-spacing:-0.3px">00:22:00</div>
<svg style="position:absolute;left:948.00px;top:312.40px" width="16.5" height="16.5" viewBox="0 0 16.5 16.5"><ellipse cx="8" cy="7" rx="8" ry="7" fill="#0f4aa6"/><path d="M8.5 12.5 Q11 15.5 14 16.5 Q12.8 14.5 12.8 11 Z" fill="#0f4aa6"/><rect x="6.9" y="5.3" width="2.5" height="5.8" fill="#fff"/><rect x="6.9" y="2.2" width="2.5" height="2.1" fill="#fff"/></svg>
<div style="position:absolute;left:989.50px;top:317.64px;font-size:12px;line-height:12px;color:#f2f2f2;white-space:nowrap;letter-spacing:-0.24px">Friends</div>
<div style="position:absolute;left:1076.20px;top:317.64px;font-size:12px;line-height:12px;color:#f2f2f2;white-space:nowrap;">7</div>
<div style="position:absolute;left:1156.70px;top:317.64px;font-size:12px;line-height:12px;color:#f2f2f2;white-space:nowrap;letter-spacing:-0.3px">11</div>
<div style="position:absolute;left:1233.50px;top:317.64px;font-size:12px;line-height:12px;color:#f2f2f2;white-space:nowrap;letter-spacing:-0.27px">English</div>
<div style="position:absolute;left:1345.30px;top:317.64px;font-size:12px;line-height:12px;color:#f2f2f2;white-space:nowrap;letter-spacing:-0.34px">Spanish</div>
<div style="position:absolute;left:1426.60px;top:317.64px;font-size:12px;line-height:12px;color:#f2f2f2;white-space:nowrap;">With script</div>
<svg style="position:absolute;left:1529.80px;top:308.40px" width="24" height="24" viewBox="0 0 24 24"><g transform="translate(12 12) rotate(45)"><ellipse cx="0" cy="0" rx="4.4" ry="7.2" fill="#8dc63f"/><path d="M0 -6 V-11.3 M0 6 V11.3" stroke="#8dc63f" stroke-width="1.9" stroke-linecap="round"/><path d="M-5.6 -1.5 H-3 M3 1.5 H5.6" stroke="#8dc63f" stroke-width="1.6"/><path d="M-1 -0.8 L1 0.8" stroke="#6a9a30" stroke-width=".8"/></g></svg>
<svg style="position:absolute;left:1564.00px;top:318.30px" width="77" height="12" viewBox="0 0 77 12"><path d="M0 10.5 H10.2 L14.9 0.3 M14.4 10.5 H24.3 L29.3 0.3 M29.3 10.5 H49.8 M52.1 10.5 H63 M65.1 10.5 H75.7" stroke="#f2f2f2" stroke-width="1.15" fill="none"/><rect x="63.3" y="3.3" width="1.3" height="1.3" fill="#f2f2f2"/><rect x="63.3" y="7.3" width="1.3" height="1.3" fill="#f2f2f2"/></svg>
<svg style="position:absolute;left:1718.80px;top:318.30px" width="77" height="12" viewBox="0 0 77 12"><path d="M0 10.5 H10.2 L14.9 0.3 M14.4 10.5 H24.3 L29.3 0.3 M29.3 10.5 H49.8 M52.1 10.5 H63 M65.1 10.5 H75.7" stroke="#f2f2f2" stroke-width="1.15" fill="none"/><rect x="63.3" y="3.3" width="1.3" height="1.3" fill="#f2f2f2"/><rect x="63.3" y="7.3" width="1.3" height="1.3" fill="#f2f2f2"/></svg>
<svg style="position:absolute;left:21.00px;top:343.00px" width="16" height="16" viewBox="0 0 16 16"><path d="M0 3.6 L3.6 0 L8 4.4 L12.4 0 L16 3.6 L11.6 8 L16 12.4 L12.4 16 L8 11.6 L3.6 16 L0 12.4 L4.4 8 Z" fill="#a30000"/><path d="M0 3.6 L3.6 0 L8 4.4 L12.4 0 L16 3.6 L11.6 8 L8 6.5 L4.4 8 Z" fill="#c42020" opacity=".5"/></svg>
<div style="position:absolute;left:64.50px;top:348.44px;font-size:12px;line-height:12px;color:#f2f2f2;white-space:nowrap;letter-spacing:-0.28px">In Progress</div>
<svg style="position:absolute;left:163.30px;top:344.00px" width="16" height="15" viewBox="0 0 16 15"><path d="M1.5 1 V14" stroke="#8a8a8a" stroke-width="1.2"/><path d="M2 2 Q5 0.5 8 2 Q11.5 3.5 15 2 V10 Q11.5 11.5 8 10 Q5 8.5 2 10 Z" fill="none" stroke="#8a8a8a" stroke-width="1"/><path d="M8 2.5 V10" stroke="#777" stroke-width=".6"/></svg>
<svg style="position:absolute;left:225.30px;top:343.40px" width="16" height="16" viewBox="0 0 16 16"><path d="M0.3 4 Q0.3 0.6 3 0.6 H12.4 Q15 0.6 15 4 V12.6 Q15 15.2 12.4 15.2 H3 Q0.3 15.2 0.3 12.6 Z" fill="#d6d6d6"/><path d="M0.8 3.6 Q0.8 0.6 3.2 0.6 H12.2 Q14.6 0.6 14.6 3.6 Z" fill="#3a3a3a"/><rect x="3.4" y="6.2" width="11.4" height="5.4" fill="#c2c2c2"/><rect x="0.3" y="3.6" width="2.8" height="11" fill="#e6e6e6"/><path d="M3.1 3.6 V15" stroke="#6a6a6a" stroke-width=".7"/></svg>
<svg style="position:absolute;left:275.70px;top:343.40px" width="14" height="16.5" viewBox="0 0 14 16.5"><path d="M0.4 2.3 L8.5 0 V15.5 H0.4 Z" fill="#dadada"/><path d="M8.5 1.9 H10.9 V10.5 L13 12.3 V15.5 H8.5 Z" fill="#d2d2d2"/><path d="M8.5 0.2 V14.6" stroke="#3a3a3a" stroke-width=".8"/><path d="M10.9 2 V10.8" stroke="#444" stroke-width=".6"/><path d="M3 15 Q6 13.5 8.5 14.5" stroke="#aaa" stroke-width=".6" fill="none"/></svg>
<svg style="position:absolute;left:326.00px;top:343.20px" width="16.5" height="16.5" viewBox="0 0 16.5 16.5"><ellipse cx="8" cy="7" rx="8" ry="7" fill="#0f4aa6"/><path d="M8.5 12.5 Q11 15.5 14 16.5 Q12.8 14.5 12.8 11 Z" fill="#0f4aa6"/><text x="8" y="11" font-size="10.5" font-weight="bold" text-anchor="middle" fill="#fff" font-family="Liberation Sans" style="-webkit-text-stroke:0">?</text></svg>
<svg style="position:absolute;left:377.80px;top:342.80px" width="15" height="16.5" viewBox="0 0 15 16.5"><path d="M4.9 0.6 H11.3 L13.9 3.2 V13.9 H4.9 Z" fill="#fff" stroke="#111" stroke-width="1.1"/><path d="M0.6 2.6 H6.9 L9.7 5.4 V15.5 H0.6 Z" fill="#fff" stroke="#111" stroke-width="1.1"/><path d="M6.9 2.6 V5.4 H9.7" fill="none" stroke="#111" stroke-width=".8"/><path d="M11.3 0.6 V3.2 H13.9" fill="none" stroke="#111" stroke-width=".8"/><rect x="2.2" y="7.3" width="5.8" height="5.5" fill="#9a9a9a"/></svg>
<div style="position:absolute;left:417.60px;top:348.44px;font-size:12px;line-height:12px;color:#f2f2f2;white-space:nowrap;letter-spacing:-0.3px">186934</div>
<div style="position:absolute;left:505.40px;top:348.44px;font-size:12px;line-height:12px;color:#f2f2f2;white-space:nowrap;">Maya Media Produ...</div>
<div style="position:absolute;left:631.60px;top:348.44px;font-size:12px;line-height:12px;color:#f2f2f2;white-space:nowrap;letter-spacing:-0.25px">Friends 7</div>
<div style="position:absolute;left:847.50px;top:348.44px;font-size:12px;line-height:12px;color:#f2f2f2;white-space:nowrap;letter-spacing:-0.3px">00:22:00</div>
<svg style="position:absolute;left:948.00px;top:343.20px" width="16.5" height="16.5" viewBox="0 0 16.5 16.5"><ellipse cx="8" cy="7" rx="8" ry="7" fill="#0f4aa6"/><path d="M8.5 12.5 Q11 15.5 14 16.5 Q12.8 14.5 12.8 11 Z" fill="#0f4aa6"/><rect x="6.9" y="5.3" width="2.5" height="5.8" fill="#fff"/><rect x="6.9" y="2.2" width="2.5" height="2.1" fill="#fff"/></svg>
<div style="position:absolute;left:989.50px;top:348.44px;font-size:12px;line-height:12px;color:#f2f2f2;white-space:nowrap;letter-spacing:-0.24px">Friends</div>
<div style="position:absolute;left:1076.20px;top:348.44px;font-size:12px;line-height:12px;color:#f2f2f2;white-space:nowrap;">7</div>
<div style="position:absolute;left:1156.70px;top:348.44px;font-size:12px;line-height:12px;color:#f2f2f2;white-space:nowrap;letter-spacing:-0.3px">12</div>
<div style="position:absolute;left:1233.50px;top:348.44px;font-size:12px;line-height:12px;color:#f2f2f2;white-space:nowrap;letter-spacing:-0.27px">English</div>
<div style="position:absolute;left:1345.30px;top:348.44px;font-size:12px;line-height:12px;color:#f2f2f2;white-space:nowrap;letter-spacing:-0.34px">Spanish</div>
<div style="position:absolute;left:1426.60px;top:348.44px;font-size:12px;line-height:12px;color:#f2f2f2;white-space:nowrap;">With script</div>
<svg style="position:absolute;left:1529.80px;top:339.20px" width="24" height="24" viewBox="0 0 24 24"><g transform="translate(12 12) rotate(45)"><ellipse cx="0" cy="0" rx="4.4" ry="7.2" fill="#8dc63f"/><path d="M0 -6 V-11.3 M0 6 V11.3" stroke="#8dc63f" stroke-width="1.9" stroke-linecap="round"/><path d="M-5.6 -1.5 H-3 M3 1.5 H5.6" stroke="#8dc63f" stroke-width="1.6"/><path d="M-1 -0.8 L1 0.8" stroke="#6a9a30" stroke-width=".8"/></g></svg>
<svg style="position:absolute;left:1564.00px;top:349.10px" width="77" height="12" viewBox="0 0 77 12"><path d="M0 10.5 H10.2 L14.9 0.3 M14.4 10.5 H24.3 L29.3 0.3 M29.3 10.5 H49.8 M52.1 10.5 H63 M65.1 10.5 H75.7" stroke="#f2f2f2" stroke-width="1.15" fill="none"/><rect x="63.3" y="3.3" width="1.3" height="1.3" fill="#f2f2f2"/><rect x="63.3" y="7.3" width="1.3" height="1.3" fill="#f2f2f2"/></svg>
<svg style="position:absolute;left:1718.80px;top:349.10px" width="77" height="12" viewBox="0 0 77 12"><path d="M0 10.5 H10.2 L14.9 0.3 M14.4 10.5 H24.3 L29.3 0.3 M29.3 10.5 H49.8 M52.1 10.5 H63 M65.1 10.5 H75.7" stroke="#f2f2f2" stroke-width="1.15" fill="none"/><rect x="63.3" y="3.3" width="1.3" height="1.3" fill="#f2f2f2"/><rect x="63.3" y="7.3" width="1.3" height="1.3" fill="#f2f2f2"/></svg>
<svg style="position:absolute;left:21.00px;top:373.80px" width="16" height="16" viewBox="0 0 16 16"><path d="M0 3.6 L3.6 0 L8 4.4 L12.4 0 L16 3.6 L11.6 8 L16 12.4 L12.4 16 L8 11.6 L3.6 16 L0 12.4 L4.4 8 Z" fill="#a30000"/><path d="M0 3.6 L3.6 0 L8 4.4 L12.4 0 L16 3.6 L11.6 8 L8 6.5 L4.4 8 Z" fill="#c42020" opacity=".5"/></svg>
<div style="position:absolute;left:64.50px;top:379.24px;font-size:12px;line-height:12px;color:#f2f2f2;white-space:nowrap;letter-spacing:-0.28px">In Progress</div>
<svg style="position:absolute;left:163.30px;top:374.80px" width="16" height="15" viewBox="0 0 16 15"><path d="M1.5 1 V14" stroke="#8a8a8a" stroke-width="1.2"/><path d="M2 2 Q5 0.5 8 2 Q11.5 3.5 15 2 V10 Q11.5 11.5 8 10 Q5 8.5 2 10 Z" fill="none" stroke="#8a8a8a" stroke-width="1"/><path d="M8 2.5 V10" stroke="#777" stroke-width=".6"/></svg>
<svg style="position:absolute;left:225.30px;top:374.20px" width="16" height="16" viewBox="0 0 16 16"><path d="M0.3 4 Q0.3 0.6 3 0.6 H12.4 Q15 0.6 15 4 V12.6 Q15 15.2 12.4 15.2 H3 Q0.3 15.2 0.3 12.6 Z" fill="#d6d6d6"/><path d="M0.8 3.6 Q0.8 0.6 3.2 0.6 H12.2 Q14.6 0.6 14.6 3.6 Z" fill="#3a3a3a"/><rect x="3.4" y="6.2" width="11.4" height="5.4" fill="#c2c2c2"/><rect x="0.3" y="3.6" width="2.8" height="11" fill="#e6e6e6"/><path d="M3.1 3.6 V15" stroke="#6a6a6a" stroke-width=".7"/></svg>
<svg style="position:absolute;left:275.70px;top:374.20px" width="14" height="16.5" viewBox="0 0 14 16.5"><path d="M0.4 2.3 L8.5 0 V15.5 H0.4 Z" fill="#dadada"/><path d="M8.5 1.9 H10.9 V10.5 L13 12.3 V15.5 H8.5 Z" fill="#d2d2d2"/><path d="M8.5 0.2 V14.6" stroke="#3a3a3a" stroke-width=".8"/><path d="M10.9 2 V10.8" stroke="#444" stroke-width=".6"/><path d="M3 15 Q6 13.5 8.5 14.5" stroke="#aaa" stroke-width=".6" fill="none"/></svg>
<svg style="position:absolute;left:326.00px;top:374.00px" width="16.5" height="16.5" viewBox="0 0 16.5 16.5"><ellipse cx="8" cy="7" rx="8" ry="7" fill="#0f4aa6"/><path d="M8.5 12.5 Q11 15.5 14 16.5 Q12.8 14.5 12.8 11 Z" fill="#0f4aa6"/><text x="8" y="11" font-size="10.5" font-weight="bold" text-anchor="middle" fill="#fff" font-family="Liberation Sans" style="-webkit-text-stroke:0">?</text></svg>
<svg style="position:absolute;left:377.80px;top:373.60px" width="15" height="16.5" viewBox="0 0 15 16.5"><path d="M4.9 0.6 H11.3 L13.9 3.2 V13.9 H4.9 Z" fill="#fff" stroke="#111" stroke-width="1.1"/><path d="M0.6 2.6 H6.9 L9.7 5.4 V15.5 H0.6 Z" fill="#fff" stroke="#111" stroke-width="1.1"/><path d="M6.9 2.6 V5.4 H9.7" fill="none" stroke="#111" stroke-width=".8"/><path d="M11.3 0.6 V3.2 H13.9" fill="none" stroke="#111" stroke-width=".8"/><rect x="2.2" y="7.3" width="5.8" height="5.5" fill="#9a9a9a"/></svg>
<div style="position:absolute;left:417.60px;top:379.24px;font-size:12px;line-height:12px;color:#f2f2f2;white-space:nowrap;letter-spacing:-0.3px">186935</div>
<div style="position:absolute;left:505.40px;top:379.24px;font-size:12px;line-height:12px;color:#f2f2f2;white-space:nowrap;">Maya Media Produ...</div>
<div style="position:absolute;left:631.60px;top:379.24px;font-size:12px;line-height:12px;color:#f2f2f2;white-space:nowrap;letter-spacing:-0.25px">Friends 7</div>
<div style="position:absolute;left:847.50px;top:379.24px;font-size:12px;line-height:12px;color:#f2f2f2;white-space:nowrap;letter-spacing:-0.3px">00:22:00</div>
<svg style="position:absolute;left:948.00px;top:374.00px" width="16.5" height="16.5" viewBox="0 0 16.5 16.5"><ellipse cx="8" cy="7" rx="8" ry="7" fill="#0f4aa6"/><path d="M8.5 12.5 Q11 15.5 14 16.5 Q12.8 14.5 12.8 11 Z" fill="#0f4aa6"/><rect x="6.9" y="5.3" width="2.5" height="5.8" fill="#fff"/><rect x="6.9" y="2.2" width="2.5" height="2.1" fill="#fff"/></svg>
<div style="position:absolute;left:989.50px;top:379.24px;font-size:12px;line-height:12px;color:#f2f2f2;white-space:nowrap;letter-spacing:-0.24px">Friends</div>
<div style="position:absolute;left:1076.20px;top:379.24px;font-size:12px;line-height:12px;color:#f2f2f2;white-space:nowrap;">7</div>
<div style="position:absolute;left:1156.70px;top:379.24px;font-size:12px;line-height:12px;color:#f2f2f2;white-space:nowrap;letter-spacing:-0.3px">13</div>
<div style="position:absolute;left:1233.50px;top:379.24px;font-size:12px;line-height:12px;color:#f2f2f2;white-space:nowrap;letter-spacing:-0.27px">English</div>
<div style="position:absolute;left:1345.30px;top:379.24px;font-size:12px;line-height:12px;color:#f2f2f2;white-space:nowrap;letter-spacing:-0.34px">Spanish</div>
<div style="position:absolute;left:1426.60px;top:379.24px;font-size:12px;line-height:12px;color:#f2f2f2;white-space:nowrap;">With script</div>
<svg style="position:absolute;left:1529.80px;top:370.00px" width="24" height="24" viewBox="0 0 24 24"><g transform="translate(12 12) rotate(45)"><ellipse cx="0" cy="0" rx="4.4" ry="7.2" fill="#8dc63f"/><path d="M0 -6 V-11.3 M0 6 V11.3" stroke="#8dc63f" stroke-width="1.9" stroke-linecap="round"/><path d="M-5.6 -1.5 H-3 M3 1.5 H5.6" stroke="#8dc63f" stroke-width="1.6"/><path d="M-1 -0.8 L1 0.8" stroke="#6a9a30" stroke-width=".8"/></g></svg>
<svg style="position:absolute;left:1564.00px;top:379.90px" width="77" height="12" viewBox="0 0 77 12"><path d="M0 10.5 H10.2 L14.9 0.3 M14.4 10.5 H24.3 L29.3 0.3 M29.3 10.5 H49.8 M52.1 10.5 H63 M65.1 10.5 H75.7" stroke="#f2f2f2" stroke-width="1.15" fill="none"/><rect x="63.3" y="3.3" width="1.3" height="1.3" fill="#f2f2f2"/><rect x="63.3" y="7.3" width="1.3" height="1.3" fill="#f2f2f2"/></svg>
<svg style="position:absolute;left:1718.80px;top:379.90px" width="77" height="12" viewBox="0 0 77 12"><path d="M0 10.5 H10.2 L14.9 0.3 M14.4 10.5 H24.3 L29.3 0.3 M29.3 10.5 H49.8 M52.1 10.5 H63 M65.1 10.5 H75.7" stroke="#f2f2f2" stroke-width="1.15" fill="none"/><rect x="63.3" y="3.3" width="1.3" height="1.3" fill="#f2f2f2"/><rect x="63.3" y="7.3" width="1.3" height="1.3" fill="#f2f2f2"/></svg>
<svg style="position:absolute;left:21.00px;top:404.60px" width="16" height="16" viewBox="0 0 16 16"><path d="M0 3.6 L3.6 0 L8 4.4 L12.4 0 L16 3.6 L11.6 8 L16 12.4 L12.4 16 L8 11.6 L3.6 16 L0 12.4 L4.4 8 Z" fill="#a30000"/><path d="M0 3.6 L3.6 0 L8 4.4 L12.4 0 L16 3.6 L11.6 8 L8 6.5 L4.4 8 Z" fill="#c42020" opacity=".5"/></svg>
<div style="position:absolute;left:64.50px;top:410.04px;font-size:12px;line-height:12px;color:#f2f2f2;white-space:nowrap;letter-spacing:-0.28px">In Progress</div>
<svg style="position:absolute;left:163.30px;top:405.60px" width="16" height="15" viewBox="0 0 16 15"><path d="M1.5 1 V14" stroke="#8a8a8a" stroke-width="1.2"/><path d="M2 2 Q5 0.5 8 2 Q11.5 3.5 15 2 V10 Q11.5 11.5 8 10 Q5 8.5 2 10 Z" fill="none" stroke="#8a8a8a" stroke-width="1"/><path d="M8 2.5 V10" stroke="#777" stroke-width=".6"/></svg>
<svg style="position:absolute;left:225.30px;top:405.00px" width="16" height="16" viewBox="0 0 16 16"><path d="M0.3 4 Q0.3 0.6 3 0.6 H12.4 Q15 0.6 15 4 V12.6 Q15 15.2 12.4 15.2 H3 Q0.3 15.2 0.3 12.6 Z" fill="#d6d6d6"/><path d="M0.8 3.6 Q0.8 0.6 3.2 0.6 H12.2 Q14.6 0.6 14.6 3.6 Z" fill="#3a3a3a"/><rect x="3.4" y="6.2" width="11.4" height="5.4" fill="#c2c2c2"/><rect x="0.3" y="3.6" width="2.8" height="11" fill="#e6e6e6"/><path d="M3.1 3.6 V15" stroke="#6a6a6a" stroke-width=".7"/></svg>
<svg style="position:absolute;left:275.70px;top:405.00px" width="14" height="16.5" viewBox="0 0 14 16.5"><path d="M0.4 2.3 L8.5 0 V15.5 H0.4 Z" fill="#dadada"/><path d="M8.5 1.9 H10.9 V10.5 L13 12.3 V15.5 H8.5 Z" fill="#d2d2d2"/><path d="M8.5 0.2 V14.6" stroke="#3a3a3a" stroke-width=".8"/><path d="M10.9 2 V10.8" stroke="#444" stroke-width=".6"/><path d="M3 15 Q6 13.5 8.5 14.5" stroke="#aaa" stroke-width=".6" fill="none"/></svg>
<svg style="position:absolute;left:326.00px;top:404.80px" width="16.5" height="16.5" viewBox="0 0 16.5 16.5"><ellipse cx="8" cy="7" rx="8" ry="7" fill="#0f4aa6"/><path d="M8.5 12.5 Q11 15.5 14 16.5 Q12.8 14.5 12.8 11 Z" fill="#0f4aa6"/><text x="8" y="11" font-size="10.5" font-weight="bold" text-anchor="middle" fill="#fff" font-family="Liberation Sans" style="-webkit-text-stroke:0">?</text></svg>
<svg style="position:absolute;left:377.80px;top:404.40px" width="15" height="16.5" viewBox="0 0 15 16.5"><path d="M4.9 0.6 H11.3 L13.9 3.2 V13.9 H4.9 Z" fill="#fff" stroke="#111" stroke-width="1.1"/><path d="M0.6 2.6 H6.9 L9.7 5.4 V15.5 H0.6 Z" fill="#fff" stroke="#111" stroke-width="1.1"/><path d="M6.9 2.6 V5.4 H9.7" fill="none" stroke="#111" stroke-width=".8"/><path d="M11.3 0.6 V3.2 H13.9" fill="none" stroke="#111" stroke-width=".8"/><rect x="2.2" y="7.3" width="5.8" height="5.5" fill="#9a9a9a"/></svg>
<div style="position:absolute;left:417.60px;top:410.04px;font-size:12px;line-height:12px;color:#f2f2f2;white-space:nowrap;letter-spacing:-0.3px">186936</div>
<div style="position:absolute;left:505.40px;top:410.04px;font-size:12px;line-height:12px;color:#f2f2f2;white-space:nowrap;">Maya Media Produ...</div>
<div style="position:absolute;left:631.60px;top:410.04px;font-size:12px;line-height:12px;color:#f2f2f2;white-space:nowrap;letter-spacing:-0.25px">Friends 7</div>
<div style="position:absolute;left:847.50px;top:410.04px;font-size:12px;line-height:12px;color:#f2f2f2;white-space:nowrap;letter-spacing:-0.3px">00:22:00</div>
<svg style="position:absolute;left:948.00px;top:404.80px" width="16.5" height="16.5" viewBox="0 0 16.5 16.5"><ellipse cx="8" cy="7" rx="8" ry="7" fill="#0f4aa6"/><path d="M8.5 12.5 Q11 15.5 14 16.5 Q12.8 14.5 12.8 11 Z" fill="#0f4aa6"/><rect x="6.9" y="5.3" width="2.5" height="5.8" fill="#fff"/><rect x="6.9" y="2.2" width="2.5" height="2.1" fill="#fff"/></svg>
<div style="position:absolute;left:989.50px;top:410.04px;font-size:12px;line-height:12px;color:#f2f2f2;white-space:nowrap;letter-spacing:-0.24px">Friends</div>
<div style="position:absolute;left:1076.20px;top:410.04px;font-size:12px;line-height:12px;color:#f2f2f2;white-space:nowrap;">7</div>
<div style="position:absolute;left:1156.70px;top:410.04px;font-size:12px;line-height:12px;color:#f2f2f2;white-space:nowrap;letter-spacing:-0.3px">14</div>
<div style="position:absolute;left:1233.50px;top:410.04px;font-size:12px;line-height:12px;color:#f2f2f2;white-space:nowrap;letter-spacing:-0.27px">English</div>
<div style="position:absolute;left:1345.30px;top:410.04px;font-size:12px;line-height:12px;color:#f2f2f2;white-space:nowrap;letter-spacing:-0.34px">Spanish</div>
<div style="position:absolute;left:1426.60px;top:410.04px;font-size:12px;line-height:12px;color:#f2f2f2;white-space:nowrap;">With script</div>
<svg style="position:absolute;left:1529.80px;top:400.80px" width="24" height="24" viewBox="0 0 24 24"><g transform="translate(12 12) rotate(45)"><ellipse cx="0" cy="0" rx="4.4" ry="7.2" fill="#8dc63f"/><path d="M0 -6 V-11.3 M0 6 V11.3" stroke="#8dc63f" stroke-width="1.9" stroke-linecap="round"/><path d="M-5.6 -1.5 H-3 M3 1.5 H5.6" stroke="#8dc63f" stroke-width="1.6"/><path d="M-1 -0.8 L1 0.8" stroke="#6a9a30" stroke-width=".8"/></g></svg>
<svg style="position:absolute;left:1564.00px;top:410.70px" width="77" height="12" viewBox="0 0 77 12"><path d="M0 10.5 H10.2 L14.9 0.3 M14.4 10.5 H24.3 L29.3 0.3 M29.3 10.5 H49.8 M52.1 10.5 H63 M65.1 10.5 H75.7" stroke="#f2f2f2" stroke-width="1.15" fill="none"/><rect x="63.3" y="3.3" width="1.3" height="1.3" fill="#f2f2f2"/><rect x="63.3" y="7.3" width="1.3" height="1.3" fill="#f2f2f2"/></svg>
<svg style="position:absolute;left:1718.80px;top:410.70px" width="77" height="12" viewBox="0 0 77 12"><path d="M0 10.5 H10.2 L14.9 0.3 M14.4 10.5 H24.3 L29.3 0.3 M29.3 10.5 H49.8 M52.1 10.5 H63 M65.1 10.5 H75.7" stroke="#f2f2f2" stroke-width="1.15" fill="none"/><rect x="63.3" y="3.3" width="1.3" height="1.3" fill="#f2f2f2"/><rect x="63.3" y="7.3" width="1.3" height="1.3" fill="#f2f2f2"/></svg>
<svg style="position:absolute;left:21.00px;top:435.40px" width="16" height="16" viewBox="0 0 16 16"><path d="M0 3.6 L3.6 0 L8 4.4 L12.4 0 L16 3.6 L11.6 8 L16 12.4 L12.4 16 L8 11.6 L3.6 16 L0 12.4 L4.4 8 Z" fill="#a30000"/><path d="M0 3.6 L3.6 0 L8 4.4 L12.4 0 L16 3.6 L11.6 8 L8 6.5 L4.4 8 Z" fill="#c42020" opacity=".5"/></svg>
<div style="position:absolute;left:64.50px;top:440.84px;font-size:12px;line-height:12px;color:#f2f2f2;white-space:nowrap;letter-spacing:-0.28px">In Progress</div>
<svg style="position:absolute;left:163.30px;top:436.40px" width="16" height="15" viewBox="0 0 16 15"><path d="M1.5 1 V14" stroke="#8a8a8a" stroke-width="1.2"/><path d="M2 2 Q5 0.5 8 2 Q11.5 3.5 15 2 V10 Q11.5 11.5 8 10 Q5 8.5 2 10 Z" fill="none" stroke="#8a8a8a" stroke-width="1"/><path d="M8 2.5 V10" stroke="#777" stroke-width=".6"/></svg>
<svg style="position:absolute;left:225.30px;top:435.80px" width="16" height="16" viewBox="0 0 16 16"><path d="M0.3 4 Q0.3 0.6 3 0.6 H12.4 Q15 0.6 15 4 V12.6 Q15 15.2 12.4 15.2 H3 Q0.3 15.2 0.3 12.6 Z" fill="#d6d6d6"/><path d="M0.8 3.6 Q0.8 0.6 3.2 0.6 H12.2 Q14.6 0.6 14.6 3.6 Z" fill="#3a3a3a"/><rect x="3.4" y="6.2" width="11.4" height="5.4" fill="#c2c2c2"/><rect x="0.3" y="3.6" width="2.8" height="11" fill="#e6e6e6"/><path d="M3.1 3.6 V15" stroke="#6a6a6a" stroke-width=".7"/></svg>
<svg style="position:absolute;left:275.70px;top:435.80px" width="14" height="16.5" viewBox="0 0 14 16.5"><path d="M0.4 2.3 L8.5 0 V15.5 H0.4 Z" fill="#dadada"/><path d="M8.5 1.9 H10.9 V10.5 L13 12.3 V15.5 H8.5 Z" fill="#d2d2d2"/><path d="M8.5 0.2 V14.6" stroke="#3a3a3a" stroke-width=".8"/><path d="M10.9 2 V10.8" stroke="#444" stroke-width=".6"/><path d="M3 15 Q6 13.5 8.5 14.5" stroke="#aaa" stroke-width=".6" fill="none"/></svg>
<svg style="position:absolute;left:326.00px;top:435.60px" width="16.5" height="16.5" viewBox="0 0 16.5 16.5"><ellipse cx="8" cy="7" rx="8" ry="7" fill="#0f4aa6"/><path d="M8.5 12.5 Q11 15.5 14 16.5 Q12.8 14.5 12.8 11 Z" fill="#0f4aa6"/><text x="8" y="11" font-size="10.5" font-weight="bold" text-anchor="middle" fill="#fff" font-family="Liberation Sans" style="-webkit-text-stroke:0">?</text></svg>
<svg style="position:absolute;left:377.80px;top:435.20px" width="15" height="16.5" viewBox="0 0 15 16.5"><path d="M4.9 0.6 H11.3 L13.9 3.2 V13.9 H4.9 Z" fill="#fff" stroke="#111" stroke-width="1.1"/><path d="M0.6 2.6 H6.9 L9.7 5.4 V15.5 H0.6 Z" fill="#fff" stroke="#111" stroke-width="1.1"/><path d="M6.9 2.6 V5.4 H9.7" fill="none" stroke="#111" stroke-width=".8"/><path d="M11.3 0.6 V3.2 H13.9" fill="none" stroke="#111" stroke-width=".8"/><rect x="2.2" y="7.3" width="5.8" height="5.5" fill="#9a9a9a"/></svg>
<div style="position:absolute;left:417.60px;top:440.84px;font-size:12px;line-height:12px;color:#f2f2f2;white-space:nowrap;letter-spacing:-0.3px">186937</div>
<div style="position:absolute;left:505.40px;top:440.84px;font-size:12px;line-height:12px;color:#f2f2f2;white-space:nowrap;">Maya Media Produ...</div>
<div style="position:absolute;left:631.60px;top:440.84px;font-size:12px;line-height:12px;color:#f2f2f2;white-space:nowrap;letter-spacing:-0.25px">Friends 7</div>
<div style="position:absolute;left:847.50px;top:440.84px;font-size:12px;line-height:12px;color:#f2f2f2;white-space:nowrap;letter-spacing:-0.3px">00:22:00</div>
<svg style="position:absolute;left:948.00px;top:435.60px" width="16.5" height="16.5" viewBox="0 0 16.5 16.5"><ellipse cx="8" cy="7" rx="8" ry="7" fill="#0f4aa6"/><path d="M8.5 12.5 Q11 15.5 14 16.5 Q12.8 14.5 12.8 11 Z" fill="#0f4aa6"/><rect x="6.9" y="5.3" width="2.5" height="5.8" fill="#fff"/><rect x="6.9" y="2.2" width="2.5" height="2.1" fill="#fff"/></svg>
<div style="position:absolute;left:989.50px;top:440.84px;font-size:12px;line-height:12px;color:#f2f2f2;white-space:nowrap;letter-spacing:-0.24px">Friends</div>
<div style="position:absolute;left:1076.20px;top:440.84px;font-size:12px;line-height:12px;color:#f2f2f2;white-space:nowrap;">7</div>
<div style="position:absolute;left:1156.70px;top:440.84px;font-size:12px;line-height:12px;color:#f2f2f2;white-space:nowrap;letter-spacing:-0.3px">15</div>
<div style="position:absolute;left:1233.50px;top:440.84px;font-size:12px;line-height:12px;color:#f2f2f2;white-space:nowrap;letter-spacing:-0.27px">English</div>
<div style="position:absolute;left:1345.30px;top:440.84px;font-size:12px;line-height:12px;color:#f2f2f2;white-space:nowrap;letter-spacing:-0.34px">Spanish</div>
<div style="position:absolute;left:1426.60px;top:440.84px;font-size:12px;line-height:12px;color:#f2f2f2;white-space:nowrap;">With script</div>
<svg style="position:absolute;left:1529.80px;top:431.60px" width="24" height="24" viewBox="0 0 24 24"><g transform="translate(12 12) rotate(45)"><ellipse cx="0" cy="0" rx="4.4" ry="7.2" fill="#8dc63f"/><path d="M0 -6 V-11.3 M0 6 V11.3" stroke="#8dc63f" stroke-width="1.9" stroke-linecap="round"/><path d="M-5.6 -1.5 H-3 M3 1.5 H5.6" stroke="#8dc63f" stroke-width="1.6"/><path d="M-1 -0.8 L1 0.8" stroke="#6a9a30" stroke-width=".8"/></g></svg>
<svg style="position:absolute;left:1564.00px;top:441.50px" width="77" height="12" viewBox="0 0 77 12"><path d="M0 10.5 H10.2 L14.9 0.3 M14.4 10.5 H24.3 L29.3 0.3 M29.3 10.5 H49.8 M52.1 10.5 H63 M65.1 10.5 H75.7" stroke="#f2f2f2" stroke-width="1.15" fill="none"/><rect x="63.3" y="3.3" width="1.3" height="1.3" fill="#f2f2f2"/><rect x="63.3" y="7.3" width="1.3" height="1.3" fill="#f2f2f2"/></svg>
<svg style="position:absolute;left:1718.80px;top:441.50px" width="77" height="12" viewBox="0 0 77 12"><path d="M0 10.5 H10.2 L14.9 0.3 M14.4 10.5 H24.3 L29.3 0.3 M29.3 10.5 H49.8 M52.1 10.5 H63 M65.1 10.5 H75.7" stroke="#f2f2f2" stroke-width="1.15" fill="none"/><rect x="63.3" y="3.3" width="1.3" height="1.3" fill="#f2f2f2"/><rect x="63.3" y="7.3" width="1.3" height="1.3" fill="#f2f2f2"/></svg>
<svg style="position:absolute;left:21.00px;top:466.20px" width="16" height="16" viewBox="0 0 16 16"><path d="M0 3.6 L3.6 0 L8 4.4 L12.4 0 L16 3.6 L11.6 8 L16 12.4 L12.4 16 L8 11.6 L3.6 16 L0 12.4 L4.4 8 Z" fill="#a30000"/><path d="M0 3.6 L3.6 0 L8 4.4 L12.4 0 L16 3.6 L11.6 8 L8 6.5 L4.4 8 Z" fill="#c42020" opacity=".5"/></svg>
<div style="position:absolute;left:64.50px;top:471.64px;font-size:12px;line-height:12px;color:#f2f2f2;white-space:nowrap;letter-spacing:-0.28px">In Progress</div>
<svg style="position:absolute;left:163.30px;top:467.20px" width="16" height="15" viewBox="0 0 16 15"><path d="M1.5 1 V14" stroke="#8a8a8a" stroke-width="1.2"/><path d="M2 2 Q5 0.5 8 2 Q11.5 3.5 15 2 V10 Q11.5 11.5 8 10 Q5 8.5 2 10 Z" fill="none" stroke="#8a8a8a" stroke-width="1"/><path d="M8 2.5 V10" stroke="#777" stroke-width=".6"/></svg>
<svg style="position:absolute;left:225.30px;top:466.60px" width="16" height="16" viewBox="0 0 16 16"><path d="M0.3 4 Q0.3 0.6 3 0.6 H12.4 Q15 0.6 15 4 V12.6 Q15 15.2 12.4 15.2 H3 Q0.3 15.2 0.3 12.6 Z" fill="#d6d6d6"/><path d="M0.8 3.6 Q0.8 0.6 3.2 0.6 H12.2 Q14.6 0.6 14.6 3.6 Z" fill="#3a3a3a"/><rect x="3.4" y="6.2" width="11.4" height="5.4" fill="#c2c2c2"/><rect x="0.3" y="3.6" width="2.8" height="11" fill="#e6e6e6"/><path d="M3.1 3.6 V15" stroke="#6a6a6a" stroke-width=".7"/></svg>
<svg style="position:absolute;left:275.70px;top:466.60px" width="14" height="16.5" viewBox="0 0 14 16.5"><path d="M0.4 2.3 L8.5 0 V15.5 H0.4 Z" fill="#dadada"/><path d="M8.5 1.9 H10.9 V10.5 L13 12.3 V15.5 H8.5 Z" fill="#d2d2d2"/><path d="M8.5 0.2 V14.6" stroke="#3a3a3a" stroke-width=".8"/><path d="M10.9 2 V10.8" stroke="#444" stroke-width=".6"/><path d="M3 15 Q6 13.5 8.5 14.5" stroke="#aaa" stroke-width=".6" fill="none"/></svg>
<svg style="position:absolute;left:326.00px;top:466.40px" width="16.5" height="16.5" viewBox="0 0 16.5 16.5"><ellipse cx="8" cy="7" rx="8" ry="7" fill="#0f4aa6"/><path d="M8.5 12.5 Q11 15.5 14 16.5 Q12.8 14.5 12.8 11 Z" fill="#0f4aa6"/><text x="8" y="11" font-size="10.5" font-weight="bold" text-anchor="middle" fill="#fff" font-family="Liberation Sans" style="-webkit-text-stroke:0">?</text></svg>
<svg style="position:absolute;left:377.80px;top:466.00px" width="15" height="16.5" viewBox="0 0 15 16.5"><path d="M4.9 0.6 H11.3 L13.9 3.2 V13.9 H4.9 Z" fill="#fff" stroke="#111" stroke-width="1.1"/><path d="M0.6 2.6 H6.9 L9.7 5.4 V15.5 H0.6 Z" fill="#fff" stroke="#111" stroke-width="1.1"/><path d="M6.9 2.6 V5.4 H9.7" fill="none" stroke="#111" stroke-width=".8"/><path d="M11.3 0.6 V3.2 H13.9" fill="none" stroke="#111" stroke-width=".8"/><rect x="2.2" y="7.3" width="5.8" height="5.5" fill="#9a9a9a"/></svg>
<div style="position:absolute;left:417.60px;top:471.64px;font-size:12px;line-height:12px;color:#f2f2f2;white-space:nowrap;letter-spacing:-0.3px">186938</div>
<div style="position:absolute;left:505.40px;top:471.64px;font-size:12px;line-height:12px;color:#f2f2f2;white-space:nowrap;">Maya Media Produ...</div>
<div style="position:absolute;left:631.60px;top:471.64px;font-size:12px;line-height:12px;color:#f2f2f2;white-space:nowrap;letter-spacing:-0.25px">Friends 7</div>
<div style="position:absolute;left:847.50px;top:471.64px;font-size:12px;line-height:12px;color:#f2f2f2;white-space:nowrap;letter-spacing:-0.3px">00:22:00</div>
<svg style="position:absolute;left:948.00px;top:466.40px" width="16.5" height="16.5" viewBox="0 0 16.5 16.5"><ellipse cx="8" cy="7" rx="8" ry="7" fill="#0f4aa6"/><path d="M8.5 12.5 Q11 15.5 14 16.5 Q12.8 14.5 12.8 11 Z" fill="#0f4aa6"/><rect x="6.9" y="5.3" width="2.5" height="5.8" fill="#fff"/><rect x="6.9" y="2.2" width="2.5" height="2.1" fill="#fff"/></svg>
<div style="position:absolute;left:989.50px;top:471.64px;font-size:12px;line-height:12px;color:#f2f2f2;white-space:nowrap;letter-spacing:-0.24px">Friends</div>
<div style="position:absolute;left:1076.20px;top:471.64px;font-size:12px;line-height:12px;color:#f2f2f2;white-space:nowrap;">7</div>
<div style="position:absolute;left:1156.70px;top:471.64px;font-size:12px;line-height:12px;color:#f2f2f2;white-space:nowrap;letter-spacing:-0.3px">16</div>
<div style="position:absolute;left:1233.50px;top:471.64px;font-size:12px;line-height:12px;color:#f2f2f2;white-space:nowrap;letter-spacing:-0.27px">English</div>
<div style="position:absolute;left:1345.30px;top:471.64px;font-size:12px;line-height:12px;color:#f2f2f2;white-space:nowrap;letter-spacing:-0.34px">Spanish</div>
<div style="position:absolute;left:1426.60px;top:471.64px;font-size:12px;line-height:12px;color:#f2f2f2;white-space:nowrap;">With script</div>
<svg style="position:absolute;left:1529.80px;top:462.40px" width="24" height="24" viewBox="0 0 24 24"><g transform="translate(12 12) rotate(45)"><ellipse cx="0" cy="0" rx="4.4" ry="7.2" fill="#8dc63f"/><path d="M0 -6 V-11.3 M0 6 V11.3" stroke="#8dc63f" stroke-width="1.9" stroke-linecap="round"/><path d="M-5.6 -1.5 H-3 M3 1.5 H5.6" stroke="#8dc63f" stroke-width="1.6"/><path d="M-1 -0.8 L1 0.8" stroke="#6a9a30" stroke-width=".8"/></g></svg>
<svg style="position:absolute;left:1564.00px;top:472.30px" width="77" height="12" viewBox="0 0 77 12"><path d="M0 10.5 H10.2 L14.9 0.3 M14.4 10.5 H24.3 L29.3 0.3 M29.3 10.5 H49.8 M52.1 10.5 H63 M65.1 10.5 H75.7" stroke="#f2f2f2" stroke-width="1.15" fill="none"/><rect x="63.3" y="3.3" width="1.3" height="1.3" fill="#f2f2f2"/><rect x="63.3" y="7.3" width="1.3" height="1.3" fill="#f2f2f2"/></svg>
<svg style="position:absolute;left:1718.80px;top:472.30px" width="77" height="12" viewBox="0 0 77 12"><path d="M0 10.5 H10.2 L14.9 0.3 M14.4 10.5 H24.3 L29.3 0.3 M29.3 10.5 H49.8 M52.1 10.5 H63 M65.1 10.5 H75.7" stroke="#f2f2f2" stroke-width="1.15" fill="none"/><rect x="63.3" y="3.3" width="1.3" height="1.3" fill="#f2f2f2"/><rect x="63.3" y="7.3" width="1.3" height="1.3" fill="#f2f2f2"/></svg>
<svg style="position:absolute;left:21.00px;top:497.00px" width="16" height="16" viewBox="0 0 16 16"><path d="M0 3.6 L3.6 0 L8 4.4 L12.4 0 L16 3.6 L11.6 8 L16 12.4 L12.4 16 L8 11.6 L3.6 16 L0 12.4 L4.4 8 Z" fill="#a30000"/><path d="M0 3.6 L3.6 0 L8 4.4 L12.4 0 L16 3.6 L11.6 8 L8 6.5 L4.4 8 Z" fill="#c42020" opacity=".5"/></svg>
<div style="position:absolute;left:64.50px;top:502.44px;font-size:12px;line-height:12px;color:#f2f2f2;white-space:nowrap;letter-spacing:-0.28px">In Progress</div>
<svg style="position:absolute;left:163.30px;top:498.00px" width="16" height="15" viewBox="0 0 16 15"><path d="M1.5 1 V14" stroke="#8a8a8a" stroke-width="1.2"/><path d="M2 2 Q5 0.5 8 2 Q11.5 3.5 15 2 V10 Q11.5 11.5 8 10 Q5 8.5 2 10 Z" fill="none" stroke="#8a8a8a" stroke-width="1"/><path d="M8 2.5 V10" stroke="#777" stroke-width=".6"/></svg>
<svg style="position:absolute;left:225.30px;top:497.40px" width="16" height="16" viewBox="0 0 16 16"><path d="M0.3 4 Q0.3 0.6 3 0.6 H12.4 Q15 0.6 15 4 V12.6 Q15 15.2 12.4 15.2 H3 Q0.3 15.2 0.3 12.6 Z" fill="#d6d6d6"/><path d="M0.8 3.6 Q0.8 0.6 3.2 0.6 H12.2 Q14.6 0.6 14.6 3.6 Z" fill="#3a3a3a"/><rect x="3.4" y="6.2" width="11.4" height="5.4" fill="#c2c2c2"/><rect x="0.3" y="3.6" width="2.8" height="11" fill="#e6e6e6"/><path d="M3.1 3.6 V15" stroke="#6a6a6a" stroke-width=".7"/></svg>
<svg style="position:absolute;left:275.70px;top:497.40px" width="14" height="16.5" viewBox="0 0 14 16.5"><path d="M0.4 2.3 L8.5 0 V15.5 H0.4 Z" fill="#dadada"/><path d="M8.5 1.9 H10.9 V10.5 L13 12.3 V15.5 H8.5 Z" fill="#d2d2d2"/><path d="M8.5 0.2 V14.6" stroke="#3a3a3a" stroke-width=".8"/><path d="M10.9 2 V10.8" stroke="#444" stroke-width=".6"/><path d="M3 15 Q6 13.5 8.5 14.5" stroke="#aaa" stroke-width=".6" fill="none"/></svg>
<svg style="position:absolute;left:326.00px;top:497.20px" width="16.5" height="16.5" viewBox="0 0 16.5 16.5"><ellipse cx="8" cy="7" rx="8" ry="7" fill="#0f4aa6"/><path d="M8.5 12.5 Q11 15.5 14 16.5 Q12.8 14.5 12.8 11 Z" fill="#0f4aa6"/><text x="8" y="11" font-size="10.5" font-weight="bold" text-anchor="middle" fill="#fff" font-family="Liberation Sans" style="-webkit-text-stroke:0">?</text></svg>
<svg style="position:absolute;left:377.80px;top:496.80px" width="15" height="16.5" viewBox="0 0 15 16.5"><path d="M4.9 0.6 H11.3 L13.9 3.2 V13.9 H4.9 Z" fill="#fff" stroke="#111" stroke-width="1.1"/><path d="M0.6 2.6 H6.9 L9.7 5.4 V15.5 H0.6 Z" fill="#fff" stroke="#111" stroke-width="1.1"/><path d="M6.9 2.6 V5.4 H9.7" fill="none" stroke="#111" stroke-width=".8"/><path d="M11.3 0.6 V3.2 H13.9" fill="none" stroke="#111" stroke-width=".8"/><rect x="2.2" y="7.3" width="5.8" height="5.5" fill="#9a9a9a"/></svg>
<div style="position:absolute;left:417.60px;top:502.44px;font-size:12px;line-height:12px;color:#f2f2f2;white-space:nowrap;letter-spacing:-0.3px">186939</div>
<div style="position:absolute;left:505.40px;top:502.44px;font-size:12px;line-height:12px;color:#f2f2f2;white-space:nowrap;">Maya Media Produ...</div>
<div style="position:absolute;left:631.60px;top:502.44px;font-size:12px;line-height:12px;color:#f2f2f2;white-space:nowrap;letter-spacing:-0.25px">Friends 7</div>
<div style="position:absolute;left:847.50px;top:502.44px;font-size:12px;line-height:12px;color:#f2f2f2;white-space:nowrap;letter-spacing:-0.3px">00:22:00</div>
<svg style="position:absolute;left:948.00px;top:497.20px" width="16.5" height="16.5" viewBox="0 0 16.5 16.5"><ellipse cx="8" cy="7" rx="8" ry="7" fill="#0f4aa6"/><path d="M8.5 12.5 Q11 15.5 14 16.5 Q12.8 14.5 12.8 11 Z" fill="#0f4aa6"/><rect x="6.9" y="5.3" width="2.5" height="5.8" fill="#fff"/><rect x="6.9" y="2.2" width="2.5" height="2.1" fill="#fff"/></svg>
<div style="position:absolute;left:989.50px;top:502.44px;font-size:12px;line-height:12px;color:#f2f2f2;white-space:nowrap;letter-spacing:-0.24px">Friends</div>
<div style="position:absolute;left:1076.20px;top:502.44px;font-size:12px;line-height:12px;color:#f2f2f2;white-space:nowrap;">7</div>
<div style="position:absolute;left:1156.70px;top:502.44px;font-size:12px;line-height:12px;color:#f2f2f2;white-space:nowrap;letter-spacing:-0.3px">17</div>
<div style="position:absolute;left:1233.50px;top:502.44px;font-size:12px;line-height:12px;color:#f2f2f2;white-space:nowrap;letter-spacing:-0.27px">English</div>
<div style="position:absolute;left:1345.30px;top:502.44px;font-size:12px;line-height:12px;color:#f2f2f2;white-space:nowrap;letter-spacing:-0.34px">Spanish</div>
<div style="position:absolute;left:1426.60px;top:502.44px;font-size:12px;line-height:12px;color:#f2f2f2;white-space:nowrap;">With script</div>
<svg style="position:absolute;left:1529.80px;top:493.20px" width="24" height="24" viewBox="0 0 24 24"><g transform="translate(12 12) rotate(45)"><ellipse cx="0" cy="0" rx="4.4" ry="7.2" fill="#8dc63f"/><path d="M0 -6 V-11.3 M0 6 V11.3" stroke="#8dc63f" stroke-width="1.9" stroke-linecap="round"/><path d="M-5.6 -1.5 H-3 M3 1.5 H5.6" stroke="#8dc63f" stroke-width="1.6"/><path d="M-1 -0.8 L1 0.8" stroke="#6a9a30" stroke-width=".8"/></g></svg>
<svg style="position:absolute;left:1564.00px;top:503.10px" width="77" height="12" viewBox="0 0 77 12"><path d="M0 10.5 H10.2 L14.9 0.3 M14.4 10.5 H24.3 L29.3 0.3 M29.3 10.5 H49.8 M52.1 10.5 H63 M65.1 10.5 H75.7" stroke="#f2f2f2" stroke-width="1.15" fill="none"/><rect x="63.3" y="3.3" width="1.3" height="1.3" fill="#f2f2f2"/><rect x="63.3" y="7.3" width="1.3" height="1.3" fill="#f2f2f2"/></svg>
<svg style="position:absolute;left:1718.80px;top:503.10px" width="77" height="12" viewBox="0 0 77 12"><path d="M0 10.5 H10.2 L14.9 0.3 M14.4 10.5 H24.3 L29.3 0.3 M29.3 10.5 H49.8 M52.1 10.5 H63 M65.1 10.5 H75.7" stroke="#f2f2f2" stroke-width="1.15" fill="none"/><rect x="63.3" y="3.3" width="1.3" height="1.3" fill="#f2f2f2"/><rect x="63.3" y="7.3" width="1.3" height="1.3" fill="#f2f2f2"/></svg>
<svg style="position:absolute;left:21.00px;top:527.80px" width="16" height="16" viewBox="0 0 16 16"><path d="M0 3.6 L3.6 0 L8 4.4 L12.4 0 L16 3.6 L11.6 8 L16 12.4 L12.4 16 L8 11.6 L3.6 16 L0 12.4 L4.4 8 Z" fill="#a30000"/><path d="M0 3.6 L3.6 0 L8 4.4 L12.4 0 L16 3.6 L11.6 8 L8 6.5 L4.4 8 Z" fill="#c42020" opacity=".5"/></svg>
<div style="position:absolute;left:64.50px;top:533.24px;font-size:12px;line-height:12px;color:#f2f2f2;white-space:nowrap;letter-spacing:-0.28px">In Progress</div>
<svg style="position:absolute;left:163.30px;top:528.80px" width="16" height="15" viewBox="0 0 16 15"><path d="M1.5 1 V14" stroke="#8a8a8a" stroke-width="1.2"/><path d="M2 2 Q5 0.5 8 2 Q11.5 3.5 15 2 V10 Q11.5 11.5 8 10 Q5 8.5 2 10 Z" fill="none" stroke="#8a8a8a" stroke-width="1"/><path d="M8 2.5 V10" stroke="#777" stroke-width=".6"/></svg>
<svg style="position:absolute;left:225.30px;top:528.20px" width="16" height="16" viewBox="0 0 16 16"><path d="M0.3 4 Q0.3 0.6 3 0.6 H12.4 Q15 0.6 15 4 V12.6 Q15 15.2 12.4 15.2 H3 Q0.3 15.2 0.3 12.6 Z" fill="#d6d6d6"/><path d="M0.8 3.6 Q0.8 0.6 3.2 0.6 H12.2 Q14.6 0.6 14.6 3.6 Z" fill="#3a3a3a"/><rect x="3.4" y="6.2" width="11.4" height="5.4" fill="#c2c2c2"/><rect x="0.3" y="3.6" width="2.8" height="11" fill="#e6e6e6"/><path d="M3.1 3.6 V15" stroke="#6a6a6a" stroke-width=".7"/></svg>
<svg style="position:absolute;left:275.70px;top:528.20px" width="14" height="16.5" viewBox="0 0 14 16.5"><path d="M0.4 2.3 L8.5 0 V15.5 H0.4 Z" fill="#dadada"/><path d="M8.5 1.9 H10.9 V10.5 L13 12.3 V15.5 H8.5 Z" fill="#d2d2d2"/><path d="M8.5 0.2 V14.6" stroke="#3a3a3a" stroke-width=".8"/><path d="M10.9 2 V10.8" stroke="#444" stroke-width=".6"/><path d="M3 15 Q6 13.5 8.5 14.5" stroke="#aaa" stroke-width=".6" fill="none"/></svg>
<svg style="position:absolute;left:326.00px;top:528.00px" width="16.5" height="16.5" viewBox="0 0 16.5 16.5"><ellipse cx="8" cy="7" rx="8" ry="7" fill="#0f4aa6"/><path d="M8.5 12.5 Q11 15.5 14 16.5 Q12.8 14.5 12.8 11 Z" fill="#0f4aa6"/><text x="8" y="11" font-size="10.5" font-weight="bold" text-anchor="middle" fill="#fff" font-family="Liberation Sans" style="-webkit-text-stroke:0">?</text></svg>
<svg style="position:absolute;left:377.80px;top:527.60px" width="15" height="16.5" viewBox="0 0 15 16.5"><path d="M4.9 0.6 H11.3 L13.9 3.2 V13.9 H4.9 Z" fill="#fff" stroke="#111" stroke-width="1.1"/><path d="M0.6 2.6 H6.9 L9.7 5.4 V15.5 H0.6 Z" fill="#fff" stroke="#111" stroke-width="1.1"/><path d="M6.9 2.6 V5.4 H9.7" fill="none" stroke="#111" stroke-width=".8"/><path d="M11.3 0.6 V3.2 H13.9" fill="none" stroke="#111" stroke-width=".8"/><rect x="2.2" y="7.3" width="5.8" height="5.5" fill="#9a9a9a"/></svg>
<div style="position:absolute;left:417.60px;top:533.24px;font-size:12px;line-height:12px;color:#f2f2f2;white-space:nowrap;letter-spacing:-0.3px">186940</div>
<div style="position:absolute;left:505.40px;top:533.24px;font-size:12px;line-height:12px;color:#f2f2f2;white-space:nowrap;">Maya Media Produ...</div>
<div style="position:absolute;left:631.60px;top:533.24px;font-size:12px;line-height:12px;color:#f2f2f2;white-space:nowrap;letter-spacing:-0.25px">Friends 7</div>
<div style="position:absolute;left:847.50px;top:533.24px;font-size:12px;line-height:12px;color:#f2f2f2;white-space:nowrap;letter-spacing:-0.3px">00:22:00</div>
<svg style="position:absolute;left:948.00px;top:528.00px" width="16.5" height="16.5" viewBox="0 0 16.5 16.5"><ellipse cx="8" cy="7" rx="8" ry="7" fill="#0f4aa6"/><path d="M8.5 12.5 Q11 15.5 14 16.5 Q12.8 14.5 12.8 11 Z" fill="#0f4aa6"/><rect x="6.9" y="5.3" width="2.5" height="5.8" fill="#fff"/><rect x="6.9" y="2.2" width="2.5" height="2.1" fill="#fff"/></svg>
<div style="position:absolute;left:989.50px;top:533.24px;font-size:12px;line-height:12px;color:#f2f2f2;white-space:nowrap;letter-spacing:-0.24px">Friends</div>
<div style="position:absolute;left:1076.20px;top:533.24px;font-size:12px;line-height:12px;color:#f2f2f2;white-space:nowrap;">7</div>
<div style="position:absolute;left:1156.70px;top:533.24px;font-size:12px;line-height:12px;color:#f2f2f2;white-space:nowrap;letter-spacing:-0.3px">18</div>
<div style="position:absolute;left:1233.50px;top:533.24px;font-size:12px;line-height:12px;color:#f2f2f2;white-space:nowrap;letter-spacing:-0.27px">English</div>
<div style="position:absolute;left:1345.30px;top:533.24px;font-size:12px;line-height:12px;color:#f2f2f2;white-space:nowrap;letter-spacing:-0.34px">Spanish</div>
<div style="position:absolute;left:1426.60px;top:533.24px;font-size:12px;line-height:12px;color:#f2f2f2;white-space:nowrap;">With script</div>
<svg style="position:absolute;left:1529.80px;top:524.00px" width="24" height="24" viewBox="0 0 24 24"><g transform="translate(12 12) rotate(45)"><ellipse cx="0" cy="0" rx="4.4" ry="7.2" fill="#8dc63f"/><path d="M0 -6 V-11.3 M0 6 V11.3" stroke="#8dc63f" stroke-width="1.9" stroke-linecap="round"/><path d="M-5.6 -1.5 H-3 M3 1.5 H5.6" stroke="#8dc63f" stroke-width="1.6"/><path d="M-1 -0.8 L1 0.8" stroke="#6a9a30" stroke-width=".8"/></g></svg>
<svg style="position:absolute;left:1564.00px;top:533.90px" width="77" height="12" viewBox="0 0 77 12"><path d="M0 10.5 H10.2 L14.9 0.3 M14.4 10.5 H24.3 L29.3 0.3 M29.3 10.5 H49.8 M52.1 10.5 H63 M65.1 10.5 H75.7" stroke="#f2f2f2" stroke-width="1.15" fill="none"/><rect x="63.3" y="3.3" width="1.3" height="1.3" fill="#f2f2f2"/><rect x="63.3" y="7.3" width="1.3" height="1.3" fill="#f2f2f2"/></svg>
<svg style="position:absolute;left:1718.80px;top:533.90px" width="77" height="12" viewBox="0 0 77 12"><path d="M0 10.5 H10.2 L14.9 0.3 M14.4 10.5 H24.3 L29.3 0.3 M29.3 10.5 H49.8 M52.1 10.5 H63 M65.1 10.5 H75.7" stroke="#f2f2f2" stroke-width="1.15" fill="none"/><rect x="63.3" y="3.3" width="1.3" height="1.3" fill="#f2f2f2"/><rect x="63.3" y="7.3" width="1.3" height="1.3" fill="#f2f2f2"/></svg>
</div>
<div style="position:absolute;left:1880px;top:269.8px;width:17.4px;height:530.9000000000001px;background:#f0f0f0"></div>
<svg style="position:absolute;left:1884.5px;top:276px" width="9" height="6" viewBox="0 0 9 6"><path d="M0.5 5.5 L4.5 0.5 L8.5 5.5 Z" fill="#a3a3a3"/></svg>
<div style="position:absolute;left:1882.5px;top:287.2px;width:12.5px;height:428.4px;background:#c1c1c1"></div>
<svg style="position:absolute;left:1884.5px;top:788.5px" width="9" height="6" viewBox="0 0 9 6"><path d="M0.5 0.5 L4.5 5.5 L8.5 0.5 Z" fill="#505050"/></svg>
<div style="position:absolute;left:10px;top:800.7px;width:1870px;height:17.1px;background:#f0f0f0;border-top:1px solid #fff;border-bottom:1px solid #fff;box-sizing:border-box"></div>
<div style="position:absolute;left:28px;top:803.1px;width:685px;height:12.6px;background:#c1c1c1"></div>
<svg style="position:absolute;left:17px;top:806px" width="6" height="9" viewBox="0 0 6 9"><path d="M5.5 0.5 L0.5 4.5 L5.5 8.5 Z" fill="#a3a3a3"/></svg>
<svg style="position:absolute;left:1869.5px;top:805.8px" width="6" height="9" viewBox="0 0 6 9"><path d="M0.5 0.5 L5.5 4.5 L0.5 8.5 Z" fill="#505050"/></svg>
<div style="position:absolute;left:1880px;top:800.7px;width:17.4px;height:17.1px;background:repeating-linear-gradient(45deg,#d8d8d8 0 1px,#e8e8e8 1px 3px)"></div>
<div style="position:absolute;left:10px;top:817.8px;width:1888px;height:32.700000000000045px;background:linear-gradient(to bottom, rgba(255,255,255,0) -1px, rgba(255,255,255,0.062) 5px, rgba(255,255,255,0.080) 11px, rgba(255,255,255,0.1) 14.5px, rgba(255,255,255,0.04) 16px, rgba(255,255,255,0) 28px), #2a2626;"></div>
<svg style="position:absolute;left:17px;top:822px" width="16" height="16" viewBox="0 0 16 16"><circle cx="8" cy="8" r="8" fill="#7ab648"/><path d="M8 3.5 V12.5 M3.5 8 H12.5" stroke="#fff" stroke-width="2.4"/></svg>
<div style="position:absolute;left:41.7px;top:827.84px;font-size:12px;line-height:12px;color:#f2f2f2;white-space:nowrap;">Add new order</div>
<svg style="position:absolute;left:127px;top:822px" width="16" height="16" viewBox="0 0 16 16"><circle cx="8" cy="8" r="8" fill="#7ab648"/><path d="M8 3.5 V12.5 M3.5 8 H12.5" stroke="#fff" stroke-width="2.4"/></svg>
<div style="position:absolute;left:151.3px;top:827.84px;font-size:12px;line-height:12px;color:#f2f2f2;white-space:nowrap;">Order generation wizard</div>
<div style="position:absolute;left:295px;top:827.84px;font-size:12px;line-height:12px;color:#dde8f0;white-space:nowrap;">|</div>
<svg style="position:absolute;left:312.7px;top:822px" width="17" height="17" viewBox="0 0 17 17"><path d="M0.5 0.5 H15.5 L9.5 8 V14 L6.5 15.5 V8 Z" fill="#9a9a9a"/><rect x="0.5" y="0.5" width="15" height="2.4" fill="#2ab0e8"/><circle cx="12" cy="12.5" r="3.2" fill="#7ab648"/><path d="M12 10.5 V14.5 M10 12.5 H14" stroke="#fff" stroke-width="1.1"/><circle cx="6.5" cy="14.5" r="1.3" fill="#f0b020"/></svg>
<div style="position:absolute;left:338.4px;top:827.84px;font-size:12px;line-height:12px;color:#f2f2f2;white-space:nowrap;">New range</div>
<svg style="position:absolute;left:402px;top:822px" width="17" height="17" viewBox="0 0 17 17"><path d="M0.5 0.5 H15.5 L9.5 8 V14 L6.5 15.5 V8 Z" fill="#9a9a9a"/><rect x="0.5" y="0.5" width="15" height="2.4" fill="#2ab0e8"/><path d="M8 15.5 L14.5 8.5 L16 10 L9.5 16.5 Z" fill="#f0a030"/><circle cx="6.5" cy="14.5" r="1.3" fill="#f0b020"/></svg>
<div style="position:absolute;left:426.4px;top:827.84px;font-size:12px;line-height:12px;color:#f2f2f2;white-space:nowrap;">Change range</div>
<svg style="position:absolute;left:507px;top:822px" width="17" height="17" viewBox="0 0 17 17"><path d="M0.5 0.5 H15.5 L9.5 8 V14 L6.5 15.5 V8 Z" fill="#9a9a9a"/><rect x="0.5" y="0.5" width="15" height="2.4" fill="#2ab0e8"/><path d="M9.5 10 L15 15.5 M15 10 L9.5 15.5" stroke="#cc1a1a" stroke-width="2"/><circle cx="6.5" cy="14.5" r="1.3" fill="#f0b020"/></svg>
<div style="position:absolute;left:531px;top:827.84px;font-size:12px;line-height:12px;color:#f2f2f2;white-space:nowrap;">Clear range</div>
<svg style="position:absolute;left:597.7px;top:822px" width="17" height="17" viewBox="0 0 17 17"><path d="M0.5 0.5 H15.5 L9.5 8 V14 L6.5 15.5 V8 Z" fill="#9a9a9a"/><rect x="0.5" y="0.5" width="15" height="2.4" fill="#2ab0e8"/><circle cx="12.5" cy="12.5" r="3" fill="#888" stroke="#bbb" stroke-width="1.2"/><circle cx="6.5" cy="14.5" r="1.3" fill="#f0b020"/></svg>
<div style="position:absolute;left:622.6px;top:827.84px;font-size:12px;line-height:12px;color:#f2f2f2;white-space:nowrap;">Preset range</div>
<svg style="position:absolute;left:694.6px;top:822px" width="16" height="16" viewBox="0 0 16 16"><polygon points="16.00,8.00 13.73,10.37 13.66,13.66 10.37,13.73 8.00,16.00 5.63,13.73 2.34,13.66 2.27,10.37 0.00,8.00 2.27,5.63 2.34,2.34 5.63,2.27 8.00,0.00 10.37,2.27 13.66,2.34 13.73,5.63" fill="#9a9a9a"/><circle cx="8" cy="8" r="3" fill="#2e2b2b"/><circle cx="8" cy="8" r="4.6" fill="none" stroke="#9a9a9a" stroke-width="1"/></svg>
<div style="position:absolute;left:719.6px;top:827.84px;font-size:12px;line-height:12px;color:#f2f2f2;white-space:nowrap;">Grid layout</div>
<svg style="position:absolute;left:784.3px;top:822px" width="16" height="16" viewBox="0 0 16 16"><circle cx="8" cy="8" r="8" fill="#7ab648"/><path d="M6 4.2 L12 8 L6 11.8 Z" fill="#fff"/></svg>
<div style="position:absolute;left:808.7px;top:827.84px;font-size:12px;line-height:12px;color:#f2f2f2;white-space:nowrap;">Generate export</div>
<div style="position:absolute;left:909px;top:827.84px;font-size:12px;line-height:12px;color:#dde8f0;white-space:nowrap;">|</div>
<div style="position:absolute;left:935px;top:827.84px;font-size:12px;line-height:12px;color:#5ab8e8;white-space:nowrap;">|</div>
<svg style="position:absolute;left:950px;top:818px" width="24" height="24" viewBox="0 0 24 24"><g transform="translate(12 12) rotate(45)"><ellipse cx="0" cy="0" rx="4.4" ry="7.2" fill="#8dc63f"/><path d="M0 -6 V-11.3 M0 6 V11.3" stroke="#8dc63f" stroke-width="1.9" stroke-linecap="round"/><path d="M-5 -1.5 H-3 M3 1.5 H5" stroke="#8dc63f" stroke-width="1.6"/></g></svg>
<div style="position:absolute;left:978px;top:827.84px;font-size:12px;line-height:12px;color:#f2f2f2;white-space:nowrap;">Connect all</div>
<svg style="position:absolute;left:1044px;top:822px" width="14" height="16" viewBox="0 0 14 16"><path d="M0.5 3 L6 0.5 V13 L0.5 15.5 Z" fill="#f0d080"/><path d="M6 0.5 L9 2 V11 L13.5 12.5 V15.5 H0.5 L6 13 Z" fill="#e6c060"/><g fill="#c8a040" opacity=".6"><circle cx="3" cy="6" r=".5"/><circle cx="4" cy="10" r=".5"/><circle cx="10" cy="14" r=".5"/></g></svg>
<div style="position:absolute;left:1068px;top:827.84px;font-size:12px;line-height:12px;color:#f2f2f2;white-space:nowrap;">Upload to Orders</div>
<svg style="position:absolute;left:1166.5px;top:822px" width="14" height="16" viewBox="0 0 14 16"><path d="M0.5 3 L6 0.5 V13 L0.5 15.5 Z" fill="#f0d080"/><path d="M6 0.5 L9 2 V11 L13.5 12.5 V15.5 H0.5 L6 13 Z" fill="#e6c060"/><g fill="#c8a040" opacity=".6"><circle cx="3" cy="6" r=".5"/><circle cx="4" cy="10" r=".5"/><circle cx="10" cy="14" r=".5"/></g></svg>
<div style="position:absolute;left:1190.2px;top:827.84px;font-size:12px;line-height:12px;color:#f2f2f2;white-space:nowrap;">Upload streaming folders</div>
<svg style="position:absolute;left:1331.8px;top:824px" width="16" height="15" viewBox="0 0 16 15"><path d="M0.5 0.5 H14.5 V10 H0.5 Z" fill="#fff" stroke="#aaa" stroke-width=".8"/><path d="M0.5 0.5 L7.5 6.5 L14.5 0.5" fill="none" stroke="#888" stroke-width="1"/><circle cx="11.5" cy="10.5" r="4.2" fill="#5ab83a"/><path d="M9 10.5 H13.5 M11.8 8.8 L13.5 10.5 L11.8 12.2" stroke="#fff" stroke-width="1.2" fill="none"/></svg>
<div style="position:absolute;left:1355.7px;top:827.84px;font-size:12px;line-height:12px;color:#f2f2f2;white-space:nowrap;">Email resources</div>
<svg style="position:absolute;left:1446.3px;top:822px" width="12" height="16" viewBox="0 0 12 16"><rect x="0" y="0" width="12" height="16" fill="#555"/><rect x="1" y="1" width="10" height="3.5" fill="#e8e8e8"/><g fill="#fff"><rect x="1" y="6" width="2.6" height="2.2"/><rect x="4.7" y="6" width="2.6" height="2.2"/><rect x="1" y="9.5" width="2.6" height="2.2"/><rect x="4.7" y="9.5" width="2.6" height="2.2"/><rect x="1" y="13" width="2.6" height="2.2"/><rect x="4.7" y="13" width="2.6" height="2.2"/></g><rect x="8.4" y="6" width="2.6" height="9.2" fill="#2ab0e8"/></svg>
<div style="position:absolute;left:1468.4px;top:827.84px;font-size:12px;line-height:12px;color:#f2f2f2;white-space:nowrap;">Recalculate</div>
<div style="position:absolute;left:10px;top:850.5px;width:1888px;height:35.0px;background:linear-gradient(to bottom, rgba(255,255,255,0) -1px, rgba(255,255,255,0.068) 5px, rgba(255,255,255,0.088) 12px, rgba(255,255,255,0.11) 15.5px, rgba(255,255,255,0.045) 17px, rgba(255,255,255,0) 28px), #2a2626;"></div>
<div style="position:absolute;left:14.8px;top:855px;width:26px;height:26px;border-radius:50%;background:radial-gradient(circle at 50% 40%, #2f2c2c 0, #262323 100%)"></div>
<svg style="position:absolute;left:22px;top:863px" width="11" height="10" viewBox="0 0 11 10"><rect x="0.5" y="0.5" width="2" height="9" fill="#8a8a8a"/><path d="M10 0.5 V9.5 L3 5 Z" fill="#8a8a8a"/></svg>
<div style="position:absolute;left:43px;top:855px;width:26px;height:26px;border-radius:50%;background:radial-gradient(circle at 50% 40%, #2f2c2c 0, #262323 100%)"></div>
<svg style="position:absolute;left:52px;top:863px" width="8" height="10" viewBox="0 0 8 10"><path d="M7.5 0.5 V9.5 L0.5 5 Z" fill="#8a8a8a"/></svg>
<div style="position:absolute;left:70.8px;top:855px;width:26.4px;height:26.4px;border-radius:50%;background:#1a72d4"></div>
<div style="position:absolute;left:80.3px;top:862.83px;font-size:12.6px;line-height:12.6px;color:#f2f2f2;white-space:nowrap;">1</div>
<div style="position:absolute;left:109px;top:863.09px;font-size:12.3px;line-height:12.3px;color:#f2f2f2;white-space:nowrap;">Page</div>
<div style="position:absolute;left:141px;top:856px;width:33.8px;height:24px;background:#fff;border-radius:3px"></div>
<div style="position:absolute;left:151px;top:861.84px;font-size:12px;line-height:12px;color:#333;white-space:nowrap;">1</div>
<div style="position:absolute;left:182.4px;top:863.09px;font-size:12.3px;line-height:12.3px;color:#f2f2f2;white-space:nowrap;">of 1</div>
<div style="position:absolute;left:215.4px;top:855px;width:26px;height:26px;border-radius:50%;background:radial-gradient(circle at 50% 40%, #2f2c2c 0, #262323 100%)"></div>
<svg style="position:absolute;left:224.5px;top:863px" width="8" height="10" viewBox="0 0 8 10"><path d="M0.5 0.5 V9.5 L7.5 5 Z" fill="#8a8a8a"/></svg>
<div style="position:absolute;left:243.4px;top:855px;width:26px;height:26px;border-radius:50%;background:radial-gradient(circle at 50% 40%, #2f2c2c 0, #262323 100%)"></div>
<svg style="position:absolute;left:252px;top:863px" width="11" height="10" viewBox="0 0 11 10"><path d="M0.5 0.5 V9.5 L7.5 5 Z" fill="#8a8a8a"/><rect x="8" y="0.5" width="2" height="9" fill="#8a8a8a"/></svg>
<div style="position:absolute;left:282.2px;top:855.8px;width:34px;height:24.2px;background:#fff;border-radius:3px 0 0 3px"></div>
<div style="position:absolute;left:289px;top:861.84px;font-size:12px;line-height:12px;color:#333;white-space:nowrap;">20</div>
<div style="position:absolute;left:316.2px;top:855.8px;width:24.2px;height:24.2px;border-radius:0 3px 3px 0;background:linear-gradient(to bottom, rgba(255,255,255,0) 0px, rgba(255,255,255,0.050) 6px, rgba(255,255,255,0.064) 8px, rgba(255,255,255,0.08) 11.5px, rgba(255,255,255,0.03) 13px, rgba(255,255,255,0) 20px), #2b2828;"></div>
<svg style="position:absolute;left:322.8px;top:865.5px" width="10" height="6" viewBox="0 0 10 6"><path d="M0 0 H10 L5 6 Z" fill="#fff"/></svg>
<div style="position:absolute;left:346.7px;top:863.17px;font-size:12.2px;line-height:12.2px;color:#f2f2f2;white-space:nowrap;">items per page</div>
<div style="position:absolute;left:1762.6px;top:862.64px;font-size:12px;line-height:12px;color:#f2f2f2;white-space:nowrap;">1 - 20 of 20 items</div>
<div style="position:absolute;left:1867px;top:855px;width:26px;height:26px;border-radius:50%;background:#262323"></div>
<svg style="position:absolute;left:1871.5px;top:859.5px" width="17" height="17" viewBox="0 0 17 17"><path d="M8.5 3 A6 6 0 1 0 13.7 6" fill="none" stroke="#fff" stroke-width="2.1"/><path d="M8 0 L12.6 3 L8 6 Z" fill="#fff"/></svg>
<div style="position:absolute;left:10px;top:886.3px;width:1888px;height:61.5px;box-sizing:border-box;border:1px solid #312d2d;border-bottom-color:#2a2626;border-radius:5px 5px 4px 4px;background:#2a2626"></div>
<div style="position:absolute;left:16.5px;top:897.5px;width:111.5px;height:38.3px;border-radius:6px;background:#252121;box-sizing:border-box;border:1px solid #2f2b2b"></div>
<div style="position:absolute;left:20px;top:901px;width:105px;height:32.8px;border-radius:4px;background:linear-gradient(to bottom, rgba(255,255,255,0) -1px, rgba(255,255,255,0.068) 5px, rgba(255,255,255,0.088) 10px, rgba(255,255,255,0.11) 13.5px, rgba(255,255,255,0.05) 15px, rgba(255,255,255,0) 28px), #262323;"></div>
<svg style="position:absolute;left:28px;top:907px" width="25" height="22" viewBox="0 0 25 22"><rect x="0" y="0" width="24" height="20.5" fill="#8ccaf2"/><path d="M0 2 H24" stroke="#e8f4fc" stroke-width=".8"/><path d="M0 5 H24" stroke="#e8f4fc" stroke-width=".8"/><path d="M0 8 H24" stroke="#e8f4fc" stroke-width=".8"/><path d="M0 11 H24" stroke="#e8f4fc" stroke-width=".8"/><path d="M0 14 H24" stroke="#e8f4fc" stroke-width=".8"/><path d="M0 17 H24" stroke="#e8f4fc" stroke-width=".8"/><path d="M0 20 H24" stroke="#e8f4fc" stroke-width=".8"/><path d="M8 0 V20.5 M16 0 V20.5" stroke="#3a9ae0" stroke-width="1"/><rect x="0.4" y="0.4" width="23.2" height="19.7" fill="none" stroke="#4aa8e8" stroke-width=".8"/><polygon points="23.20,16.00 21.60,17.49 21.68,19.68 19.49,19.60 18.00,21.20 16.51,19.60 14.32,19.68 14.40,17.49 12.80,16.00 14.40,14.51 14.32,12.32 16.51,12.40 18.00,10.80 19.49,12.40 21.68,12.32 21.60,14.51" fill="#a8a8a8"/><circle cx="18" cy="16" r="2.2" fill="#7cc0f0"/></svg>
<div style="position:absolute;left:54px;top:911.34px;font-size:12px;line-height:12px;color:#f2f2f2;white-space:nowrap;">Bulk actions</div>
<div style="position:absolute;left:133.3px;top:911.84px;font-size:12px;line-height:12px;color:#f2f2f2;white-space:nowrap;">Status</div>
<svg style="position:absolute;left:169px;top:913px" width="16" height="16" viewBox="0 0 16 16"><path d="M0 3.6 L3.6 0 L8 4.4 L12.4 0 L16 3.6 L11.6 8 L16 12.4 L12.4 16 L8 11.6 L3.6 16 L0 12.4 L4.4 8 Z" fill="#a30000"/><path d="M0 3.6 L3.6 0 L8 4.4 L12.4 0 L16 3.6 L11.6 8 L8 6.5 L4.4 8 Z" fill="#c42020" opacity=".5"/></svg>
<div style="position:absolute;left:190px;top:901.4px;width:145.8px;height:31.4px;background:#fff;border-radius:4px 0 0 4px"></div>
<div style="position:absolute;left:200px;top:910.79px;font-size:15.6px;line-height:15.6px;color:#222;white-space:nowrap;-webkit-text-stroke:0">In Progress</div>
<div style="position:absolute;left:335.8px;top:901.4px;width:32.8px;height:31.4px;border-radius:4px;box-sizing:border-box;border:1px solid #2e2b2b;background:linear-gradient(to bottom, rgba(255,255,255,0) 0.0px, rgba(255,255,255,0.074) 6.0px, rgba(255,255,255,0.096) 11.7px, rgba(255,255,255,0.12) 15.2px, rgba(255,255,255,0.05) 16.7px, rgba(255,255,255,0) 29.4px), #262323;"></div>
<svg style="position:absolute;left:347.2px;top:914.5px" width="10" height="6" viewBox="0 0 10 6"><path d="M0 0 H10 L5 6 Z" fill="#fff"/></svg>
<div style="position:absolute;left:374px;top:901.4px;width:82.6px;height:32px;border-radius:4px;box-sizing:border-box;border:1px solid #2e2b2b;background:linear-gradient(to bottom, rgba(255,255,255,0) 0.0px, rgba(255,255,255,0.074) 6.0px, rgba(255,255,255,0.096) 12.0px, rgba(255,255,255,0.12) 15.5px, rgba(255,255,255,0.05) 17.0px, rgba(255,255,255,0) 30.0px), #262323;"></div>
<div style="position:absolute;left:382.4px;top:911.14px;font-size:12px;line-height:12px;color:#f2f2f2;white-space:nowrap;">Set all status</div>
<div style="position:absolute;left:471.3px;top:912.64px;font-size:12px;line-height:12px;color:#f2f2f2;white-space:nowrap;">Flag</div>
<div style="position:absolute;left:517.9px;top:901.4px;width:126.3px;height:31.4px;background:#fff;border-radius:4px 0 0 4px"></div>
<div style="position:absolute;left:527px;top:910.79px;font-size:15.6px;line-height:15.6px;color:#222;white-space:nowrap;-webkit-text-stroke:0">Select flag...</div>
<div style="position:absolute;left:644.2px;top:901.4px;width:32.2px;height:31.4px;border-radius:4px;box-sizing:border-box;border:1px solid #2e2b2b;background:linear-gradient(to bottom, rgba(255,255,255,0) 0.0px, rgba(255,255,255,0.074) 6.0px, rgba(255,255,255,0.096) 11.7px, rgba(255,255,255,0.12) 15.2px, rgba(255,255,255,0.05) 16.7px, rgba(255,255,255,0) 29.4px), #262323;"></div>
<svg style="position:absolute;left:655.3px;top:914.5px" width="10" height="6" viewBox="0 0 10 6"><path d="M0 0 H10 L5 6 Z" fill="#fff"/></svg>
<div style="position:absolute;left:682px;top:901.4px;width:76px;height:32px;border-radius:4px;box-sizing:border-box;border:1px solid #2e2b2b;background:linear-gradient(to bottom, rgba(255,255,255,0) 0.0px, rgba(255,255,255,0.074) 6.0px, rgba(255,255,255,0.096) 12.0px, rgba(255,255,255,0.12) 15.5px, rgba(255,255,255,0.05) 17.0px, rgba(255,255,255,0) 30.0px), #262323;"></div>
<div style="position:absolute;left:689.4px;top:911.14px;font-size:12px;line-height:12px;color:#a0a0a0;white-space:nowrap;">Set all flags</div>
<div style="position:absolute;left:785.3px;top:913.84px;font-size:12px;line-height:12px;color:#f2f2f2;white-space:nowrap;">Update date</div>
<svg style="position:absolute;left:855px;top:912.5px" width="16" height="16" viewBox="0 0 16 16"><path d="M0 3.6 L3.6 0 L8 4.4 L12.4 0 L16 3.6 L11.6 8 L16 12.4 L12.4 16 L8 11.6 L3.6 16 L0 12.4 L4.4 8 Z" fill="#a30000"/><path d="M0 3.6 L3.6 0 L8 4.4 L12.4 0 L16 3.6 L11.6 8 L8 6.5 L4.4 8 Z" fill="#c42020" opacity=".5"/></svg>
<div style="position:absolute;left:882.7px;top:901.2px;width:133.6px;height:31.8px;background:#fff;border-radius:4px 0 0 4px;overflow:hidden"><div style="position:absolute;left:9.3px;top:9px;font-size:16px;line-height:16px;color:#222;white-space:nowrap;-webkit-text-stroke:0;letter-spacing:0.1px">02/05/2022 00:00</div></div>
<div style="position:absolute;left:1016.3px;top:901.2px;width:64.6px;height:31.8px;border-radius:4px;box-sizing:border-box;border:1px solid #2e2b2b;background:linear-gradient(to bottom, rgba(255,255,255,0) 0.0px, rgba(255,255,255,0.074) 6.0px, rgba(255,255,255,0.096) 11.9px, rgba(255,255,255,0.12) 15.4px, rgba(255,255,255,0.05) 16.9px, rgba(255,255,255,0) 29.8px), #262323;"></div>
<svg style="position:absolute;left:1025px;top:909.5px" width="16" height="16" viewBox="0 0 16 16"><rect x="1" y="2.5" width="13" height="12" fill="none" stroke="#fff" stroke-width="1.4"/><rect x="1" y="2.5" width="13" height="3" fill="#fff"/><rect x="3.5" y="0.5" width="1.6" height="3" fill="#fff"/><rect x="10" y="0.5" width="1.6" height="3" fill="#fff"/><rect x="8.5" y="10" width="3.5" height="3" fill="#fff"/></svg>
<svg style="position:absolute;left:1056px;top:910px" width="16" height="16" viewBox="0 0 16 16"><circle cx="8" cy="8" r="6.5" fill="none" stroke="#fff" stroke-width="1.4"/><path d="M8 4 V8.3 H11.3" stroke="#fff" stroke-width="1.4" fill="none"/></svg>
<div style="position:absolute;left:1081.7px;top:900.6px;width:30.3px;height:32.6px;border-radius:4px;box-sizing:border-box;border:1px solid #2e2b2b;background:linear-gradient(to bottom, rgba(255,255,255,0) 0.0px, rgba(255,255,255,0.074) 6.0px, rgba(255,255,255,0.096) 12.3px, rgba(255,255,255,0.12) 15.8px, rgba(255,255,255,0.05) 17.3px, rgba(255,255,255,0) 30.6px), #262323;"></div>
<svg style="position:absolute;left:1089px;top:909px" width="16" height="16" viewBox="0 0 16 16"><polygon points="16.00,8.00 13.73,10.37 13.66,13.66 10.37,13.73 8.00,16.00 5.63,13.73 2.34,13.66 2.27,10.37 0.00,8.00 2.27,5.63 2.34,2.34 5.63,2.27 8.00,0.00 10.37,2.27 13.66,2.34 13.73,5.63" fill="#8a8a8a"/><circle cx="8" cy="8" r="3" fill="#2e2b2b"/><circle cx="8" cy="8" r="4.6" fill="none" stroke="#8a8a8a" stroke-width="1"/></svg>
<div style="position:absolute;left:1131px;top:910.5px;font-size:12px;line-height:12px;color:#f2f2f2;white-space:nowrap">Edit mode: <b>click cell</b></div>
<div style="position:absolute;left:1242px;top:900.4px;width:33.3px;height:33.4px;border-radius:4px;box-sizing:border-box;border:1px solid #2e2b2b;background:linear-gradient(to bottom, rgba(255,255,255,0) 0.0px, rgba(255,255,255,0.074) 6.0px, rgba(255,255,255,0.096) 12.7px, rgba(255,255,255,0.12) 16.2px, rgba(255,255,255,0.05) 17.7px, rgba(255,255,255,0) 31.4px), #262323;"></div>
<svg style="position:absolute;left:1251px;top:909px" width="16" height="16" viewBox="0 0 16 16"><rect x="0" y="0" width="16" height="16" fill="#fff"/><g stroke="#555" stroke-width="1"><path d="M5.3 0 V16 M10.7 0 V16 M0 5.3 H16 M0 10.7 H16"/></g></svg>
<div style="position:absolute;left:1280.4px;top:900.4px;width:32.6px;height:33.4px;border-radius:4px;box-sizing:border-box;border:1px solid #2e2b2b;background:linear-gradient(to bottom, rgba(255,255,255,0) 0.0px, rgba(255,255,255,0.074) 6.0px, rgba(255,255,255,0.096) 12.7px, rgba(255,255,255,0.12) 16.2px, rgba(255,255,255,0.05) 17.7px, rgba(255,255,255,0) 31.4px), #262323;"></div>
<svg style="position:absolute;left:1289px;top:909px" width="16" height="16" viewBox="0 0 16 16"><rect x="0" y="0" width="16" height="16" fill="#ddd"/><g stroke="#777" stroke-width="1"><path d="M5.3 0 V16 M10.7 0 V16 M0 5.3 H16 M0 10.7 H16"/></g><rect x="5.8" y="5.8" width="4.4" height="4.4" fill="#4aa0e0"/><path d="M9 9 L15 15" stroke="#444" stroke-width="1.2"/></svg>
<div style="position:absolute;left:1318px;top:900.4px;width:34px;height:33.4px;border-radius:4px;background:#1a72d4"></div>
<svg style="position:absolute;left:1327px;top:909px" width="16" height="16" viewBox="0 0 16 16"><rect x="0" y="0" width="16" height="16" fill="#e8eef6"/><g stroke="#1a72d4" stroke-width="1"><path d="M5.3 0 V16 M10.7 0 V16 M0 5.3 H16 M0 10.7 H16"/></g><rect x="5.8" y="5.8" width="4.4" height="4.4" fill="#7ac0f0"/></svg>
<div style="position:absolute;left:1356.8px;top:900.4px;width:36.2px;height:33.4px;border-radius:4px;box-sizing:border-box;border:1px solid #2e2b2b;background:linear-gradient(to bottom, rgba(255,255,255,0) 0.0px, rgba(255,255,255,0.074) 6.0px, rgba(255,255,255,0.096) 12.7px, rgba(255,255,255,0.12) 16.2px, rgba(255,255,255,0.05) 17.7px, rgba(255,255,255,0) 31.4px), #262323;"></div>
<svg style="position:absolute;left:1366px;top:908px" width="20" height="20" viewBox="0 0 20 20"><g transform="scale(1.4)"><path d="M1.75 4.5 L5 7.5 L9.5 1" stroke="#fff" stroke-width="2.4" fill="none"/><path d="M0.5 8.25 L5 12.5 L12.25 5" stroke="#fff" stroke-width="2.6" fill="none"/></g></svg>
<svg style="position:absolute;left:1233.5px;top:900.5px" width="12" height="19" viewBox="0 0 12 19"><path d="M0.5 0.5 V15.5 L4 12 L6.5 18 L9 17 L6.5 11 H11.5 Z" fill="#fff" stroke="#000" stroke-width="1"/></svg>
</body></html>
